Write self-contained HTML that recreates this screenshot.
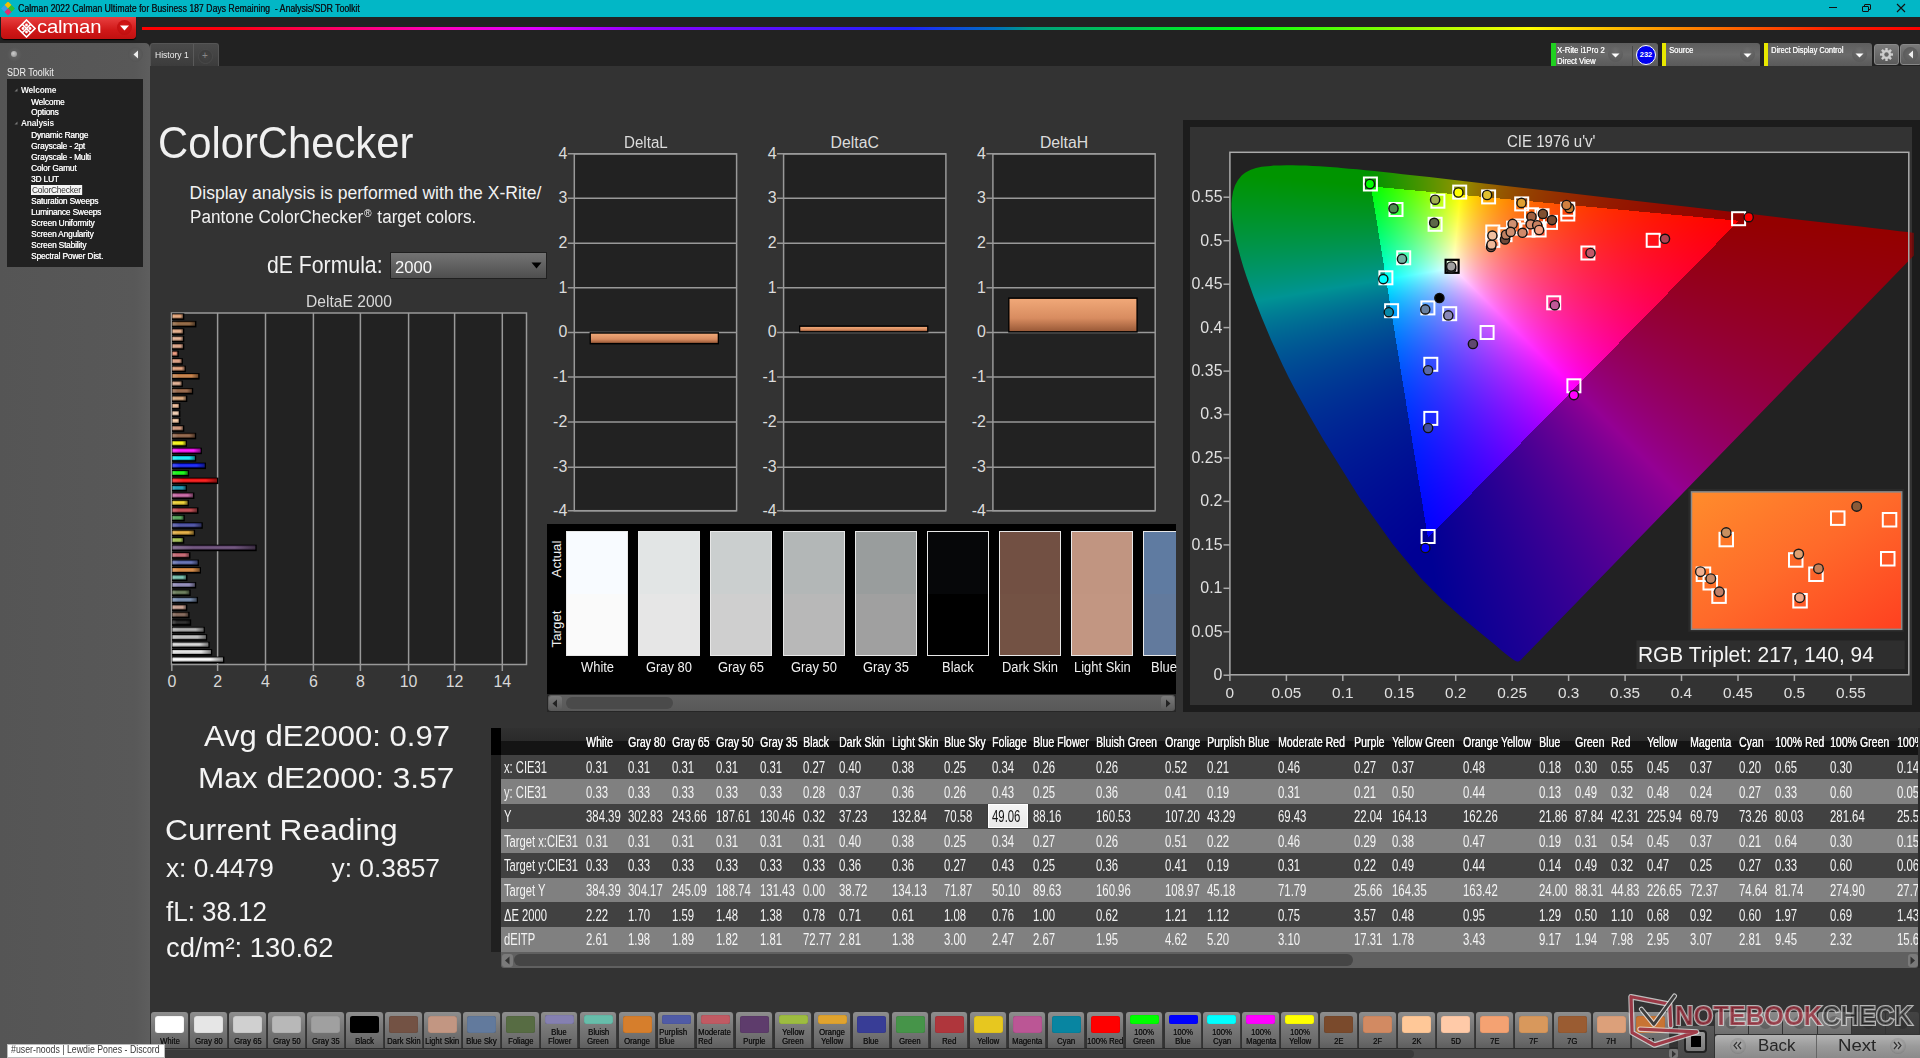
<!DOCTYPE html>
<html><head><meta charset="utf-8">
<style>
*{margin:0;padding:0;box-sizing:border-box}
html,body{width:1920px;height:1058px;overflow:hidden;background:#333}
body{font-family:"Liberation Sans",sans-serif;color:#eee;position:relative}
.a{position:absolute}
.t{position:absolute;white-space:nowrap;line-height:1}
.sx{display:inline-block;transform-origin:0 50%}
.tree div{position:absolute;white-space:nowrap;font-size:9px;line-height:11px;color:#f6f6f6;left:31px;letter-spacing:-0.2px;transform:scaleX(.93);transform-origin:0 0;text-shadow:0.3px 0 0 #f6f6f6}
.tree div.h{font-weight:bold;left:21px;text-shadow:none}
</style></head><body>
<!-- ================= TITLE BAR ================= -->
<div class="a" style="left:0;top:0;width:1920px;height:17px;background:#02b7c6"></div>
<svg class="a" style="left:1px;top:2px" width="14" height="14" viewBox="0 0 14 14">
<rect x="4.5" y="0.5" width="5" height="5" fill="#f3c000" transform="rotate(45 7 3)"/>
<rect x="1" y="4" width="5" height="5" fill="#38a0e8" transform="rotate(45 3.5 6.5)"/>
<rect x="8" y="4" width="5" height="5" fill="#30c030" transform="rotate(45 10.5 6.5)"/>
<rect x="4.5" y="7.5" width="5" height="5" fill="#e03070" transform="rotate(45 7 10)"/>
</svg>
<div class="t" style="left:18px;top:4px;font-size:10px;color:#0a1a20;text-shadow:0.3px 0 0 #0a1a20"><span class="sx" style="transform:scaleX(.87)">Calman 2022 Calman Ultimate for Business 187 Days Remaining &nbsp;- Analysis/SDR Toolkit</span></div>
<div class="a" style="left:1829px;top:7px;width:8px;height:1px;background:#111"></div>
<div class="a" style="left:1864px;top:4px;width:7px;height:6px;border:1px solid #111;border-radius:1px"></div>
<div class="a" style="left:1862px;top:6px;width:7px;height:6px;border:1px solid #111;background:#02b7c6;border-radius:1px"></div>
<svg class="a" style="left:1896px;top:3px" width="10" height="10"><path d="M1 1L9 9M9 1L1 9" stroke="#111" stroke-width="1.1"/></svg>

<!-- ================= DARK BAND ================= -->
<div class="a" style="left:0;top:17px;width:1920px;height:49px;background:#222"></div>
<!-- calman logo button -->
<div class="a" style="left:1px;top:17px;width:135px;height:22px;border-radius:0 0 4px 4px;background:linear-gradient(#e84040,#d01818 60%,#c01010);box-shadow:0 1px 1px #000"></div>
<svg class="a" style="left:17px;top:19px" width="19" height="19" viewBox="0 0 19 19">
<g fill="none" stroke="#fff" stroke-width="1.6">
<path d="M9.5 1L18 9.5L9.5 18L1 9.5Z"/>
<path d="M5.25 5.25L13.75 13.75M13.75 5.25L5.25 13.75"/>
</g>
<g fill="#fff"><circle cx="9.5" cy="6" r="1.4"/><circle cx="9.5" cy="13" r="1.4"/><circle cx="6" cy="9.5" r="1.4"/><circle cx="13" cy="9.5" r="1.4"/></g>
</svg>
<div class="t" style="left:37px;top:17px;font-size:19px;color:#fff;letter-spacing:-0.2px"><span class="sx" style="transform:scaleX(1.07)">calman</span></div>
<div class="a" style="left:117px;top:20px;width:15px;height:15px;border-radius:50%;background:radial-gradient(circle at 50% 40%,#d81818,#b80c0c)"></div>
<svg class="a" style="left:119px;top:25px" width="11" height="6"><path d="M1 0.5L10 0.5L5.5 5.5Z" fill="#fff"/></svg>
<!-- rainbow -->
<div class="a" style="left:142px;top:26.7px;width:1778px;height:3.8px;background:linear-gradient(90deg,#ff0000 0%,#ff0010 5%,#ff00c0 17%,#e000ff 22%,#9000ff 28%,#2020ff 43%,#0070c0 48%,#00a080 50%,#00ff10 62%,#80ff00 70%,#ffff00 78%,#ff9000 86%,#ff2000 95%,#ff0000 100%)"></div>

<!-- ================= LEFT PANEL ================= -->
<div class="a" style="left:0;top:43px;width:150px;height:1015px;background:linear-gradient(90deg,#555 0%,#585858 90%,#5e5e5e);border-radius:0 5px 0 0"></div>
<div class="a" style="left:7px;top:47px;width:15px;height:15px;border-radius:50%;background:radial-gradient(circle at 50% 50%,#666,#4e4e4e)"></div>
<div class="a" style="left:11px;top:51px;width:6px;height:6px;border-radius:50%;background:radial-gradient(circle at 40% 40%,#ccc,#888)"></div>
<div class="a" style="left:128px;top:47px;width:15px;height:15px;border-radius:50%;background:radial-gradient(circle at 50% 50%,#666,#4e4e4e)"></div>
<svg class="a" style="left:132px;top:50px" width="8" height="9"><path d="M6 0.5L6 8.5L1.5 4.5Z" fill="#eee"/></svg>
<div class="t" style="left:7px;top:68px;font-size:10px;color:#f0f0f0"><span class="sx" style="transform:scaleX(.9)">SDR Toolkit</span></div>
<div class="a tree" style="left:7px;top:79px;width:136px;height:188px;background:#212121">
</div>
<div class="tree">
<div class="h" style="top:85px">Welcome</div>
<div style="top:97px">Welcome</div>
<div style="top:107px">Options</div>
<div class="h" style="top:118px">Analysis</div>
<div style="top:130px">Dynamic Range</div>
<div style="top:141px">Grayscale - 2pt</div>
<div style="top:152px">Grayscale - Multi</div>
<div style="top:163px">Color Gamut</div>
<div style="top:174px">3D LUT</div>
<div style="top:185px;left:31px;background:#f4f4f4;color:#333;padding:0 1px;height:10px;line-height:10px">ColorChecker</div>
<div style="top:196px">Saturation Sweeps</div>
<div style="top:207px">Luminance Sweeps</div>
<div style="top:218px">Screen Uniformity</div>
<div style="top:229px">Screen Angularity</div>
<div style="top:240px">Screen Stability</div>
<div style="top:251px">Spectral Power Dist.</div>
</div>
<svg class="a" style="left:14px;top:88px" width="4" height="4"><path d="M3.5 0.5L3.5 3.5L0.5 3.5Z" fill="#777"/></svg>
<svg class="a" style="left:14px;top:121px" width="4" height="4"><path d="M3.5 0.5L3.5 3.5L0.5 3.5Z" fill="#777"/></svg>

<!-- ================= TABS ================= -->
<div class="a" style="left:150px;top:43px;width:69px;height:23px;background:linear-gradient(#4a4a4a,#3c3c3c);border:1px solid #555;border-bottom:none;border-radius:3px 3px 0 0"></div>
<div class="a" style="left:193px;top:44px;width:1px;height:22px;background:#5a5a5a"></div>
<div class="t" style="left:155px;top:51px;font-size:9px;color:#eee"><span class="sx" style="transform:scaleX(.95)">History 1</span></div>
<div class="a" style="left:198px;top:49px;width:15px;height:15px;border-radius:50%;background:radial-gradient(#444,#3a3a3a);border:1px solid #4a4a4a"></div>
<div class="t" style="left:202px;top:51px;font-size:10px;color:#888">+</div>


<!-- ================= RIGHT TOOLBAR ================= -->
<div class="a" style="left:1551px;top:43px;width:107px;height:23px;background:linear-gradient(#5e5e5e,#6a6a6a 50%,#5a5a5a);border-radius:3px 3px 0 0"></div>
<div class="a" style="left:1551px;top:43px;width:5px;height:23px;background:#20d020"></div>
<div class="t" style="left:1557px;top:45px;font-size:8.5px;color:#f4f4f4;line-height:10.5px;text-shadow:0.3px 0 0 #f4f4f4"><span class="sx" style="transform:scaleX(.9)">X-Rite i1Pro 2<br>Direct View</span></div>
<div class="a" style="left:1608px;top:47px;width:15px;height:15px;border-radius:50%;background:radial-gradient(circle at 50% 30%,#6e6e6e,#555)"></div>
<svg class="a" style="left:1611px;top:53px" width="9" height="5"><path d="M0.5 0.5L8.5 0.5L4.5 4.5Z" fill="#fff"/></svg>
<div class="a" style="left:1632px;top:46px;width:1px;height:20px;background:#4a4a4a"></div>
<div class="a" style="left:1636px;top:45px;width:20px;height:20px;border-radius:50%;background:#0000f0;border:1px solid #fff"></div>
<div class="t" style="left:1638px;top:51px;font-size:7.5px;color:#fff;width:16px;text-align:center;font-weight:bold">232</div>

<div class="a" style="left:1662px;top:43px;width:98px;height:23px;background:linear-gradient(#5e5e5e,#6a6a6a 50%,#5a5a5a);border-radius:3px 3px 0 0"></div>
<div class="a" style="left:1662px;top:43px;width:4px;height:23px;background:#e8e800"></div>
<div class="t" style="left:1669px;top:45px;font-size:8.5px;color:#f4f4f4;line-height:10.5px;text-shadow:0.3px 0 0 #f4f4f4"><span class="sx" style="transform:scaleX(.9)">Source</span></div>
<div class="a" style="left:1740px;top:47px;width:15px;height:15px;border-radius:50%;background:radial-gradient(circle at 50% 30%,#6e6e6e,#555)"></div>
<svg class="a" style="left:1743px;top:53px" width="9" height="5"><path d="M0.5 0.5L8.5 0.5L4.5 4.5Z" fill="#fff"/></svg>

<div class="a" style="left:1764px;top:43px;width:108px;height:23px;background:linear-gradient(#5e5e5e,#6a6a6a 50%,#5a5a5a);border-radius:3px 3px 0 0"></div>
<div class="a" style="left:1764px;top:43px;width:4px;height:23px;background:#e8e800"></div>
<div class="t" style="left:1771px;top:45px;font-size:8.5px;color:#f4f4f4;line-height:10.5px;text-shadow:0.3px 0 0 #f4f4f4"><span class="sx" style="transform:scaleX(.88)">Direct Display Control</span></div>
<div class="a" style="left:1852px;top:47px;width:15px;height:15px;border-radius:50%;background:radial-gradient(circle at 50% 30%,#6e6e6e,#555)"></div>
<svg class="a" style="left:1855px;top:53px" width="9" height="5"><path d="M0.5 0.5L8.5 0.5L4.5 4.5Z" fill="#fff"/></svg>

<div class="a" style="left:1874px;top:44px;width:25px;height:21px;background:linear-gradient(#7a7a7a,#5a5a5a);border:1px solid #888;border-radius:3px"></div>
<svg class="a" style="left:1879px;top:47px" width="15" height="15" viewBox="0 0 15 15"><g fill="#ccc"><circle cx="7.5" cy="7.5" r="4.6"/>
<rect x="6.3" y="1" width="2.4" height="13"/><rect x="1" y="6.3" width="13" height="2.4"/>
<rect x="6.3" y="1" width="2.4" height="13" transform="rotate(45 7.5 7.5)"/><rect x="6.3" y="1" width="2.4" height="13" transform="rotate(-45 7.5 7.5)"/></g>
<circle cx="7.5" cy="7.5" r="2.2" fill="#666"/></svg>
<div class="a" style="left:1900px;top:44px;width:22px;height:21px;background:linear-gradient(#7a7a7a,#5a5a5a);border:1px solid #888;border-radius:3px"></div>
<div class="a" style="left:1903px;top:47px;width:15px;height:15px;border-radius:50%;background:radial-gradient(#6a6a6a,#555)"></div>
<svg class="a" style="left:1907px;top:50px" width="8" height="9"><path d="M6 0.5L6 8.5L1.5 4.5Z" fill="#eee"/></svg>

<!-- main texts -->
<div class="t" style="left:157.6px;top:120.6px;font-size:44.93px;color:#f0f0f0"><span class="sx" style="transform:scaleX(0.930)">ColorChecker</span></div>
<div class="t" style="left:189.6px;top:184.7px;font-size:17.54px;color:#f2f2f2">Display analysis is performed with the X-Rite/</div>
<div class="t" style="left:189.6px;top:207.5px;font-size:17.54px;color:#f2f2f2"><span class="sx" style="transform:scaleX(0.976)">Pantone ColorChecker<span style="font-size:60%;vertical-align:0.55em;margin:0 1px">®</span> target colors.</span></div>
<div class="t" style="left:266.6px;top:253.9px;font-size:23.19px;color:#f2f2f2"><span class="sx" style="transform:scaleX(0.915)">dE Formula:</span></div>
<div class="a" style="left:389.5px;top:251.5px;width:157px;height:27px;background:linear-gradient(#737373,#616161 50%,#4e4e4e);border:1px solid #202020"></div>
<div class="t" style="left:394.8px;top:258.8px;font-size:17.39px;color:#f8f8f8"><span class="sx" style="transform:scaleX(0.956)">2000</span></div>
<svg class="a" style="left:530.5px;top:262px" width="12" height="7"><path d="M0.5 0.5L10.5 0.5L5.5 6.5Z" fill="#000"/></svg>
<div class="t" style="left:306.3px;top:292.9px;font-size:16.23px;color:#d8d8d8"><span class="sx" style="transform:scaleX(0.963)">DeltaE 2000</span></div>
<svg class="a" style="left:0;top:0" width="1920" height="1058">
<defs><linearGradient id="bg" x1="0" y1="0" x2="0" y2="1"><stop offset="0" stop-color="#000" stop-opacity=".25"/><stop offset=".45" stop-color="#fff" stop-opacity=".12"/><stop offset="1" stop-color="#000" stop-opacity=".4"/></linearGradient><linearGradient id="bh" x1="0" y1="0" x2="1" y2="0"><stop offset="0" stop-color="#fff" stop-opacity=".18"/><stop offset=".25" stop-color="#fff" stop-opacity="0"/><stop offset=".75" stop-color="#000" stop-opacity="0"/><stop offset="1" stop-color="#000" stop-opacity=".45"/></linearGradient><linearGradient id="ob" x1="0" y1="0" x2="0" y2="1"><stop offset="0" stop-color="#f0a878"/><stop offset=".6" stop-color="#d88c60"/><stop offset="1" stop-color="#9a5a38"/></linearGradient></defs>
<rect x="171.5" y="313" width="355" height="351.5" fill="#222" stroke="#999" stroke-width="1.5"/>
<line x1="217.6" y1="313" x2="217.6" y2="671" stroke="#999" stroke-width="1.5"/>
<line x1="265.5" y1="313" x2="265.5" y2="671" stroke="#999" stroke-width="1.5"/>
<line x1="313.4" y1="313" x2="313.4" y2="671" stroke="#999" stroke-width="1.5"/>
<line x1="360.4" y1="313" x2="360.4" y2="671" stroke="#999" stroke-width="1.5"/>
<line x1="408.6" y1="313" x2="408.6" y2="671" stroke="#999" stroke-width="1.5"/>
<line x1="454.6" y1="313" x2="454.6" y2="671" stroke="#999" stroke-width="1.5"/>
<line x1="502.3" y1="313" x2="502.3" y2="671" stroke="#999" stroke-width="1.5"/>
<line x1="171.8" y1="664.5" x2="171.8" y2="671" stroke="#999" stroke-width="1.5"/>
<rect x="172" y="656.6" width="52.4" height="6.5" fill="#000"/><rect x="172.5" y="657.5" width="50.4" height="4" fill="#ffffff"/><rect x="172.5" y="657.5" width="50.4" height="4" fill="url(#bg)"/><rect x="172.5" y="657.5" width="50.4" height="4" fill="url(#bh)"/>
<rect x="172" y="649.1" width="40.2" height="6.5" fill="#000"/><rect x="172.5" y="650.0" width="38.2" height="4" fill="#e8e8e8"/><rect x="172.5" y="650.0" width="38.2" height="4" fill="url(#bg)"/><rect x="172.5" y="650.0" width="38.2" height="4" fill="url(#bh)"/>
<rect x="172" y="641.7" width="37.7" height="6.5" fill="#000"/><rect x="172.5" y="642.6" width="35.7" height="4" fill="#d4d4d4"/><rect x="172.5" y="642.6" width="35.7" height="4" fill="url(#bg)"/><rect x="172.5" y="642.6" width="35.7" height="4" fill="url(#bh)"/>
<rect x="172" y="634.2" width="35.2" height="6.5" fill="#000"/><rect x="172.5" y="635.1" width="33.2" height="4" fill="#bdbdbd"/><rect x="172.5" y="635.1" width="33.2" height="4" fill="url(#bg)"/><rect x="172.5" y="635.1" width="33.2" height="4" fill="url(#bh)"/>
<rect x="172" y="626.8" width="32.9" height="6.5" fill="#000"/><rect x="172.5" y="627.7" width="30.9" height="4" fill="#a8a8a8"/><rect x="172.5" y="627.7" width="30.9" height="4" fill="url(#bg)"/><rect x="172.5" y="627.7" width="30.9" height="4" fill="url(#bh)"/>
<rect x="172" y="619.3" width="19.2" height="6.5" fill="#000"/><rect x="172.5" y="620.2" width="17.2" height="4" fill="#101010"/><rect x="172.5" y="620.2" width="17.2" height="4" fill="url(#bg)"/><rect x="172.5" y="620.2" width="17.2" height="4" fill="url(#bh)"/>
<rect x="172" y="611.8" width="17.6" height="6.5" fill="#000"/><rect x="172.5" y="612.7" width="15.6" height="4" fill="#7a5a4a"/><rect x="172.5" y="612.7" width="15.6" height="4" fill="url(#bg)"/><rect x="172.5" y="612.7" width="15.6" height="4" fill="url(#bh)"/>
<rect x="172" y="604.4" width="15.3" height="6.5" fill="#000"/><rect x="172.5" y="605.3" width="13.3" height="4" fill="#c89a88"/><rect x="172.5" y="605.3" width="13.3" height="4" fill="url(#bg)"/><rect x="172.5" y="605.3" width="13.3" height="4" fill="url(#bh)"/>
<rect x="172" y="596.9" width="26.0" height="6.5" fill="#000"/><rect x="172.5" y="597.8" width="24.0" height="4" fill="#6a82a8"/><rect x="172.5" y="597.8" width="24.0" height="4" fill="url(#bg)"/><rect x="172.5" y="597.8" width="24.0" height="4" fill="url(#bh)"/>
<rect x="172" y="589.5" width="18.7" height="6.5" fill="#000"/><rect x="172.5" y="590.4" width="16.7" height="4" fill="#5a7048"/><rect x="172.5" y="590.4" width="16.7" height="4" fill="url(#bg)"/><rect x="172.5" y="590.4" width="16.7" height="4" fill="url(#bh)"/>
<rect x="172" y="582.0" width="24.2" height="6.5" fill="#000"/><rect x="172.5" y="582.9" width="22.2" height="4" fill="#8a84b8"/><rect x="172.5" y="582.9" width="22.2" height="4" fill="url(#bg)"/><rect x="172.5" y="582.9" width="22.2" height="4" fill="url(#bh)"/>
<rect x="172" y="574.5" width="15.5" height="6.5" fill="#000"/><rect x="172.5" y="575.4" width="13.5" height="4" fill="#6cc0ac"/><rect x="172.5" y="575.4" width="13.5" height="4" fill="url(#bg)"/><rect x="172.5" y="575.4" width="13.5" height="4" fill="url(#bh)"/>
<rect x="172" y="567.1" width="29.0" height="6.5" fill="#000"/><rect x="172.5" y="568.0" width="27.0" height="4" fill="#dc8232"/><rect x="172.5" y="568.0" width="27.0" height="4" fill="url(#bg)"/><rect x="172.5" y="568.0" width="27.0" height="4" fill="url(#bh)"/>
<rect x="172" y="559.6" width="26.9" height="6.5" fill="#000"/><rect x="172.5" y="560.5" width="24.9" height="4" fill="#5462ae"/><rect x="172.5" y="560.5" width="24.9" height="4" fill="url(#bg)"/><rect x="172.5" y="560.5" width="24.9" height="4" fill="url(#bh)"/>
<rect x="172" y="552.2" width="18.5" height="6.5" fill="#000"/><rect x="172.5" y="553.1" width="16.5" height="4" fill="#c85c68"/><rect x="172.5" y="553.1" width="16.5" height="4" fill="url(#bg)"/><rect x="172.5" y="553.1" width="16.5" height="4" fill="url(#bh)"/>
<rect x="172" y="544.7" width="84.7" height="6.5" fill="#000"/><rect x="172.5" y="545.6" width="82.7" height="4" fill="#604070"/><rect x="172.5" y="545.6" width="82.7" height="4" fill="url(#bg)"/><rect x="172.5" y="545.6" width="82.7" height="4" fill="url(#bh)"/>
<rect x="172" y="537.2" width="12.3" height="6.5" fill="#000"/><rect x="172.5" y="538.1" width="10.3" height="4" fill="#a0c044"/><rect x="172.5" y="538.1" width="10.3" height="4" fill="url(#bg)"/><rect x="172.5" y="538.1" width="10.3" height="4" fill="url(#bh)"/>
<rect x="172" y="529.8" width="23.1" height="6.5" fill="#000"/><rect x="172.5" y="530.7" width="21.1" height="4" fill="#e4a830"/><rect x="172.5" y="530.7" width="21.1" height="4" fill="url(#bg)"/><rect x="172.5" y="530.7" width="21.1" height="4" fill="url(#bh)"/>
<rect x="172" y="522.3" width="30.8" height="6.5" fill="#000"/><rect x="172.5" y="523.2" width="28.8" height="4" fill="#3c42a0"/><rect x="172.5" y="523.2" width="28.8" height="4" fill="url(#bg)"/><rect x="172.5" y="523.2" width="28.8" height="4" fill="url(#bh)"/>
<rect x="172" y="514.9" width="12.8" height="6.5" fill="#000"/><rect x="172.5" y="515.8" width="10.8" height="4" fill="#48a04c"/><rect x="172.5" y="515.8" width="10.8" height="4" fill="url(#bg)"/><rect x="172.5" y="515.8" width="10.8" height="4" fill="url(#bh)"/>
<rect x="172" y="507.4" width="26.5" height="6.5" fill="#000"/><rect x="172.5" y="508.3" width="24.5" height="4" fill="#c03840"/><rect x="172.5" y="508.3" width="24.5" height="4" fill="url(#bg)"/><rect x="172.5" y="508.3" width="24.5" height="4" fill="url(#bh)"/>
<rect x="172" y="499.9" width="16.9" height="6.5" fill="#000"/><rect x="172.5" y="500.8" width="14.9" height="4" fill="#f0d020"/><rect x="172.5" y="500.8" width="14.9" height="4" fill="url(#bg)"/><rect x="172.5" y="500.8" width="14.9" height="4" fill="url(#bh)"/>
<rect x="172" y="492.5" width="22.4" height="6.5" fill="#000"/><rect x="172.5" y="493.4" width="20.4" height="4" fill="#c85aa0"/><rect x="172.5" y="493.4" width="20.4" height="4" fill="url(#bg)"/><rect x="172.5" y="493.4" width="20.4" height="4" fill="url(#bh)"/>
<rect x="172" y="485.0" width="15.0" height="6.5" fill="#000"/><rect x="172.5" y="485.9" width="13.0" height="4" fill="#0890b0"/><rect x="172.5" y="485.9" width="13.0" height="4" fill="url(#bg)"/><rect x="172.5" y="485.9" width="13.0" height="4" fill="url(#bh)"/>
<rect x="172" y="477.6" width="46.4" height="6.5" fill="#000"/><rect x="172.5" y="478.5" width="44.4" height="4" fill="#ff0000"/><rect x="172.5" y="478.5" width="44.4" height="4" fill="url(#bg)"/><rect x="172.5" y="478.5" width="44.4" height="4" fill="url(#bh)"/>
<rect x="172" y="470.1" width="17.1" height="6.5" fill="#000"/><rect x="172.5" y="471.0" width="15.1" height="4" fill="#00ff00"/><rect x="172.5" y="471.0" width="15.1" height="4" fill="url(#bg)"/><rect x="172.5" y="471.0" width="15.1" height="4" fill="url(#bh)"/>
<rect x="172" y="462.6" width="34.0" height="6.5" fill="#000"/><rect x="172.5" y="463.5" width="32.0" height="4" fill="#0010ff"/><rect x="172.5" y="463.5" width="32.0" height="4" fill="url(#bg)"/><rect x="172.5" y="463.5" width="32.0" height="4" fill="url(#bh)"/>
<rect x="172" y="455.2" width="24.2" height="6.5" fill="#000"/><rect x="172.5" y="456.1" width="22.2" height="4" fill="#00f0ff"/><rect x="172.5" y="456.1" width="22.2" height="4" fill="url(#bg)"/><rect x="172.5" y="456.1" width="22.2" height="4" fill="url(#bh)"/>
<rect x="172" y="447.7" width="29.9" height="6.5" fill="#000"/><rect x="172.5" y="448.6" width="27.9" height="4" fill="#ff00ff"/><rect x="172.5" y="448.6" width="27.9" height="4" fill="url(#bg)"/><rect x="172.5" y="448.6" width="27.9" height="4" fill="url(#bh)"/>
<rect x="172" y="440.3" width="15.0" height="6.5" fill="#000"/><rect x="172.5" y="441.2" width="13.0" height="4" fill="#ffff00"/><rect x="172.5" y="441.2" width="13.0" height="4" fill="url(#bg)"/><rect x="172.5" y="441.2" width="13.0" height="4" fill="url(#bh)"/>
<rect x="172" y="432.8" width="24.2" height="6.5" fill="#000"/><rect x="172.5" y="433.7" width="22.2" height="4" fill="#8a5838"/><rect x="172.5" y="433.7" width="22.2" height="4" fill="url(#bg)"/><rect x="172.5" y="433.7" width="22.2" height="4" fill="url(#bh)"/>
<rect x="172" y="425.3" width="12.3" height="6.5" fill="#000"/><rect x="172.5" y="426.2" width="10.3" height="4" fill="#d09070"/><rect x="172.5" y="426.2" width="10.3" height="4" fill="url(#bg)"/><rect x="172.5" y="426.2" width="10.3" height="4" fill="url(#bh)"/>
<rect x="172" y="417.9" width="8.4" height="6.5" fill="#000"/><rect x="172.5" y="418.8" width="6.4" height="4" fill="#f8c8a0"/><rect x="172.5" y="418.8" width="6.4" height="4" fill="url(#bg)"/><rect x="172.5" y="418.8" width="6.4" height="4" fill="url(#bh)"/>
<rect x="172" y="410.4" width="8.4" height="6.5" fill="#000"/><rect x="172.5" y="411.3" width="6.4" height="4" fill="#f8d0b0"/><rect x="172.5" y="411.3" width="6.4" height="4" fill="url(#bg)"/><rect x="172.5" y="411.3" width="6.4" height="4" fill="url(#bh)"/>
<rect x="172" y="403.0" width="8.4" height="6.5" fill="#000"/><rect x="172.5" y="403.9" width="6.4" height="4" fill="#f0b890"/><rect x="172.5" y="403.9" width="6.4" height="4" fill="url(#bg)"/><rect x="172.5" y="403.9" width="6.4" height="4" fill="url(#bh)"/>
<rect x="172" y="395.5" width="15.3" height="6.5" fill="#000"/><rect x="172.5" y="396.4" width="13.3" height="4" fill="#d8a070"/><rect x="172.5" y="396.4" width="13.3" height="4" fill="url(#bg)"/><rect x="172.5" y="396.4" width="13.3" height="4" fill="url(#bh)"/>
<rect x="172" y="388.0" width="21.2" height="6.5" fill="#000"/><rect x="172.5" y="388.9" width="19.2" height="4" fill="#905a38"/><rect x="172.5" y="388.9" width="19.2" height="4" fill="url(#bg)"/><rect x="172.5" y="388.9" width="19.2" height="4" fill="url(#bh)"/>
<rect x="172" y="380.6" width="10.9" height="6.5" fill="#000"/><rect x="172.5" y="381.5" width="8.9" height="4" fill="#e0a888"/><rect x="172.5" y="381.5" width="8.9" height="4" fill="url(#bg)"/><rect x="172.5" y="381.5" width="8.9" height="4" fill="url(#bh)"/>
<rect x="172" y="373.1" width="27.6" height="6.5" fill="#000"/><rect x="172.5" y="374.0" width="25.6" height="4" fill="#c87838"/><rect x="172.5" y="374.0" width="25.6" height="4" fill="url(#bg)"/><rect x="172.5" y="374.0" width="25.6" height="4" fill="url(#bh)"/>
<rect x="172" y="365.7" width="13.9" height="6.5" fill="#000"/><rect x="172.5" y="366.6" width="11.9" height="4" fill="#e09870"/><rect x="172.5" y="366.6" width="11.9" height="4" fill="url(#bg)"/><rect x="172.5" y="366.6" width="11.9" height="4" fill="url(#bh)"/>
<rect x="172" y="358.2" width="10.9" height="6.5" fill="#000"/><rect x="172.5" y="359.1" width="8.9" height="4" fill="#e09878"/><rect x="172.5" y="359.1" width="8.9" height="4" fill="url(#bg)"/><rect x="172.5" y="359.1" width="8.9" height="4" fill="url(#bh)"/>
<rect x="172" y="350.7" width="6.8" height="6.5" fill="#000"/><rect x="172.5" y="351.6" width="4.8" height="4" fill="#f09070"/><rect x="172.5" y="351.6" width="4.8" height="4" fill="url(#bg)"/><rect x="172.5" y="351.6" width="4.8" height="4" fill="url(#bh)"/>
<rect x="172" y="343.3" width="12.3" height="6.5" fill="#000"/><rect x="172.5" y="344.2" width="10.3" height="4" fill="#e0a080"/><rect x="172.5" y="344.2" width="10.3" height="4" fill="url(#bg)"/><rect x="172.5" y="344.2" width="10.3" height="4" fill="url(#bh)"/>
<rect x="172" y="335.8" width="12.3" height="6.5" fill="#000"/><rect x="172.5" y="336.7" width="10.3" height="4" fill="#e0a888"/><rect x="172.5" y="336.7" width="10.3" height="4" fill="url(#bg)"/><rect x="172.5" y="336.7" width="10.3" height="4" fill="url(#bh)"/>
<rect x="172" y="328.4" width="12.3" height="6.5" fill="#000"/><rect x="172.5" y="329.3" width="10.3" height="4" fill="#e8a880"/><rect x="172.5" y="329.3" width="10.3" height="4" fill="url(#bg)"/><rect x="172.5" y="329.3" width="10.3" height="4" fill="url(#bh)"/>
<rect x="172" y="320.9" width="24.4" height="6.5" fill="#000"/><rect x="172.5" y="321.8" width="22.4" height="4" fill="#8a5a30"/><rect x="172.5" y="321.8" width="22.4" height="4" fill="url(#bg)"/><rect x="172.5" y="321.8" width="22.4" height="4" fill="url(#bh)"/>
<rect x="172" y="313.4" width="12.3" height="6.5" fill="#000"/><rect x="172.5" y="314.3" width="10.3" height="4" fill="#e8a070"/><rect x="172.5" y="314.3" width="10.3" height="4" fill="url(#bg)"/><rect x="172.5" y="314.3" width="10.3" height="4" fill="url(#bh)"/>
<rect x="574.3" y="153.9" width="162.3" height="356.8" fill="#222" stroke="#999" stroke-width="1.5"/>
<line x1="567.8" y1="153.7" x2="736.6" y2="153.7" stroke="#999" stroke-width="1.5"/><line x1="567.8" y1="198.3" x2="736.6" y2="198.3" stroke="#999" stroke-width="1.5"/><line x1="567.8" y1="243.3" x2="736.6" y2="243.3" stroke="#999" stroke-width="1.5"/><line x1="567.8" y1="287.8" x2="736.6" y2="287.8" stroke="#999" stroke-width="1.5"/><line x1="567.8" y1="332.4" x2="736.6" y2="332.4" stroke="#999" stroke-width="1.5"/><line x1="567.8" y1="377.0" x2="736.6" y2="377.0" stroke="#999" stroke-width="1.5"/><line x1="567.8" y1="421.9" x2="736.6" y2="421.9" stroke="#999" stroke-width="1.5"/><line x1="567.8" y1="467.3" x2="736.6" y2="467.3" stroke="#999" stroke-width="1.5"/><line x1="567.8" y1="510.7" x2="736.6" y2="510.7" stroke="#999" stroke-width="1.5"/>
<rect x="783.6" y="153.9" width="162.3" height="356.8" fill="#222" stroke="#999" stroke-width="1.5"/>
<line x1="777.1" y1="153.7" x2="945.9" y2="153.7" stroke="#999" stroke-width="1.5"/><line x1="777.1" y1="198.3" x2="945.9" y2="198.3" stroke="#999" stroke-width="1.5"/><line x1="777.1" y1="243.3" x2="945.9" y2="243.3" stroke="#999" stroke-width="1.5"/><line x1="777.1" y1="287.8" x2="945.9" y2="287.8" stroke="#999" stroke-width="1.5"/><line x1="777.1" y1="332.4" x2="945.9" y2="332.4" stroke="#999" stroke-width="1.5"/><line x1="777.1" y1="377.0" x2="945.9" y2="377.0" stroke="#999" stroke-width="1.5"/><line x1="777.1" y1="421.9" x2="945.9" y2="421.9" stroke="#999" stroke-width="1.5"/><line x1="777.1" y1="467.3" x2="945.9" y2="467.3" stroke="#999" stroke-width="1.5"/><line x1="777.1" y1="510.7" x2="945.9" y2="510.7" stroke="#999" stroke-width="1.5"/>
<rect x="992.9" y="153.9" width="162.3" height="356.8" fill="#222" stroke="#999" stroke-width="1.5"/>
<line x1="986.4" y1="153.7" x2="1155.2" y2="153.7" stroke="#999" stroke-width="1.5"/><line x1="986.4" y1="198.3" x2="1155.2" y2="198.3" stroke="#999" stroke-width="1.5"/><line x1="986.4" y1="243.3" x2="1155.2" y2="243.3" stroke="#999" stroke-width="1.5"/><line x1="986.4" y1="287.8" x2="1155.2" y2="287.8" stroke="#999" stroke-width="1.5"/><line x1="986.4" y1="332.4" x2="1155.2" y2="332.4" stroke="#999" stroke-width="1.5"/><line x1="986.4" y1="377.0" x2="1155.2" y2="377.0" stroke="#999" stroke-width="1.5"/><line x1="986.4" y1="421.9" x2="1155.2" y2="421.9" stroke="#999" stroke-width="1.5"/><line x1="986.4" y1="467.3" x2="1155.2" y2="467.3" stroke="#999" stroke-width="1.5"/><line x1="986.4" y1="510.7" x2="1155.2" y2="510.7" stroke="#999" stroke-width="1.5"/>
<rect x="589.6" y="332.2" width="129.4" height="12.2" fill="#000"/><rect x="590.9" y="333.7" width="126.8" height="9.2" fill="url(#ob)"/>
<rect x="799.0" y="325.4" width="129.4" height="7.2" fill="#000"/><rect x="800.3" y="326.9" width="126.8" height="4.2" fill="url(#ob)"/>
<rect x="1008.2" y="297.4" width="129.5" height="35.2" fill="#000"/><rect x="1009.5" y="298.9" width="126.9" height="32.2" fill="url(#ob)"/>
</svg>
<div class="t" style="left:167.4px;top:673.9px;font-size:15.94px;color:#d8d8d8">0</div>
<div class="t" style="left:213.2px;top:673.9px;font-size:15.94px;color:#d8d8d8">2</div>
<div class="t" style="left:261.1px;top:673.9px;font-size:15.94px;color:#d8d8d8">4</div>
<div class="t" style="left:309.0px;top:673.9px;font-size:15.94px;color:#d8d8d8">6</div>
<div class="t" style="left:356.0px;top:673.9px;font-size:15.94px;color:#d8d8d8">8</div>
<div class="t" style="left:399.7px;top:673.9px;font-size:15.94px;color:#d8d8d8">10</div>
<div class="t" style="left:445.7px;top:673.9px;font-size:15.94px;color:#d8d8d8">12</div>
<div class="t" style="left:493.4px;top:673.9px;font-size:15.94px;color:#d8d8d8">14</div>
<div class="t" style="left:623.5px;top:135.3px;font-size:15.80px;color:#dcdcdc"><span class="sx" style="transform:scaleX(0.959)">DeltaL</span></div>
<div class="t" style="left:558.4px;top:145.6px;font-size:15.94px;color:#dcdcdc">4</div>
<div class="t" style="left:558.4px;top:190.2px;font-size:15.94px;color:#dcdcdc">3</div>
<div class="t" style="left:558.4px;top:235.2px;font-size:15.94px;color:#dcdcdc">2</div>
<div class="t" style="left:558.4px;top:279.7px;font-size:15.94px;color:#dcdcdc">1</div>
<div class="t" style="left:558.4px;top:324.3px;font-size:15.94px;color:#dcdcdc">0</div>
<div class="t" style="left:553.1px;top:368.9px;font-size:15.94px;color:#dcdcdc">-1</div>
<div class="t" style="left:553.1px;top:413.8px;font-size:15.94px;color:#dcdcdc">-2</div>
<div class="t" style="left:553.1px;top:459.2px;font-size:15.94px;color:#dcdcdc">-3</div>
<div class="t" style="left:553.1px;top:502.6px;font-size:15.94px;color:#dcdcdc">-4</div>
<div class="t" style="left:830.6px;top:135.3px;font-size:15.80px;color:#dcdcdc">DeltaC</div>
<div class="t" style="left:767.7px;top:145.6px;font-size:15.94px;color:#dcdcdc">4</div>
<div class="t" style="left:767.7px;top:190.2px;font-size:15.94px;color:#dcdcdc">3</div>
<div class="t" style="left:767.7px;top:235.2px;font-size:15.94px;color:#dcdcdc">2</div>
<div class="t" style="left:767.7px;top:279.7px;font-size:15.94px;color:#dcdcdc">1</div>
<div class="t" style="left:767.7px;top:324.3px;font-size:15.94px;color:#dcdcdc">0</div>
<div class="t" style="left:762.4px;top:368.9px;font-size:15.94px;color:#dcdcdc">-1</div>
<div class="t" style="left:762.4px;top:413.8px;font-size:15.94px;color:#dcdcdc">-2</div>
<div class="t" style="left:762.4px;top:459.2px;font-size:15.94px;color:#dcdcdc">-3</div>
<div class="t" style="left:762.4px;top:502.6px;font-size:15.94px;color:#dcdcdc">-4</div>
<div class="t" style="left:1039.9px;top:135.3px;font-size:15.80px;color:#dcdcdc">DeltaH</div>
<div class="t" style="left:977.0px;top:145.6px;font-size:15.94px;color:#dcdcdc">4</div>
<div class="t" style="left:977.0px;top:190.2px;font-size:15.94px;color:#dcdcdc">3</div>
<div class="t" style="left:977.0px;top:235.2px;font-size:15.94px;color:#dcdcdc">2</div>
<div class="t" style="left:977.0px;top:279.7px;font-size:15.94px;color:#dcdcdc">1</div>
<div class="t" style="left:977.0px;top:324.3px;font-size:15.94px;color:#dcdcdc">0</div>
<div class="t" style="left:971.7px;top:368.9px;font-size:15.94px;color:#dcdcdc">-1</div>
<div class="t" style="left:971.7px;top:413.8px;font-size:15.94px;color:#dcdcdc">-2</div>
<div class="t" style="left:971.7px;top:459.2px;font-size:15.94px;color:#dcdcdc">-3</div>
<div class="t" style="left:971.7px;top:502.6px;font-size:15.94px;color:#dcdcdc">-4</div>
<div class="a" style="left:547px;top:524px;width:629px;height:170px;background:#000;overflow:hidden">
<div class="a" style="left:19.2px;top:7px;width:62px;height:125px;border:1.5px solid #e8e8e8;background:linear-gradient(#f8fbff 50%,#fafafa 50%)"></div>
<div class="a" style="left:91.3px;top:7px;width:62px;height:125px;border:1.5px solid #e8e8e8;background:linear-gradient(#e2e5e5 50%,#e6e6e6 50%)"></div>
<div class="a" style="left:163.4px;top:7px;width:62px;height:125px;border:1.5px solid #e8e8e8;background:linear-gradient(#cbcfcf 50%,#cfcfcf 50%)"></div>
<div class="a" style="left:235.5px;top:7px;width:62px;height:125px;border:1.5px solid #e8e8e8;background:linear-gradient(#b3b7b7 50%,#b8b8b8 50%)"></div>
<div class="a" style="left:307.6px;top:7px;width:62px;height:125px;border:1.5px solid #e8e8e8;background:linear-gradient(#999d9d 50%,#a0a0a0 50%)"></div>
<div class="a" style="left:379.7px;top:7px;width:62px;height:125px;border:1.5px solid #e8e8e8;background:linear-gradient(#060709 50%,#000000 50%)"></div>
<div class="a" style="left:451.8px;top:7px;width:62px;height:125px;border:1.5px solid #e8e8e8;background:linear-gradient(#725043 50%,#735244 50%)"></div>
<div class="a" style="left:523.9px;top:7px;width:62px;height:125px;border:1.5px solid #e8e8e8;background:linear-gradient(#c19581 50%,#c29682 50%)"></div>
<div class="a" style="left:596.0px;top:7px;width:62px;height:125px;border:1.5px solid #e8e8e8;background:linear-gradient(#5f7ba1 50%,#627a9d 50%)"></div>
</div>
<div class="t" style="left:580.7px;top:661.0px;font-size:13.91px;color:#f0f0f0"><span class="sx" style="transform:scaleX(0.930)">White</span></div>
<div class="t" style="left:646.3px;top:661.0px;font-size:13.91px;color:#f0f0f0"><span class="sx" style="transform:scaleX(0.930)">Gray 80</span></div>
<div class="t" style="left:718.4px;top:661.0px;font-size:13.91px;color:#f0f0f0"><span class="sx" style="transform:scaleX(0.930)">Gray 65</span></div>
<div class="t" style="left:790.5px;top:661.0px;font-size:13.91px;color:#f0f0f0"><span class="sx" style="transform:scaleX(0.930)">Gray 50</span></div>
<div class="t" style="left:862.6px;top:661.0px;font-size:13.91px;color:#f0f0f0"><span class="sx" style="transform:scaleX(0.930)">Gray 35</span></div>
<div class="t" style="left:941.9px;top:661.0px;font-size:13.91px;color:#f0f0f0"><span class="sx" style="transform:scaleX(0.930)">Black</span></div>
<div class="t" style="left:1001.8px;top:661.0px;font-size:13.91px;color:#f0f0f0"><span class="sx" style="transform:scaleX(0.930)">Dark Skin</span></div>
<div class="t" style="left:1073.5px;top:661.0px;font-size:13.91px;color:#f0f0f0"><span class="sx" style="transform:scaleX(0.930)">Light Skin</span></div>
<div class="t" style="left:1150.5px;top:661.0px;font-size:13.91px;color:#f0f0f0"><span class="sx" style="transform:scaleX(0.930)">Blue</span></div>
<div class="a" style="left:547px;top:524px;width:629px;height:170px;overflow:hidden;pointer-events:none"><div class="a" style="left:1150px"></div></div>
<div class="t" style="left:557px;top:558.5px;font-size:13.3px;color:#f0f0f0;transform:translate(-50%,-50%) rotate(-90deg);transform-origin:50% 50%">Actual</div>
<div class="t" style="left:557px;top:629px;font-size:13.3px;color:#f0f0f0;transform:translate(-50%,-50%) rotate(-90deg);transform-origin:50% 50%">Target</div>
<div class="a" style="left:547px;top:694px;width:629px;height:18px;background:#262626"></div>
<div class="a" style="left:548px;top:695px;width:627px;height:16px;background:linear-gradient(#606060,#585858);border-radius:3px"></div>
<div class="a" style="left:566px;top:697px;width:107px;height:12px;background:#4a4a4a;border-radius:6px"></div>
<div class="a" style="left:549px;top:696px;width:13px;height:14px;background:linear-gradient(#7a7a7a,#5a5a5a);border-radius:3px"></div>
<svg class="a" style="left:551px;top:699px" width="8" height="9"><path d="M6 0.5L6 8.5L1.5 4.5Z" fill="#222"/></svg>
<div class="a" style="left:1161px;top:696px;width:13px;height:14px;background:linear-gradient(#7a7a7a,#5a5a5a);border-radius:3px"></div>
<svg class="a" style="left:1164px;top:699px" width="8" height="9"><path d="M2 0.5L2 8.5L6.5 4.5Z" fill="#222"/></svg>
<div class="a" style="left:1183px;top:120px;width:737px;height:592px;background:#1c1c1c"></div>
<div class="a" style="left:1190px;top:127px;width:722px;height:578px;background:#333"></div>
<div class="a" style="left:1230px;top:153px;width:678px;height:521px;background:#222"></div>
<svg class="a" style="left:0;top:0" width="1920" height="1058"><defs><clipPath id="plotclip"><polygon points="1519.9,660.9 1519.7,660.9 1519.4,661.0 1518.9,661.0 1518.7,661.4 1518.1,661.4 1517.2,661.4 1516.2,661.3 1514.6,660.5 1511.7,658.6 1507.7,655.6 1502.1,651.0 1495.0,644.9 1485.7,637.2 1473.9,627.4 1459.4,615.3 1441.8,599.5 1420.7,578.0 1392.6,544.0 1359.4,497.6 1323.4,439.9 1309.0,415.1 1295.3,390.0 1288.7,377.4 1282.6,365.0 1271.4,340.6 1261.7,317.4 1253.3,295.8 1246.3,276.0 1243.3,266.9 1240.7,258.3 1236.7,242.9 1233.9,229.3 1232.0,217.7 1231.5,207.7 1231.5,203.2 1231.8,199.0 1233.1,191.6 1235.1,185.3 1238.0,180.0 1241.6,175.6 1243.8,173.8 1245.9,172.2 1250.8,169.8 1256.0,168.0 1261.6,166.8 1267.5,166.1 1270.5,165.9 1273.7,165.6 1280.0,165.4 1286.5,165.3 1292.8,165.4 1299.2,165.4 1302.5,165.5 1305.8,165.6 1312.5,165.9 1319.3,166.3 1326.4,166.7 1333.7,167.3 1337.5,167.6 1341.2,168.0 1349.0,168.7 1357.1,169.4 1365.6,170.2 1374.3,171.1 1378.8,171.6 1383.4,172.0 1392.9,173.1 1402.7,174.1 1429.3,177.1 1458.6,180.4 1490.9,184.1 1526.0,188.2 1564.0,192.6 1604.2,197.2 1645.5,201.9 1685.5,206.5 1724.4,211.0 1759.5,215.0 1790.7,218.6 1817.2,221.7 1839.4,224.2 1858.2,226.4 1874.4,228.2 1888.1,229.8 1899.4,231.1 1907.9,232.1 1914.5,232.9 1919.5,233.4 1922.8,233.8 1925.5,234.1 1927.7,234.4 1929.8,234.6 1931.7,234.8 1932.8,235.0 1933.4,235.1 1933.7,235.1"/></clipPath><filter id="fbl" x="0" y="0" width="1" height="1"><feGaussianBlur stdDeviation="5"/></filter></defs><g clip-path="url(#plotclip)"><g filter="url(#fbl)"><rect x="1230" y="153" width="144" height="12" fill="#069606"/><rect x="1374" y="153" width="12" height="12" fill="#129606"/><rect x="1386" y="153" width="12" height="12" fill="#1e9606"/><rect x="1398" y="153" width="12" height="12" fill="#369606"/><rect x="1410" y="153" width="12" height="12" fill="#429606"/><rect x="1422" y="153" width="12" height="12" fill="#5a9606"/><rect x="1434" y="153" width="12" height="12" fill="#669606"/><rect x="1446" y="153" width="12" height="12" fill="#7e9606"/><rect x="1458" y="153" width="12" height="12" fill="#969606"/><rect x="1470" y="153" width="12" height="12" fill="#967e06"/><rect x="1482" y="153" width="12" height="12" fill="#967206"/><rect x="1494" y="153" width="24" height="12" fill="#965a06"/><rect x="1518" y="153" width="12" height="12" fill="#964e06"/><rect x="1530" y="153" width="12" height="12" fill="#964206"/><rect x="1542" y="153" width="24" height="12" fill="#963606"/><rect x="1566" y="153" width="36" height="12" fill="#962a06"/><rect x="1602" y="153" width="36" height="12" fill="#961e06"/><rect x="1638" y="153" width="72" height="12" fill="#961206"/><rect x="1710" y="153" width="204" height="12" fill="#960606"/><rect x="1230" y="165" width="144" height="12" fill="#069606"/><rect x="1374" y="165" width="12" height="12" fill="#129606"/><rect x="1386" y="165" width="12" height="12" fill="#1e9606"/><rect x="1398" y="165" width="12" height="12" fill="#2a9606"/><rect x="1410" y="165" width="12" height="12" fill="#429606"/><rect x="1422" y="165" width="12" height="12" fill="#5a9606"/><rect x="1434" y="165" width="12" height="12" fill="#669606"/><rect x="1446" y="165" width="12" height="12" fill="#7e9606"/><rect x="1458" y="165" width="12" height="12" fill="#969606"/><rect x="1470" y="165" width="12" height="12" fill="#967e06"/><rect x="1482" y="165" width="12" height="12" fill="#966606"/><rect x="1494" y="165" width="12" height="12" fill="#965a06"/><rect x="1506" y="165" width="24" height="12" fill="#964e06"/><rect x="1530" y="165" width="12" height="12" fill="#964206"/><rect x="1542" y="165" width="24" height="12" fill="#963606"/><rect x="1566" y="165" width="24" height="12" fill="#962a06"/><rect x="1590" y="165" width="48" height="12" fill="#961e06"/><rect x="1638" y="165" width="60" height="12" fill="#961206"/><rect x="1698" y="165" width="216" height="12" fill="#960606"/><rect x="1230" y="177" width="144" height="12" fill="#069606"/><rect x="1374" y="177" width="12" height="12" fill="#129606"/><rect x="1386" y="177" width="12" height="12" fill="#1e9606"/><rect x="1398" y="177" width="12" height="12" fill="#2a9606"/><rect x="1410" y="177" width="12" height="12" fill="#429606"/><rect x="1422" y="177" width="12" height="12" fill="#5a9606"/><rect x="1434" y="177" width="12" height="12" fill="#669606"/><rect x="1446" y="177" width="12" height="12" fill="#7e9606"/><rect x="1458" y="177" width="12" height="12" fill="#968a06"/><rect x="1470" y="177" width="12" height="12" fill="#967e06"/><rect x="1482" y="177" width="12" height="12" fill="#966606"/><rect x="1494" y="177" width="12" height="12" fill="#965a06"/><rect x="1506" y="177" width="12" height="12" fill="#964e06"/><rect x="1518" y="177" width="24" height="12" fill="#964206"/><rect x="1542" y="177" width="24" height="12" fill="#963606"/><rect x="1566" y="177" width="24" height="12" fill="#962a06"/><rect x="1590" y="177" width="36" height="12" fill="#961e06"/><rect x="1626" y="177" width="60" height="12" fill="#961206"/><rect x="1686" y="177" width="228" height="12" fill="#960606"/><rect x="1230" y="189" width="120" height="12" fill="#069612"/><rect x="1350" y="189" width="24" height="12" fill="#069606"/><rect x="1374" y="189" width="12" height="12" fill="#12ff12"/><rect x="1386" y="189" width="12" height="12" fill="#2aff12"/><rect x="1398" y="189" width="12" height="12" fill="#4eff12"/><rect x="1410" y="189" width="12" height="12" fill="#72ff06"/><rect x="1422" y="189" width="12" height="12" fill="#96ff06"/><rect x="1434" y="189" width="12" height="12" fill="#baff06"/><rect x="1446" y="189" width="12" height="12" fill="#deff06"/><rect x="1458" y="189" width="12" height="12" fill="#968a06"/><rect x="1470" y="189" width="12" height="12" fill="#967206"/><rect x="1482" y="189" width="12" height="12" fill="#966606"/><rect x="1494" y="189" width="12" height="12" fill="#965a06"/><rect x="1506" y="189" width="12" height="12" fill="#964e06"/><rect x="1518" y="189" width="12" height="12" fill="#964206"/><rect x="1530" y="189" width="24" height="12" fill="#963606"/><rect x="1554" y="189" width="36" height="12" fill="#962a06"/><rect x="1590" y="189" width="36" height="12" fill="#961e06"/><rect x="1626" y="189" width="48" height="12" fill="#961206"/><rect x="1674" y="189" width="240" height="12" fill="#960606"/><rect x="1230" y="201" width="144" height="12" fill="#06961e"/><rect x="1374" y="201" width="12" height="12" fill="#12ff2a"/><rect x="1386" y="201" width="12" height="12" fill="#2aff2a"/><rect x="1398" y="201" width="12" height="12" fill="#4eff2a"/><rect x="1410" y="201" width="12" height="12" fill="#72ff2a"/><rect x="1422" y="201" width="12" height="12" fill="#96ff2a"/><rect x="1434" y="201" width="12" height="12" fill="#baff2a"/><rect x="1446" y="201" width="12" height="12" fill="#eaff1e"/><rect x="1458" y="201" width="12" height="12" fill="#ffea1e"/><rect x="1470" y="201" width="12" height="12" fill="#ffc61e"/><rect x="1482" y="201" width="12" height="12" fill="#ffae12"/><rect x="1494" y="201" width="12" height="12" fill="#ff9612"/><rect x="1506" y="201" width="12" height="12" fill="#ff7e12"/><rect x="1518" y="201" width="12" height="12" fill="#ff7206"/><rect x="1530" y="201" width="12" height="12" fill="#ff6606"/><rect x="1542" y="201" width="12" height="12" fill="#ff5a06"/><rect x="1554" y="201" width="12" height="12" fill="#ff4e06"/><rect x="1566" y="201" width="12" height="12" fill="#ff4206"/><rect x="1578" y="201" width="12" height="12" fill="#ff3606"/><rect x="1590" y="201" width="24" height="12" fill="#961e06"/><rect x="1614" y="201" width="60" height="12" fill="#961206"/><rect x="1674" y="201" width="240" height="12" fill="#960606"/><rect x="1230" y="213" width="144" height="12" fill="#06962a"/><rect x="1374" y="213" width="12" height="12" fill="#06ff4e"/><rect x="1386" y="213" width="12" height="12" fill="#2aff4e"/><rect x="1398" y="213" width="12" height="12" fill="#4eff4e"/><rect x="1410" y="213" width="12" height="12" fill="#72ff42"/><rect x="1422" y="213" width="12" height="12" fill="#96ff42"/><rect x="1434" y="213" width="12" height="12" fill="#baff42"/><rect x="1446" y="213" width="12" height="12" fill="#eaff42"/><rect x="1458" y="213" width="12" height="12" fill="#ffea42"/><rect x="1470" y="213" width="12" height="12" fill="#ffc636"/><rect x="1482" y="213" width="12" height="12" fill="#ffa22a"/><rect x="1494" y="213" width="12" height="12" fill="#ff8a2a"/><rect x="1506" y="213" width="12" height="12" fill="#ff7e1e"/><rect x="1518" y="213" width="12" height="12" fill="#ff661e"/><rect x="1530" y="213" width="12" height="12" fill="#ff5a1e"/><rect x="1542" y="213" width="24" height="12" fill="#ff4e12"/><rect x="1566" y="213" width="12" height="12" fill="#ff4212"/><rect x="1578" y="213" width="24" height="12" fill="#ff3612"/><rect x="1602" y="213" width="24" height="12" fill="#ff2a06"/><rect x="1626" y="213" width="24" height="12" fill="#ff1e06"/><rect x="1650" y="213" width="36" height="12" fill="#ff1206"/><rect x="1686" y="213" width="36" height="12" fill="#ff0606"/><rect x="1722" y="213" width="192" height="12" fill="#960606"/><rect x="1230" y="225" width="144" height="12" fill="#069636"/><rect x="1374" y="225" width="12" height="12" fill="#06ff66"/><rect x="1386" y="225" width="12" height="12" fill="#2aff66"/><rect x="1398" y="225" width="12" height="12" fill="#42ff66"/><rect x="1410" y="225" width="12" height="12" fill="#66ff66"/><rect x="1422" y="225" width="12" height="12" fill="#96ff66"/><rect x="1434" y="225" width="12" height="12" fill="#baff72"/><rect x="1446" y="225" width="12" height="12" fill="#eaff72"/><rect x="1458" y="225" width="12" height="12" fill="#ffde66"/><rect x="1470" y="225" width="12" height="12" fill="#ffba5a"/><rect x="1482" y="225" width="12" height="12" fill="#ffa24e"/><rect x="1494" y="225" width="12" height="12" fill="#ff8a42"/><rect x="1506" y="225" width="12" height="12" fill="#ff7236"/><rect x="1518" y="225" width="12" height="12" fill="#ff6636"/><rect x="1530" y="225" width="12" height="12" fill="#ff5a2a"/><rect x="1542" y="225" width="12" height="12" fill="#ff4e2a"/><rect x="1554" y="225" width="12" height="12" fill="#ff421e"/><rect x="1566" y="225" width="24" height="12" fill="#ff361e"/><rect x="1590" y="225" width="12" height="12" fill="#ff2a1e"/><rect x="1602" y="225" width="12" height="12" fill="#ff2a12"/><rect x="1614" y="225" width="24" height="12" fill="#ff1e12"/><rect x="1638" y="225" width="36" height="12" fill="#ff1212"/><rect x="1674" y="225" width="12" height="12" fill="#ff0612"/><rect x="1686" y="225" width="48" height="12" fill="#ff0606"/><rect x="1734" y="225" width="180" height="12" fill="#960606"/><rect x="1230" y="237" width="60" height="12" fill="#069642"/><rect x="1290" y="237" width="96" height="12" fill="#06964e"/><rect x="1386" y="237" width="12" height="12" fill="#1eff8a"/><rect x="1398" y="237" width="12" height="12" fill="#42ff8a"/><rect x="1410" y="237" width="12" height="12" fill="#66ff8a"/><rect x="1422" y="237" width="12" height="12" fill="#96ff96"/><rect x="1434" y="237" width="12" height="12" fill="#baff96"/><rect x="1446" y="237" width="12" height="12" fill="#eaff96"/><rect x="1458" y="237" width="12" height="12" fill="#ffde8a"/><rect x="1470" y="237" width="12" height="12" fill="#ffba72"/><rect x="1482" y="237" width="12" height="12" fill="#ffa266"/><rect x="1494" y="237" width="12" height="12" fill="#ff8a5a"/><rect x="1506" y="237" width="12" height="12" fill="#ff724e"/><rect x="1518" y="237" width="12" height="12" fill="#ff6642"/><rect x="1530" y="237" width="12" height="12" fill="#ff5a42"/><rect x="1542" y="237" width="12" height="12" fill="#ff4e36"/><rect x="1554" y="237" width="12" height="12" fill="#ff4236"/><rect x="1566" y="237" width="24" height="12" fill="#ff362a"/><rect x="1590" y="237" width="12" height="12" fill="#ff2a2a"/><rect x="1602" y="237" width="36" height="12" fill="#ff1e1e"/><rect x="1638" y="237" width="24" height="12" fill="#ff121e"/><rect x="1662" y="237" width="12" height="12" fill="#ff1212"/><rect x="1674" y="237" width="48" height="12" fill="#ff0612"/><rect x="1722" y="237" width="192" height="12" fill="#960606"/><rect x="1230" y="249" width="24" height="12" fill="#06964e"/><rect x="1254" y="249" width="108" height="12" fill="#06965a"/><rect x="1362" y="249" width="24" height="12" fill="#069666"/><rect x="1386" y="249" width="12" height="12" fill="#1effae"/><rect x="1398" y="249" width="12" height="12" fill="#42ffae"/><rect x="1410" y="249" width="12" height="12" fill="#66ffba"/><rect x="1422" y="249" width="12" height="12" fill="#96ffba"/><rect x="1434" y="249" width="12" height="12" fill="#c6ffc6"/><rect x="1446" y="249" width="12" height="12" fill="#f6ffc6"/><rect x="1458" y="249" width="12" height="12" fill="#ffdeae"/><rect x="1470" y="249" width="12" height="12" fill="#ffae96"/><rect x="1482" y="249" width="12" height="12" fill="#ff967e"/><rect x="1494" y="249" width="12" height="12" fill="#ff7e72"/><rect x="1506" y="249" width="12" height="12" fill="#ff7266"/><rect x="1518" y="249" width="12" height="12" fill="#ff5a5a"/><rect x="1530" y="249" width="12" height="12" fill="#ff4e4e"/><rect x="1542" y="249" width="12" height="12" fill="#ff424e"/><rect x="1554" y="249" width="12" height="12" fill="#ff4242"/><rect x="1566" y="249" width="12" height="12" fill="#ff3642"/><rect x="1578" y="249" width="24" height="12" fill="#ff2a36"/><rect x="1602" y="249" width="12" height="12" fill="#ff1e36"/><rect x="1614" y="249" width="12" height="12" fill="#ff1e2a"/><rect x="1626" y="249" width="36" height="12" fill="#ff122a"/><rect x="1662" y="249" width="48" height="12" fill="#ff061e"/><rect x="1710" y="249" width="48" height="12" fill="#960612"/><rect x="1758" y="249" width="156" height="12" fill="#960606"/><rect x="1230" y="261" width="84" height="12" fill="#069666"/><rect x="1314" y="261" width="60" height="12" fill="#069672"/><rect x="1374" y="261" width="12" height="12" fill="#06967e"/><rect x="1386" y="261" width="12" height="12" fill="#12ffd2"/><rect x="1398" y="261" width="12" height="12" fill="#42ffde"/><rect x="1410" y="261" width="12" height="12" fill="#66ffde"/><rect x="1422" y="261" width="12" height="12" fill="#96ffea"/><rect x="1434" y="261" width="12" height="12" fill="#c6fff6"/><rect x="1446" y="261" width="12" height="12" fill="#f6fff6"/><rect x="1458" y="261" width="12" height="12" fill="#ffd2d2"/><rect x="1470" y="261" width="12" height="12" fill="#ffaeba"/><rect x="1482" y="261" width="12" height="12" fill="#ff96a2"/><rect x="1494" y="261" width="12" height="12" fill="#ff7e8a"/><rect x="1506" y="261" width="12" height="12" fill="#ff667e"/><rect x="1518" y="261" width="12" height="12" fill="#ff5a72"/><rect x="1530" y="261" width="12" height="12" fill="#ff4e66"/><rect x="1542" y="261" width="12" height="12" fill="#ff425a"/><rect x="1554" y="261" width="12" height="12" fill="#ff365a"/><rect x="1566" y="261" width="24" height="12" fill="#ff2a4e"/><rect x="1590" y="261" width="24" height="12" fill="#ff1e42"/><rect x="1614" y="261" width="36" height="12" fill="#ff1236"/><rect x="1650" y="261" width="48" height="12" fill="#ff062a"/><rect x="1698" y="261" width="120" height="12" fill="#960612"/><rect x="1818" y="261" width="96" height="12" fill="#960606"/><rect x="1230" y="273" width="48" height="12" fill="#069672"/><rect x="1278" y="273" width="60" height="12" fill="#06967e"/><rect x="1338" y="273" width="36" height="12" fill="#06968a"/><rect x="1374" y="273" width="12" height="12" fill="#069696"/><rect x="1386" y="273" width="12" height="12" fill="#12ffff"/><rect x="1398" y="273" width="12" height="12" fill="#36f6ff"/><rect x="1410" y="273" width="12" height="12" fill="#5aeaff"/><rect x="1422" y="273" width="12" height="12" fill="#7eeaff"/><rect x="1434" y="273" width="12" height="12" fill="#aedeff"/><rect x="1446" y="273" width="12" height="12" fill="#d2d2ff"/><rect x="1458" y="273" width="12" height="12" fill="#ffd2ff"/><rect x="1470" y="273" width="12" height="12" fill="#ffaede"/><rect x="1482" y="273" width="12" height="12" fill="#ff8aba"/><rect x="1494" y="273" width="12" height="12" fill="#ff72a2"/><rect x="1506" y="273" width="12" height="12" fill="#ff6696"/><rect x="1518" y="273" width="12" height="12" fill="#ff5a8a"/><rect x="1530" y="273" width="12" height="12" fill="#ff427e"/><rect x="1542" y="273" width="12" height="12" fill="#ff4272"/><rect x="1554" y="273" width="12" height="12" fill="#ff3666"/><rect x="1566" y="273" width="24" height="12" fill="#ff2a5a"/><rect x="1590" y="273" width="24" height="12" fill="#ff1e4e"/><rect x="1614" y="273" width="24" height="12" fill="#ff1242"/><rect x="1638" y="273" width="12" height="12" fill="#ff0642"/><rect x="1650" y="273" width="36" height="12" fill="#ff0636"/><rect x="1686" y="273" width="36" height="12" fill="#96061e"/><rect x="1722" y="273" width="168" height="12" fill="#960612"/><rect x="1890" y="273" width="24" height="12" fill="#960606"/><rect x="1230" y="285" width="24" height="12" fill="#06967e"/><rect x="1254" y="285" width="48" height="12" fill="#06968a"/><rect x="1302" y="285" width="24" height="12" fill="#069696"/><rect x="1326" y="285" width="48" height="12" fill="#068a96"/><rect x="1374" y="285" width="12" height="12" fill="#067e96"/><rect x="1386" y="285" width="12" height="12" fill="#06d2ff"/><rect x="1398" y="285" width="12" height="12" fill="#2ad2ff"/><rect x="1410" y="285" width="12" height="12" fill="#4ec6ff"/><rect x="1422" y="285" width="12" height="12" fill="#72c6ff"/><rect x="1434" y="285" width="12" height="12" fill="#96baff"/><rect x="1446" y="285" width="12" height="12" fill="#baaeff"/><rect x="1458" y="285" width="12" height="12" fill="#deaeff"/><rect x="1470" y="285" width="12" height="12" fill="#ffa2ff"/><rect x="1482" y="285" width="12" height="12" fill="#ff8ade"/><rect x="1494" y="285" width="12" height="12" fill="#ff72c6"/><rect x="1506" y="285" width="12" height="12" fill="#ff5aae"/><rect x="1518" y="285" width="12" height="12" fill="#ff4ea2"/><rect x="1530" y="285" width="12" height="12" fill="#ff428a"/><rect x="1542" y="285" width="12" height="12" fill="#ff367e"/><rect x="1554" y="285" width="24" height="12" fill="#ff2a72"/><rect x="1578" y="285" width="12" height="12" fill="#ff1e66"/><rect x="1590" y="285" width="12" height="12" fill="#ff1e5a"/><rect x="1602" y="285" width="12" height="12" fill="#ff125a"/><rect x="1614" y="285" width="12" height="12" fill="#ff124e"/><rect x="1626" y="285" width="24" height="12" fill="#ff064e"/><rect x="1650" y="285" width="24" height="12" fill="#ff0642"/><rect x="1674" y="285" width="96" height="12" fill="#96061e"/><rect x="1770" y="285" width="144" height="12" fill="#960612"/><rect x="1230" y="297" width="24" height="12" fill="#069696"/><rect x="1254" y="297" width="48" height="12" fill="#068a96"/><rect x="1302" y="297" width="48" height="12" fill="#067e96"/><rect x="1350" y="297" width="36" height="12" fill="#067296"/><rect x="1386" y="297" width="12" height="12" fill="#06baff"/><rect x="1398" y="297" width="12" height="12" fill="#1eaeff"/><rect x="1410" y="297" width="12" height="12" fill="#42aeff"/><rect x="1422" y="297" width="12" height="12" fill="#5aa2ff"/><rect x="1434" y="297" width="12" height="12" fill="#7ea2ff"/><rect x="1446" y="297" width="12" height="12" fill="#a296ff"/><rect x="1458" y="297" width="12" height="12" fill="#ba8aff"/><rect x="1470" y="297" width="12" height="12" fill="#de8aff"/><rect x="1482" y="297" width="12" height="12" fill="#ff7eff"/><rect x="1494" y="297" width="12" height="12" fill="#ff66de"/><rect x="1506" y="297" width="12" height="12" fill="#ff5ac6"/><rect x="1518" y="297" width="12" height="12" fill="#ff4eba"/><rect x="1530" y="297" width="12" height="12" fill="#ff42a2"/><rect x="1542" y="297" width="12" height="12" fill="#ff3696"/><rect x="1554" y="297" width="12" height="12" fill="#ff2a8a"/><rect x="1566" y="297" width="12" height="12" fill="#ff1e7e"/><rect x="1578" y="297" width="12" height="12" fill="#ff1e72"/><rect x="1590" y="297" width="12" height="12" fill="#ff1272"/><rect x="1602" y="297" width="24" height="12" fill="#ff1266"/><rect x="1626" y="297" width="24" height="12" fill="#ff065a"/><rect x="1650" y="297" width="12" height="12" fill="#ff064e"/><rect x="1662" y="297" width="48" height="12" fill="#96062a"/><rect x="1710" y="297" width="108" height="12" fill="#96061e"/><rect x="1818" y="297" width="96" height="12" fill="#960612"/><rect x="1230" y="309" width="12" height="12" fill="#068a96"/><rect x="1242" y="309" width="48" height="12" fill="#067e96"/><rect x="1290" y="309" width="48" height="12" fill="#067296"/><rect x="1338" y="309" width="36" height="12" fill="#066696"/><rect x="1374" y="309" width="12" height="12" fill="#065a96"/><rect x="1386" y="309" width="12" height="12" fill="#06a2ff"/><rect x="1398" y="309" width="12" height="12" fill="#1e96ff"/><rect x="1410" y="309" width="12" height="12" fill="#3696ff"/><rect x="1422" y="309" width="12" height="12" fill="#4e8aff"/><rect x="1434" y="309" width="12" height="12" fill="#728aff"/><rect x="1446" y="309" width="12" height="12" fill="#8a7eff"/><rect x="1458" y="309" width="12" height="12" fill="#a27eff"/><rect x="1470" y="309" width="12" height="12" fill="#c672ff"/><rect x="1482" y="309" width="12" height="12" fill="#de66ff"/><rect x="1494" y="309" width="12" height="12" fill="#ff66ff"/><rect x="1506" y="309" width="12" height="12" fill="#ff4ede"/><rect x="1518" y="309" width="12" height="12" fill="#ff42d2"/><rect x="1530" y="309" width="12" height="12" fill="#ff36ba"/><rect x="1542" y="309" width="12" height="12" fill="#ff2aae"/><rect x="1554" y="309" width="12" height="12" fill="#ff2aa2"/><rect x="1566" y="309" width="12" height="12" fill="#ff1e96"/><rect x="1578" y="309" width="12" height="12" fill="#ff128a"/><rect x="1590" y="309" width="12" height="12" fill="#ff127e"/><rect x="1602" y="309" width="12" height="12" fill="#ff1272"/><rect x="1614" y="309" width="12" height="12" fill="#ff0672"/><rect x="1626" y="309" width="24" height="12" fill="#ff0666"/><rect x="1650" y="309" width="24" height="12" fill="#960636"/><rect x="1674" y="309" width="72" height="12" fill="#96062a"/><rect x="1746" y="309" width="120" height="12" fill="#96061e"/><rect x="1866" y="309" width="48" height="12" fill="#960612"/><rect x="1230" y="321" width="60" height="12" fill="#067296"/><rect x="1290" y="321" width="48" height="12" fill="#066696"/><rect x="1338" y="321" width="36" height="12" fill="#065a96"/><rect x="1374" y="321" width="24" height="12" fill="#064e96"/><rect x="1398" y="321" width="12" height="12" fill="#128aff"/><rect x="1410" y="321" width="12" height="12" fill="#2a7eff"/><rect x="1422" y="321" width="12" height="12" fill="#427eff"/><rect x="1434" y="321" width="12" height="12" fill="#5a72ff"/><rect x="1446" y="321" width="12" height="12" fill="#7272ff"/><rect x="1458" y="321" width="12" height="12" fill="#9666ff"/><rect x="1470" y="321" width="12" height="12" fill="#ae5aff"/><rect x="1482" y="321" width="12" height="12" fill="#c65aff"/><rect x="1494" y="321" width="12" height="12" fill="#de4eff"/><rect x="1506" y="321" width="12" height="12" fill="#ff4eff"/><rect x="1518" y="321" width="12" height="12" fill="#ff42ea"/><rect x="1530" y="321" width="12" height="12" fill="#ff36d2"/><rect x="1542" y="321" width="12" height="12" fill="#ff2aba"/><rect x="1554" y="321" width="12" height="12" fill="#ff1eae"/><rect x="1566" y="321" width="12" height="12" fill="#ff1ea2"/><rect x="1578" y="321" width="12" height="12" fill="#ff1296"/><rect x="1590" y="321" width="12" height="12" fill="#ff128a"/><rect x="1602" y="321" width="24" height="12" fill="#ff067e"/><rect x="1626" y="321" width="12" height="12" fill="#ff0672"/><rect x="1638" y="321" width="12" height="12" fill="#960642"/><rect x="1650" y="321" width="60" height="12" fill="#960636"/><rect x="1710" y="321" width="72" height="12" fill="#96062a"/><rect x="1782" y="321" width="132" height="12" fill="#96061e"/><rect x="1230" y="333" width="60" height="12" fill="#066696"/><rect x="1290" y="333" width="48" height="12" fill="#065a96"/><rect x="1338" y="333" width="48" height="12" fill="#064e96"/><rect x="1386" y="333" width="12" height="12" fill="#064296"/><rect x="1398" y="333" width="12" height="12" fill="#1272ff"/><rect x="1410" y="333" width="12" height="12" fill="#2a72ff"/><rect x="1422" y="333" width="12" height="12" fill="#4266ff"/><rect x="1434" y="333" width="12" height="12" fill="#4e66ff"/><rect x="1446" y="333" width="12" height="12" fill="#665aff"/><rect x="1458" y="333" width="12" height="12" fill="#7e5aff"/><rect x="1470" y="333" width="12" height="12" fill="#964eff"/><rect x="1482" y="333" width="12" height="12" fill="#ae4eff"/><rect x="1494" y="333" width="12" height="12" fill="#c642ff"/><rect x="1506" y="333" width="12" height="12" fill="#ea42ff"/><rect x="1518" y="333" width="12" height="12" fill="#ff36ff"/><rect x="1530" y="333" width="12" height="12" fill="#ff2aea"/><rect x="1542" y="333" width="12" height="12" fill="#ff2ad2"/><rect x="1554" y="333" width="12" height="12" fill="#ff1ec6"/><rect x="1566" y="333" width="12" height="12" fill="#ff12ba"/><rect x="1578" y="333" width="12" height="12" fill="#ff12a2"/><rect x="1590" y="333" width="24" height="12" fill="#ff0696"/><rect x="1614" y="333" width="12" height="12" fill="#ff068a"/><rect x="1626" y="333" width="12" height="12" fill="#96064e"/><rect x="1638" y="333" width="36" height="12" fill="#960642"/><rect x="1674" y="333" width="60" height="12" fill="#960636"/><rect x="1734" y="333" width="84" height="12" fill="#96062a"/><rect x="1818" y="333" width="96" height="12" fill="#96061e"/><rect x="1230" y="345" width="12" height="12" fill="#066696"/><rect x="1242" y="345" width="60" height="12" fill="#065a96"/><rect x="1302" y="345" width="48" height="12" fill="#064e96"/><rect x="1350" y="345" width="48" height="12" fill="#064296"/><rect x="1398" y="345" width="12" height="12" fill="#0666ff"/><rect x="1410" y="345" width="12" height="12" fill="#1e66ff"/><rect x="1422" y="345" width="12" height="12" fill="#365aff"/><rect x="1434" y="345" width="12" height="12" fill="#4e5aff"/><rect x="1446" y="345" width="12" height="12" fill="#5a4eff"/><rect x="1458" y="345" width="12" height="12" fill="#724eff"/><rect x="1470" y="345" width="12" height="12" fill="#8a42ff"/><rect x="1482" y="345" width="12" height="12" fill="#a242ff"/><rect x="1494" y="345" width="12" height="12" fill="#ba36ff"/><rect x="1506" y="345" width="12" height="12" fill="#d236ff"/><rect x="1518" y="345" width="12" height="12" fill="#ea2aff"/><rect x="1530" y="345" width="12" height="12" fill="#ff2aff"/><rect x="1542" y="345" width="12" height="12" fill="#ff1eea"/><rect x="1554" y="345" width="12" height="12" fill="#ff12d2"/><rect x="1566" y="345" width="12" height="12" fill="#ff12c6"/><rect x="1578" y="345" width="12" height="12" fill="#ff06ba"/><rect x="1590" y="345" width="12" height="12" fill="#ff06ae"/><rect x="1602" y="345" width="12" height="12" fill="#ff06a2"/><rect x="1614" y="345" width="12" height="12" fill="#96065a"/><rect x="1626" y="345" width="36" height="12" fill="#96064e"/><rect x="1662" y="345" width="36" height="12" fill="#960642"/><rect x="1698" y="345" width="72" height="12" fill="#960636"/><rect x="1770" y="345" width="84" height="12" fill="#96062a"/><rect x="1854" y="345" width="60" height="12" fill="#96061e"/><rect x="1230" y="357" width="24" height="12" fill="#065a96"/><rect x="1254" y="357" width="60" height="12" fill="#064e96"/><rect x="1314" y="357" width="60" height="12" fill="#064296"/><rect x="1374" y="357" width="24" height="12" fill="#063696"/><rect x="1398" y="357" width="12" height="12" fill="#065aff"/><rect x="1410" y="357" width="12" height="12" fill="#1e5aff"/><rect x="1422" y="357" width="12" height="12" fill="#2a4eff"/><rect x="1434" y="357" width="12" height="12" fill="#424eff"/><rect x="1446" y="357" width="12" height="12" fill="#5a42ff"/><rect x="1458" y="357" width="12" height="12" fill="#6642ff"/><rect x="1470" y="357" width="12" height="12" fill="#7e36ff"/><rect x="1482" y="357" width="12" height="12" fill="#9636ff"/><rect x="1494" y="357" width="12" height="12" fill="#a22aff"/><rect x="1506" y="357" width="12" height="12" fill="#ba2aff"/><rect x="1518" y="357" width="12" height="12" fill="#d22aff"/><rect x="1530" y="357" width="12" height="12" fill="#ea1eff"/><rect x="1542" y="357" width="12" height="12" fill="#ff1eff"/><rect x="1554" y="357" width="12" height="12" fill="#ff12ea"/><rect x="1566" y="357" width="12" height="12" fill="#ff06de"/><rect x="1578" y="357" width="12" height="12" fill="#ff06c6"/><rect x="1590" y="357" width="12" height="12" fill="#ff06ba"/><rect x="1602" y="357" width="12" height="12" fill="#960666"/><rect x="1614" y="357" width="36" height="12" fill="#96065a"/><rect x="1650" y="357" width="36" height="12" fill="#96064e"/><rect x="1686" y="357" width="48" height="12" fill="#960642"/><rect x="1734" y="357" width="60" height="12" fill="#960636"/><rect x="1794" y="357" width="96" height="12" fill="#96062a"/><rect x="1890" y="357" width="24" height="12" fill="#96061e"/><rect x="1230" y="369" width="48" height="12" fill="#064e96"/><rect x="1278" y="369" width="60" height="12" fill="#064296"/><rect x="1338" y="369" width="60" height="12" fill="#063696"/><rect x="1398" y="369" width="12" height="12" fill="#064eff"/><rect x="1410" y="369" width="12" height="12" fill="#124eff"/><rect x="1422" y="369" width="12" height="12" fill="#2a42ff"/><rect x="1434" y="369" width="12" height="12" fill="#3642ff"/><rect x="1446" y="369" width="12" height="12" fill="#4e36ff"/><rect x="1458" y="369" width="12" height="12" fill="#5a36ff"/><rect x="1470" y="369" width="12" height="12" fill="#7236ff"/><rect x="1482" y="369" width="12" height="12" fill="#8a2aff"/><rect x="1494" y="369" width="12" height="12" fill="#962aff"/><rect x="1506" y="369" width="12" height="12" fill="#ae1eff"/><rect x="1518" y="369" width="12" height="12" fill="#c61eff"/><rect x="1530" y="369" width="12" height="12" fill="#d212ff"/><rect x="1542" y="369" width="12" height="12" fill="#ea12ff"/><rect x="1554" y="369" width="12" height="12" fill="#ff12ff"/><rect x="1566" y="369" width="12" height="12" fill="#ff06ea"/><rect x="1578" y="369" width="12" height="12" fill="#ff06de"/><rect x="1590" y="369" width="24" height="12" fill="#960672"/><rect x="1614" y="369" width="24" height="12" fill="#960666"/><rect x="1638" y="369" width="24" height="12" fill="#96065a"/><rect x="1662" y="369" width="36" height="12" fill="#96064e"/><rect x="1698" y="369" width="60" height="12" fill="#960642"/><rect x="1758" y="369" width="60" height="12" fill="#960636"/><rect x="1818" y="369" width="96" height="12" fill="#96062a"/><rect x="1230" y="381" width="12" height="12" fill="#064e96"/><rect x="1242" y="381" width="60" height="12" fill="#064296"/><rect x="1302" y="381" width="60" height="12" fill="#063696"/><rect x="1362" y="381" width="36" height="12" fill="#062a96"/><rect x="1398" y="381" width="12" height="12" fill="#0642ff"/><rect x="1410" y="381" width="12" height="12" fill="#1242ff"/><rect x="1422" y="381" width="12" height="12" fill="#1e36ff"/><rect x="1434" y="381" width="12" height="12" fill="#3636ff"/><rect x="1446" y="381" width="12" height="12" fill="#4236ff"/><rect x="1458" y="381" width="12" height="12" fill="#5a2aff"/><rect x="1470" y="381" width="12" height="12" fill="#662aff"/><rect x="1482" y="381" width="12" height="12" fill="#7e2aff"/><rect x="1494" y="381" width="12" height="12" fill="#8a1eff"/><rect x="1506" y="381" width="12" height="12" fill="#a21eff"/><rect x="1518" y="381" width="12" height="12" fill="#ae12ff"/><rect x="1530" y="381" width="12" height="12" fill="#c612ff"/><rect x="1542" y="381" width="12" height="12" fill="#d212ff"/><rect x="1554" y="381" width="12" height="12" fill="#ea06ff"/><rect x="1566" y="381" width="12" height="12" fill="#ff06ff"/><rect x="1578" y="381" width="12" height="12" fill="#96068a"/><rect x="1590" y="381" width="24" height="12" fill="#96067e"/><rect x="1614" y="381" width="12" height="12" fill="#960672"/><rect x="1626" y="381" width="24" height="12" fill="#960666"/><rect x="1650" y="381" width="36" height="12" fill="#96065a"/><rect x="1686" y="381" width="36" height="12" fill="#96064e"/><rect x="1722" y="381" width="60" height="12" fill="#960642"/><rect x="1782" y="381" width="72" height="12" fill="#960636"/><rect x="1854" y="381" width="60" height="12" fill="#96062a"/><rect x="1230" y="393" width="48" height="12" fill="#064296"/><rect x="1278" y="393" width="60" height="12" fill="#063696"/><rect x="1338" y="393" width="60" height="12" fill="#062a96"/><rect x="1398" y="393" width="12" height="12" fill="#061e96"/><rect x="1410" y="393" width="12" height="12" fill="#1236ff"/><rect x="1422" y="393" width="12" height="12" fill="#1e36ff"/><rect x="1434" y="393" width="12" height="12" fill="#2a2aff"/><rect x="1446" y="393" width="12" height="12" fill="#422aff"/><rect x="1458" y="393" width="12" height="12" fill="#4e2aff"/><rect x="1470" y="393" width="12" height="12" fill="#5a1eff"/><rect x="1482" y="393" width="12" height="12" fill="#721eff"/><rect x="1494" y="393" width="12" height="12" fill="#7e1eff"/><rect x="1506" y="393" width="12" height="12" fill="#9612ff"/><rect x="1518" y="393" width="12" height="12" fill="#a212ff"/><rect x="1530" y="393" width="12" height="12" fill="#ba06ff"/><rect x="1542" y="393" width="12" height="12" fill="#c606ff"/><rect x="1554" y="393" width="12" height="12" fill="#de06ff"/><rect x="1566" y="393" width="12" height="12" fill="#8a0696"/><rect x="1578" y="393" width="12" height="12" fill="#960696"/><rect x="1590" y="393" width="12" height="12" fill="#96068a"/><rect x="1602" y="393" width="24" height="12" fill="#96067e"/><rect x="1626" y="393" width="12" height="12" fill="#960672"/><rect x="1638" y="393" width="36" height="12" fill="#960666"/><rect x="1674" y="393" width="24" height="12" fill="#96065a"/><rect x="1698" y="393" width="48" height="12" fill="#96064e"/><rect x="1746" y="393" width="60" height="12" fill="#960642"/><rect x="1806" y="393" width="72" height="12" fill="#960636"/><rect x="1878" y="393" width="36" height="12" fill="#96062a"/><rect x="1230" y="405" width="12" height="12" fill="#064296"/><rect x="1242" y="405" width="72" height="12" fill="#063696"/><rect x="1314" y="405" width="60" height="12" fill="#062a96"/><rect x="1374" y="405" width="36" height="12" fill="#061e96"/><rect x="1410" y="405" width="12" height="12" fill="#0636ff"/><rect x="1422" y="405" width="12" height="12" fill="#1e2aff"/><rect x="1434" y="405" width="12" height="12" fill="#2a2aff"/><rect x="1446" y="405" width="12" height="12" fill="#362aff"/><rect x="1458" y="405" width="12" height="12" fill="#421eff"/><rect x="1470" y="405" width="12" height="12" fill="#5a1eff"/><rect x="1482" y="405" width="12" height="12" fill="#6612ff"/><rect x="1494" y="405" width="12" height="12" fill="#7212ff"/><rect x="1506" y="405" width="12" height="12" fill="#8a12ff"/><rect x="1518" y="405" width="12" height="12" fill="#9606ff"/><rect x="1530" y="405" width="12" height="12" fill="#ae06ff"/><rect x="1542" y="405" width="12" height="12" fill="#ba06ff"/><rect x="1554" y="405" width="12" height="12" fill="#720696"/><rect x="1566" y="405" width="12" height="12" fill="#7e0696"/><rect x="1578" y="405" width="12" height="12" fill="#8a0696"/><rect x="1590" y="405" width="12" height="12" fill="#960696"/><rect x="1602" y="405" width="12" height="12" fill="#96068a"/><rect x="1614" y="405" width="24" height="12" fill="#96067e"/><rect x="1638" y="405" width="24" height="12" fill="#960672"/><rect x="1662" y="405" width="24" height="12" fill="#960666"/><rect x="1686" y="405" width="36" height="12" fill="#96065a"/><rect x="1722" y="405" width="48" height="12" fill="#96064e"/><rect x="1770" y="405" width="60" height="12" fill="#960642"/><rect x="1830" y="405" width="72" height="12" fill="#960636"/><rect x="1902" y="405" width="12" height="12" fill="#96062a"/><rect x="1230" y="417" width="60" height="12" fill="#063696"/><rect x="1290" y="417" width="60" height="12" fill="#062a96"/><rect x="1350" y="417" width="60" height="12" fill="#061e96"/><rect x="1410" y="417" width="12" height="12" fill="#062aff"/><rect x="1422" y="417" width="12" height="12" fill="#122aff"/><rect x="1434" y="417" width="12" height="12" fill="#2a1eff"/><rect x="1446" y="417" width="12" height="12" fill="#361eff"/><rect x="1458" y="417" width="12" height="12" fill="#421eff"/><rect x="1470" y="417" width="12" height="12" fill="#4e12ff"/><rect x="1482" y="417" width="12" height="12" fill="#5a12ff"/><rect x="1494" y="417" width="12" height="12" fill="#7212ff"/><rect x="1506" y="417" width="12" height="12" fill="#7e06ff"/><rect x="1518" y="417" width="12" height="12" fill="#8a06ff"/><rect x="1530" y="417" width="12" height="12" fill="#a206ff"/><rect x="1542" y="417" width="12" height="12" fill="#660696"/><rect x="1554" y="417" width="24" height="12" fill="#720696"/><rect x="1578" y="417" width="12" height="12" fill="#7e0696"/><rect x="1590" y="417" width="12" height="12" fill="#8a0696"/><rect x="1602" y="417" width="12" height="12" fill="#960696"/><rect x="1614" y="417" width="12" height="12" fill="#96068a"/><rect x="1626" y="417" width="24" height="12" fill="#96067e"/><rect x="1650" y="417" width="24" height="12" fill="#960672"/><rect x="1674" y="417" width="24" height="12" fill="#960666"/><rect x="1698" y="417" width="48" height="12" fill="#96065a"/><rect x="1746" y="417" width="36" height="12" fill="#96064e"/><rect x="1782" y="417" width="72" height="12" fill="#960642"/><rect x="1854" y="417" width="60" height="12" fill="#960636"/><rect x="1230" y="429" width="24" height="12" fill="#063696"/><rect x="1254" y="429" width="72" height="12" fill="#062a96"/><rect x="1326" y="429" width="72" height="12" fill="#061e96"/><rect x="1398" y="429" width="12" height="12" fill="#061296"/><rect x="1410" y="429" width="12" height="12" fill="#062aff"/><rect x="1422" y="429" width="12" height="12" fill="#121eff"/><rect x="1434" y="429" width="12" height="12" fill="#1e1eff"/><rect x="1446" y="429" width="12" height="12" fill="#2a1eff"/><rect x="1458" y="429" width="12" height="12" fill="#4212ff"/><rect x="1470" y="429" width="12" height="12" fill="#4e12ff"/><rect x="1482" y="429" width="12" height="12" fill="#5a12ff"/><rect x="1494" y="429" width="12" height="12" fill="#6606ff"/><rect x="1506" y="429" width="12" height="12" fill="#7206ff"/><rect x="1518" y="429" width="12" height="12" fill="#7e06ff"/><rect x="1530" y="429" width="24" height="12" fill="#5a0696"/><rect x="1554" y="429" width="12" height="12" fill="#660696"/><rect x="1566" y="429" width="12" height="12" fill="#720696"/><rect x="1578" y="429" width="24" height="12" fill="#7e0696"/><rect x="1602" y="429" width="12" height="12" fill="#8a0696"/><rect x="1614" y="429" width="12" height="12" fill="#960696"/><rect x="1626" y="429" width="12" height="12" fill="#96068a"/><rect x="1638" y="429" width="24" height="12" fill="#96067e"/><rect x="1662" y="429" width="24" height="12" fill="#960672"/><rect x="1686" y="429" width="36" height="12" fill="#960666"/><rect x="1722" y="429" width="36" height="12" fill="#96065a"/><rect x="1758" y="429" width="48" height="12" fill="#96064e"/><rect x="1806" y="429" width="72" height="12" fill="#960642"/><rect x="1878" y="429" width="36" height="12" fill="#960636"/><rect x="1230" y="441" width="72" height="12" fill="#062a96"/><rect x="1302" y="441" width="84" height="12" fill="#061e96"/><rect x="1386" y="441" width="24" height="12" fill="#061296"/><rect x="1410" y="441" width="12" height="12" fill="#061eff"/><rect x="1422" y="441" width="12" height="12" fill="#121eff"/><rect x="1434" y="441" width="12" height="12" fill="#1e1eff"/><rect x="1446" y="441" width="12" height="12" fill="#2a12ff"/><rect x="1458" y="441" width="12" height="12" fill="#3612ff"/><rect x="1470" y="441" width="12" height="12" fill="#4212ff"/><rect x="1482" y="441" width="12" height="12" fill="#4e06ff"/><rect x="1494" y="441" width="12" height="12" fill="#5a06ff"/><rect x="1506" y="441" width="12" height="12" fill="#7206ff"/><rect x="1518" y="441" width="12" height="12" fill="#420696"/><rect x="1530" y="441" width="12" height="12" fill="#4e0696"/><rect x="1542" y="441" width="12" height="12" fill="#5a0696"/><rect x="1554" y="441" width="24" height="12" fill="#660696"/><rect x="1578" y="441" width="12" height="12" fill="#720696"/><rect x="1590" y="441" width="24" height="12" fill="#7e0696"/><rect x="1614" y="441" width="12" height="12" fill="#8a0696"/><rect x="1626" y="441" width="12" height="12" fill="#960696"/><rect x="1638" y="441" width="24" height="12" fill="#96068a"/><rect x="1662" y="441" width="12" height="12" fill="#96067e"/><rect x="1674" y="441" width="36" height="12" fill="#960672"/><rect x="1710" y="441" width="24" height="12" fill="#960666"/><rect x="1734" y="441" width="48" height="12" fill="#96065a"/><rect x="1782" y="441" width="48" height="12" fill="#96064e"/><rect x="1830" y="441" width="72" height="12" fill="#960642"/><rect x="1902" y="441" width="12" height="12" fill="#960636"/><rect x="1230" y="453" width="60" height="12" fill="#062a96"/><rect x="1290" y="453" width="72" height="12" fill="#061e96"/><rect x="1362" y="453" width="48" height="12" fill="#061296"/><rect x="1410" y="453" width="12" height="12" fill="#061eff"/><rect x="1422" y="453" width="12" height="12" fill="#1212ff"/><rect x="1434" y="453" width="12" height="12" fill="#1e12ff"/><rect x="1446" y="453" width="12" height="12" fill="#2a12ff"/><rect x="1458" y="453" width="12" height="12" fill="#3612ff"/><rect x="1470" y="453" width="12" height="12" fill="#4206ff"/><rect x="1482" y="453" width="12" height="12" fill="#4e06ff"/><rect x="1494" y="453" width="12" height="12" fill="#5a06ff"/><rect x="1506" y="453" width="12" height="12" fill="#360696"/><rect x="1518" y="453" width="12" height="12" fill="#420696"/><rect x="1530" y="453" width="24" height="12" fill="#4e0696"/><rect x="1554" y="453" width="12" height="12" fill="#5a0696"/><rect x="1566" y="453" width="24" height="12" fill="#660696"/><rect x="1590" y="453" width="12" height="12" fill="#720696"/><rect x="1602" y="453" width="24" height="12" fill="#7e0696"/><rect x="1626" y="453" width="12" height="12" fill="#8a0696"/><rect x="1638" y="453" width="12" height="12" fill="#960696"/><rect x="1650" y="453" width="24" height="12" fill="#96068a"/><rect x="1674" y="453" width="24" height="12" fill="#96067e"/><rect x="1698" y="453" width="24" height="12" fill="#960672"/><rect x="1722" y="453" width="36" height="12" fill="#960666"/><rect x="1758" y="453" width="36" height="12" fill="#96065a"/><rect x="1794" y="453" width="60" height="12" fill="#96064e"/><rect x="1854" y="453" width="60" height="12" fill="#960642"/><rect x="1230" y="465" width="36" height="12" fill="#062a96"/><rect x="1266" y="465" width="72" height="12" fill="#061e96"/><rect x="1338" y="465" width="84" height="12" fill="#061296"/><rect x="1422" y="465" width="12" height="12" fill="#0612ff"/><rect x="1434" y="465" width="12" height="12" fill="#1212ff"/><rect x="1446" y="465" width="12" height="12" fill="#1e06ff"/><rect x="1458" y="465" width="12" height="12" fill="#2a06ff"/><rect x="1470" y="465" width="12" height="12" fill="#3606ff"/><rect x="1482" y="465" width="12" height="12" fill="#4206ff"/><rect x="1494" y="465" width="24" height="12" fill="#360696"/><rect x="1518" y="465" width="24" height="12" fill="#420696"/><rect x="1542" y="465" width="12" height="12" fill="#4e0696"/><rect x="1554" y="465" width="24" height="12" fill="#5a0696"/><rect x="1578" y="465" width="24" height="12" fill="#660696"/><rect x="1602" y="465" width="12" height="12" fill="#720696"/><rect x="1614" y="465" width="24" height="12" fill="#7e0696"/><rect x="1638" y="465" width="12" height="12" fill="#8a0696"/><rect x="1650" y="465" width="12" height="12" fill="#960696"/><rect x="1662" y="465" width="24" height="12" fill="#96068a"/><rect x="1686" y="465" width="24" height="12" fill="#96067e"/><rect x="1710" y="465" width="24" height="12" fill="#960672"/><rect x="1734" y="465" width="36" height="12" fill="#960666"/><rect x="1770" y="465" width="48" height="12" fill="#96065a"/><rect x="1818" y="465" width="48" height="12" fill="#96064e"/><rect x="1866" y="465" width="48" height="12" fill="#960642"/><rect x="1230" y="477" width="12" height="12" fill="#062a96"/><rect x="1242" y="477" width="84" height="12" fill="#061e96"/><rect x="1326" y="477" width="84" height="12" fill="#061296"/><rect x="1410" y="477" width="12" height="12" fill="#060696"/><rect x="1422" y="477" width="12" height="12" fill="#0612ff"/><rect x="1434" y="477" width="12" height="12" fill="#1206ff"/><rect x="1446" y="477" width="12" height="12" fill="#1e06ff"/><rect x="1458" y="477" width="12" height="12" fill="#2a06ff"/><rect x="1470" y="477" width="12" height="12" fill="#3606ff"/><rect x="1482" y="477" width="24" height="12" fill="#2a0696"/><rect x="1506" y="477" width="24" height="12" fill="#360696"/><rect x="1530" y="477" width="12" height="12" fill="#420696"/><rect x="1542" y="477" width="24" height="12" fill="#4e0696"/><rect x="1566" y="477" width="24" height="12" fill="#5a0696"/><rect x="1590" y="477" width="12" height="12" fill="#660696"/><rect x="1602" y="477" width="24" height="12" fill="#720696"/><rect x="1626" y="477" width="24" height="12" fill="#7e0696"/><rect x="1650" y="477" width="12" height="12" fill="#8a0696"/><rect x="1662" y="477" width="12" height="12" fill="#960696"/><rect x="1674" y="477" width="24" height="12" fill="#96068a"/><rect x="1698" y="477" width="24" height="12" fill="#96067e"/><rect x="1722" y="477" width="24" height="12" fill="#960672"/><rect x="1746" y="477" width="48" height="12" fill="#960666"/><rect x="1794" y="477" width="36" height="12" fill="#96065a"/><rect x="1830" y="477" width="60" height="12" fill="#96064e"/><rect x="1890" y="477" width="24" height="12" fill="#960642"/><rect x="1230" y="489" width="72" height="12" fill="#061e96"/><rect x="1302" y="489" width="84" height="12" fill="#061296"/><rect x="1386" y="489" width="36" height="12" fill="#060696"/><rect x="1422" y="489" width="12" height="12" fill="#0606ff"/><rect x="1434" y="489" width="12" height="12" fill="#1206ff"/><rect x="1446" y="489" width="12" height="12" fill="#1e06ff"/><rect x="1458" y="489" width="12" height="12" fill="#2a06ff"/><rect x="1470" y="489" width="24" height="12" fill="#1e0696"/><rect x="1494" y="489" width="12" height="12" fill="#2a0696"/><rect x="1506" y="489" width="24" height="12" fill="#360696"/><rect x="1530" y="489" width="24" height="12" fill="#420696"/><rect x="1554" y="489" width="24" height="12" fill="#4e0696"/><rect x="1578" y="489" width="12" height="12" fill="#5a0696"/><rect x="1590" y="489" width="24" height="12" fill="#660696"/><rect x="1614" y="489" width="24" height="12" fill="#720696"/><rect x="1638" y="489" width="12" height="12" fill="#7e0696"/><rect x="1650" y="489" width="24" height="12" fill="#8a0696"/><rect x="1674" y="489" width="12" height="12" fill="#960696"/><rect x="1686" y="489" width="24" height="12" fill="#96068a"/><rect x="1710" y="489" width="24" height="12" fill="#96067e"/><rect x="1734" y="489" width="36" height="12" fill="#960672"/><rect x="1770" y="489" width="36" height="12" fill="#960666"/><rect x="1806" y="489" width="48" height="12" fill="#96065a"/><rect x="1854" y="489" width="60" height="12" fill="#96064e"/><rect x="1230" y="501" width="60" height="12" fill="#061e96"/><rect x="1290" y="501" width="84" height="12" fill="#061296"/><rect x="1374" y="501" width="48" height="12" fill="#060696"/><rect x="1422" y="501" width="12" height="12" fill="#0606ff"/><rect x="1434" y="501" width="12" height="12" fill="#1206ff"/><rect x="1446" y="501" width="12" height="12" fill="#1e06ff"/><rect x="1458" y="501" width="12" height="12" fill="#120696"/><rect x="1470" y="501" width="24" height="12" fill="#1e0696"/><rect x="1494" y="501" width="24" height="12" fill="#2a0696"/><rect x="1518" y="501" width="24" height="12" fill="#360696"/><rect x="1542" y="501" width="24" height="12" fill="#420696"/><rect x="1566" y="501" width="12" height="12" fill="#4e0696"/><rect x="1578" y="501" width="24" height="12" fill="#5a0696"/><rect x="1602" y="501" width="24" height="12" fill="#660696"/><rect x="1626" y="501" width="24" height="12" fill="#720696"/><rect x="1650" y="501" width="12" height="12" fill="#7e0696"/><rect x="1662" y="501" width="24" height="12" fill="#8a0696"/><rect x="1686" y="501" width="12" height="12" fill="#960696"/><rect x="1698" y="501" width="24" height="12" fill="#96068a"/><rect x="1722" y="501" width="24" height="12" fill="#96067e"/><rect x="1746" y="501" width="36" height="12" fill="#960672"/><rect x="1782" y="501" width="36" height="12" fill="#960666"/><rect x="1818" y="501" width="48" height="12" fill="#96065a"/><rect x="1866" y="501" width="48" height="12" fill="#96064e"/><rect x="1230" y="513" width="36" height="12" fill="#061e96"/><rect x="1266" y="513" width="96" height="12" fill="#061296"/><rect x="1362" y="513" width="60" height="12" fill="#060696"/><rect x="1422" y="513" width="12" height="12" fill="#0606ff"/><rect x="1434" y="513" width="12" height="12" fill="#1206ff"/><rect x="1446" y="513" width="24" height="12" fill="#120696"/><rect x="1470" y="513" width="24" height="12" fill="#1e0696"/><rect x="1494" y="513" width="24" height="12" fill="#2a0696"/><rect x="1518" y="513" width="24" height="12" fill="#360696"/><rect x="1542" y="513" width="24" height="12" fill="#420696"/><rect x="1566" y="513" width="24" height="12" fill="#4e0696"/><rect x="1590" y="513" width="24" height="12" fill="#5a0696"/><rect x="1614" y="513" width="24" height="12" fill="#660696"/><rect x="1638" y="513" width="12" height="12" fill="#720696"/><rect x="1650" y="513" width="24" height="12" fill="#7e0696"/><rect x="1674" y="513" width="24" height="12" fill="#8a0696"/><rect x="1698" y="513" width="12" height="12" fill="#960696"/><rect x="1710" y="513" width="24" height="12" fill="#96068a"/><rect x="1734" y="513" width="36" height="12" fill="#96067e"/><rect x="1770" y="513" width="24" height="12" fill="#960672"/><rect x="1794" y="513" width="48" height="12" fill="#960666"/><rect x="1842" y="513" width="48" height="12" fill="#96065a"/><rect x="1890" y="513" width="24" height="12" fill="#96064e"/><rect x="1230" y="525" width="24" height="12" fill="#061e96"/><rect x="1254" y="525" width="84" height="12" fill="#061296"/><rect x="1338" y="525" width="84" height="12" fill="#060696"/><rect x="1422" y="525" width="12" height="12" fill="#0606ff"/><rect x="1434" y="525" width="24" height="12" fill="#060696"/><rect x="1458" y="525" width="24" height="12" fill="#120696"/><rect x="1482" y="525" width="24" height="12" fill="#1e0696"/><rect x="1506" y="525" width="24" height="12" fill="#2a0696"/><rect x="1530" y="525" width="24" height="12" fill="#360696"/><rect x="1554" y="525" width="24" height="12" fill="#420696"/><rect x="1578" y="525" width="24" height="12" fill="#4e0696"/><rect x="1602" y="525" width="24" height="12" fill="#5a0696"/><rect x="1626" y="525" width="12" height="12" fill="#660696"/><rect x="1638" y="525" width="24" height="12" fill="#720696"/><rect x="1662" y="525" width="24" height="12" fill="#7e0696"/><rect x="1686" y="525" width="24" height="12" fill="#8a0696"/><rect x="1710" y="525" width="12" height="12" fill="#960696"/><rect x="1722" y="525" width="24" height="12" fill="#96068a"/><rect x="1746" y="525" width="36" height="12" fill="#96067e"/><rect x="1782" y="525" width="36" height="12" fill="#960672"/><rect x="1818" y="525" width="36" height="12" fill="#960666"/><rect x="1854" y="525" width="60" height="12" fill="#96065a"/><rect x="1230" y="537" width="96" height="12" fill="#061296"/><rect x="1326" y="537" width="132" height="12" fill="#060696"/><rect x="1458" y="537" width="24" height="12" fill="#120696"/><rect x="1482" y="537" width="24" height="12" fill="#1e0696"/><rect x="1506" y="537" width="24" height="12" fill="#2a0696"/><rect x="1530" y="537" width="24" height="12" fill="#360696"/><rect x="1554" y="537" width="24" height="12" fill="#420696"/><rect x="1578" y="537" width="24" height="12" fill="#4e0696"/><rect x="1602" y="537" width="24" height="12" fill="#5a0696"/><rect x="1626" y="537" width="24" height="12" fill="#660696"/><rect x="1650" y="537" width="24" height="12" fill="#720696"/><rect x="1674" y="537" width="24" height="12" fill="#7e0696"/><rect x="1698" y="537" width="24" height="12" fill="#8a0696"/><rect x="1722" y="537" width="12" height="12" fill="#960696"/><rect x="1734" y="537" width="24" height="12" fill="#96068a"/><rect x="1758" y="537" width="36" height="12" fill="#96067e"/><rect x="1794" y="537" width="36" height="12" fill="#960672"/><rect x="1830" y="537" width="48" height="12" fill="#960666"/><rect x="1878" y="537" width="36" height="12" fill="#96065a"/><rect x="1230" y="549" width="84" height="12" fill="#061296"/><rect x="1314" y="549" width="144" height="12" fill="#060696"/><rect x="1458" y="549" width="24" height="12" fill="#120696"/><rect x="1482" y="549" width="24" height="12" fill="#1e0696"/><rect x="1506" y="549" width="36" height="12" fill="#2a0696"/><rect x="1542" y="549" width="24" height="12" fill="#360696"/><rect x="1566" y="549" width="24" height="12" fill="#420696"/><rect x="1590" y="549" width="24" height="12" fill="#4e0696"/><rect x="1614" y="549" width="24" height="12" fill="#5a0696"/><rect x="1638" y="549" width="24" height="12" fill="#660696"/><rect x="1662" y="549" width="24" height="12" fill="#720696"/><rect x="1686" y="549" width="24" height="12" fill="#7e0696"/><rect x="1710" y="549" width="24" height="12" fill="#8a0696"/><rect x="1734" y="549" width="12" height="12" fill="#960696"/><rect x="1746" y="549" width="24" height="12" fill="#96068a"/><rect x="1770" y="549" width="36" height="12" fill="#96067e"/><rect x="1806" y="549" width="36" height="12" fill="#960672"/><rect x="1842" y="549" width="48" height="12" fill="#960666"/><rect x="1890" y="549" width="24" height="12" fill="#96065a"/><rect x="1230" y="561" width="72" height="12" fill="#061296"/><rect x="1302" y="561" width="156" height="12" fill="#060696"/><rect x="1458" y="561" width="36" height="12" fill="#120696"/><rect x="1494" y="561" width="24" height="12" fill="#1e0696"/><rect x="1518" y="561" width="24" height="12" fill="#2a0696"/><rect x="1542" y="561" width="24" height="12" fill="#360696"/><rect x="1566" y="561" width="24" height="12" fill="#420696"/><rect x="1590" y="561" width="36" height="12" fill="#4e0696"/><rect x="1626" y="561" width="24" height="12" fill="#5a0696"/><rect x="1650" y="561" width="24" height="12" fill="#660696"/><rect x="1674" y="561" width="24" height="12" fill="#720696"/><rect x="1698" y="561" width="24" height="12" fill="#7e0696"/><rect x="1722" y="561" width="24" height="12" fill="#8a0696"/><rect x="1746" y="561" width="12" height="12" fill="#960696"/><rect x="1758" y="561" width="36" height="12" fill="#96068a"/><rect x="1794" y="561" width="24" height="12" fill="#96067e"/><rect x="1818" y="561" width="36" height="12" fill="#960672"/><rect x="1854" y="561" width="48" height="12" fill="#960666"/><rect x="1902" y="561" width="12" height="12" fill="#96065a"/><rect x="1230" y="573" width="48" height="12" fill="#061296"/><rect x="1278" y="573" width="180" height="12" fill="#060696"/><rect x="1458" y="573" width="36" height="12" fill="#120696"/><rect x="1494" y="573" width="24" height="12" fill="#1e0696"/><rect x="1518" y="573" width="36" height="12" fill="#2a0696"/><rect x="1554" y="573" width="24" height="12" fill="#360696"/><rect x="1578" y="573" width="24" height="12" fill="#420696"/><rect x="1602" y="573" width="24" height="12" fill="#4e0696"/><rect x="1626" y="573" width="24" height="12" fill="#5a0696"/><rect x="1650" y="573" width="36" height="12" fill="#660696"/><rect x="1686" y="573" width="24" height="12" fill="#720696"/><rect x="1710" y="573" width="24" height="12" fill="#7e0696"/><rect x="1734" y="573" width="24" height="12" fill="#8a0696"/><rect x="1758" y="573" width="12" height="12" fill="#960696"/><rect x="1770" y="573" width="36" height="12" fill="#96068a"/><rect x="1806" y="573" width="24" height="12" fill="#96067e"/><rect x="1830" y="573" width="48" height="12" fill="#960672"/><rect x="1878" y="573" width="36" height="12" fill="#960666"/><rect x="1230" y="585" width="36" height="12" fill="#061296"/><rect x="1266" y="585" width="204" height="12" fill="#060696"/><rect x="1470" y="585" width="24" height="12" fill="#120696"/><rect x="1494" y="585" width="36" height="12" fill="#1e0696"/><rect x="1530" y="585" width="24" height="12" fill="#2a0696"/><rect x="1554" y="585" width="24" height="12" fill="#360696"/><rect x="1578" y="585" width="36" height="12" fill="#420696"/><rect x="1614" y="585" width="24" height="12" fill="#4e0696"/><rect x="1638" y="585" width="24" height="12" fill="#5a0696"/><rect x="1662" y="585" width="24" height="12" fill="#660696"/><rect x="1686" y="585" width="36" height="12" fill="#720696"/><rect x="1722" y="585" width="24" height="12" fill="#7e0696"/><rect x="1746" y="585" width="24" height="12" fill="#8a0696"/><rect x="1770" y="585" width="12" height="12" fill="#960696"/><rect x="1782" y="585" width="36" height="12" fill="#96068a"/><rect x="1818" y="585" width="36" height="12" fill="#96067e"/><rect x="1854" y="585" width="36" height="12" fill="#960672"/><rect x="1890" y="585" width="24" height="12" fill="#960666"/><rect x="1230" y="597" width="24" height="12" fill="#061296"/><rect x="1254" y="597" width="216" height="12" fill="#060696"/><rect x="1470" y="597" width="24" height="12" fill="#120696"/><rect x="1494" y="597" width="36" height="12" fill="#1e0696"/><rect x="1530" y="597" width="24" height="12" fill="#2a0696"/><rect x="1554" y="597" width="36" height="12" fill="#360696"/><rect x="1590" y="597" width="24" height="12" fill="#420696"/><rect x="1614" y="597" width="36" height="12" fill="#4e0696"/><rect x="1650" y="597" width="24" height="12" fill="#5a0696"/><rect x="1674" y="597" width="24" height="12" fill="#660696"/><rect x="1698" y="597" width="24" height="12" fill="#720696"/><rect x="1722" y="597" width="36" height="12" fill="#7e0696"/><rect x="1758" y="597" width="24" height="12" fill="#8a0696"/><rect x="1782" y="597" width="12" height="12" fill="#960696"/><rect x="1794" y="597" width="36" height="12" fill="#96068a"/><rect x="1830" y="597" width="36" height="12" fill="#96067e"/><rect x="1866" y="597" width="36" height="12" fill="#960672"/><rect x="1902" y="597" width="12" height="12" fill="#960666"/><rect x="1230" y="609" width="12" height="12" fill="#061296"/><rect x="1242" y="609" width="228" height="12" fill="#060696"/><rect x="1470" y="609" width="36" height="12" fill="#120696"/><rect x="1506" y="609" width="24" height="12" fill="#1e0696"/><rect x="1530" y="609" width="36" height="12" fill="#2a0696"/><rect x="1566" y="609" width="24" height="12" fill="#360696"/><rect x="1590" y="609" width="36" height="12" fill="#420696"/><rect x="1626" y="609" width="24" height="12" fill="#4e0696"/><rect x="1650" y="609" width="36" height="12" fill="#5a0696"/><rect x="1686" y="609" width="24" height="12" fill="#660696"/><rect x="1710" y="609" width="24" height="12" fill="#720696"/><rect x="1734" y="609" width="36" height="12" fill="#7e0696"/><rect x="1770" y="609" width="24" height="12" fill="#8a0696"/><rect x="1794" y="609" width="12" height="12" fill="#960696"/><rect x="1806" y="609" width="36" height="12" fill="#96068a"/><rect x="1842" y="609" width="36" height="12" fill="#96067e"/><rect x="1878" y="609" width="36" height="12" fill="#960672"/><rect x="1230" y="621" width="240" height="12" fill="#060696"/><rect x="1470" y="621" width="36" height="12" fill="#120696"/><rect x="1506" y="621" width="36" height="12" fill="#1e0696"/><rect x="1542" y="621" width="24" height="12" fill="#2a0696"/><rect x="1566" y="621" width="36" height="12" fill="#360696"/><rect x="1602" y="621" width="24" height="12" fill="#420696"/><rect x="1626" y="621" width="36" height="12" fill="#4e0696"/><rect x="1662" y="621" width="24" height="12" fill="#5a0696"/><rect x="1686" y="621" width="36" height="12" fill="#660696"/><rect x="1722" y="621" width="24" height="12" fill="#720696"/><rect x="1746" y="621" width="36" height="12" fill="#7e0696"/><rect x="1782" y="621" width="24" height="12" fill="#8a0696"/><rect x="1806" y="621" width="12" height="12" fill="#960696"/><rect x="1818" y="621" width="36" height="12" fill="#96068a"/><rect x="1854" y="621" width="36" height="12" fill="#96067e"/><rect x="1890" y="621" width="24" height="12" fill="#960672"/><rect x="1230" y="633" width="252" height="12" fill="#060696"/><rect x="1482" y="633" width="24" height="12" fill="#120696"/><rect x="1506" y="633" width="36" height="12" fill="#1e0696"/><rect x="1542" y="633" width="36" height="12" fill="#2a0696"/><rect x="1578" y="633" width="24" height="12" fill="#360696"/><rect x="1602" y="633" width="36" height="12" fill="#420696"/><rect x="1638" y="633" width="36" height="12" fill="#4e0696"/><rect x="1674" y="633" width="24" height="12" fill="#5a0696"/><rect x="1698" y="633" width="36" height="12" fill="#660696"/><rect x="1734" y="633" width="24" height="12" fill="#720696"/><rect x="1758" y="633" width="24" height="12" fill="#7e0696"/><rect x="1782" y="633" width="36" height="12" fill="#8a0696"/><rect x="1818" y="633" width="12" height="12" fill="#960696"/><rect x="1830" y="633" width="36" height="12" fill="#96068a"/><rect x="1866" y="633" width="36" height="12" fill="#96067e"/><rect x="1902" y="633" width="12" height="12" fill="#960672"/><rect x="1230" y="645" width="252" height="12" fill="#060696"/><rect x="1482" y="645" width="36" height="12" fill="#120696"/><rect x="1518" y="645" width="24" height="12" fill="#1e0696"/><rect x="1542" y="645" width="36" height="12" fill="#2a0696"/><rect x="1578" y="645" width="36" height="12" fill="#360696"/><rect x="1614" y="645" width="36" height="12" fill="#420696"/><rect x="1650" y="645" width="24" height="12" fill="#4e0696"/><rect x="1674" y="645" width="36" height="12" fill="#5a0696"/><rect x="1710" y="645" width="24" height="12" fill="#660696"/><rect x="1734" y="645" width="36" height="12" fill="#720696"/><rect x="1770" y="645" width="24" height="12" fill="#7e0696"/><rect x="1794" y="645" width="36" height="12" fill="#8a0696"/><rect x="1830" y="645" width="12" height="12" fill="#960696"/><rect x="1842" y="645" width="36" height="12" fill="#96068a"/><rect x="1878" y="645" width="36" height="12" fill="#96067e"/><rect x="1230" y="657" width="252" height="12" fill="#060696"/><rect x="1482" y="657" width="36" height="12" fill="#120696"/><rect x="1518" y="657" width="36" height="12" fill="#1e0696"/><rect x="1554" y="657" width="36" height="12" fill="#2a0696"/><rect x="1590" y="657" width="24" height="12" fill="#360696"/><rect x="1614" y="657" width="36" height="12" fill="#420696"/><rect x="1650" y="657" width="36" height="12" fill="#4e0696"/><rect x="1686" y="657" width="36" height="12" fill="#5a0696"/><rect x="1722" y="657" width="24" height="12" fill="#660696"/><rect x="1746" y="657" width="36" height="12" fill="#720696"/><rect x="1782" y="657" width="24" height="12" fill="#7e0696"/><rect x="1806" y="657" width="36" height="12" fill="#8a0696"/><rect x="1842" y="657" width="12" height="12" fill="#960696"/><rect x="1854" y="657" width="36" height="12" fill="#96068a"/><rect x="1890" y="657" width="24" height="12" fill="#96067e"/><rect x="1230" y="669" width="252" height="12" fill="#060696"/><rect x="1482" y="669" width="36" height="12" fill="#120696"/><rect x="1518" y="669" width="36" height="12" fill="#1e0696"/><rect x="1554" y="669" width="36" height="12" fill="#2a0696"/><rect x="1590" y="669" width="36" height="12" fill="#360696"/><rect x="1626" y="669" width="36" height="12" fill="#420696"/><rect x="1662" y="669" width="36" height="12" fill="#4e0696"/><rect x="1698" y="669" width="24" height="12" fill="#5a0696"/><rect x="1722" y="669" width="36" height="12" fill="#660696"/><rect x="1758" y="669" width="36" height="12" fill="#720696"/><rect x="1794" y="669" width="24" height="12" fill="#7e0696"/><rect x="1818" y="669" width="36" height="12" fill="#8a0696"/><rect x="1854" y="669" width="24" height="12" fill="#960696"/><rect x="1878" y="669" width="24" height="12" fill="#96068a"/><rect x="1902" y="669" width="12" height="12" fill="#96067e"/></g></g></svg>
<canvas id="cie" class="a" style="left:1230px;top:153px" width="678" height="521"></canvas>
<script>(function(){
var c=document.getElementById('cie');if(!c||!c.getContext)return;
var W=c.width,H=c.height,ctx=c.getContext('2d');
var OX=-0.100000,OY=522.200000,SU=1129.000000,SV=869.000000;
var L=[[0.2569, 0.0165], [0.2567, 0.0165], [0.2564, 0.0163], [0.256, 0.0163], [0.2558, 0.0159], [0.2553, 0.0159], [0.2545, 0.0159], [0.2536, 0.016], [0.2522, 0.0169], [0.2496, 0.0191], [0.2461, 0.0226], [0.2411, 0.0278], [0.2348, 0.0349], [0.2266, 0.0437], [0.2161, 0.055], [0.2033, 0.0689], [0.1877, 0.0871], [0.169, 0.1119], [0.1441, 0.151], [0.1147, 0.2044], [0.0828, 0.2708], [0.0701, 0.2993], [0.0579, 0.3282], [0.0521, 0.3427], [0.0467, 0.357], [0.0368, 0.385], [0.0282, 0.4117], [0.0207, 0.4366], [0.0145, 0.4594], [0.0119, 0.4698], [0.0096, 0.4797], [0.006, 0.4975], [0.0035, 0.5131], [0.0019, 0.5265], [0.0014, 0.538], [0.0014, 0.5432], [0.0017, 0.548], [0.0028, 0.5565], [0.0046, 0.5638], [0.0072, 0.5699], [0.0104, 0.5749], [0.0123, 0.577], [0.0142, 0.5788], [0.0185, 0.5816], [0.0231, 0.5837], [0.0281, 0.585], [0.0333, 0.5858], [0.036, 0.5861], [0.0388, 0.5864], [0.0444, 0.5866], [0.0501, 0.5868], [0.0557, 0.5867], [0.0614, 0.5866], [0.0643, 0.5865], [0.0672, 0.5864], [0.0732, 0.5861], [0.0792, 0.5856], [0.0855, 0.5851], [0.0919, 0.5845], [0.0953, 0.5841], [0.0986, 0.5837], [0.1055, 0.5829], [0.1127, 0.5821], [0.1202, 0.5811], [0.1279, 0.5801], [0.1319, 0.5795], [0.136, 0.579], [0.1444, 0.5778], [0.1531, 0.5766], [0.1766, 0.5732], [0.2026, 0.5694], [0.2312, 0.5651], [0.2623, 0.5604], [0.2959, 0.5554], [0.3315, 0.5501], [0.3681, 0.5446], [0.4035, 0.5393], [0.438, 0.5342], [0.4691, 0.5296], [0.4967, 0.5254], [0.5202, 0.5219], [0.5399, 0.519], [0.5565, 0.5165], [0.5709, 0.5144], [0.583, 0.5125], [0.593, 0.511], [0.6005, 0.5099], [0.6064, 0.509], [0.6108, 0.5084], [0.6137, 0.5079], [0.6161, 0.5076], [0.6181, 0.5073], [0.6199, 0.507], [0.6216, 0.5068], [0.6226, 0.5066], [0.6231, 0.5065], [0.6234, 0.5065]];
var P=[[0.4507,0.5229],[0.1250,0.5625],[0.1754,0.1579]];
var K=0.580000,GM=0.000000;
function col(u,v){var d=6*u-16*v+12;var x=9*u/d,y=4*v/d;var X=x/y,Y=1,Z=(1-x-y)/y;
var r=3.2406*X-1.5372*Y-0.4986*Z,g=-0.9689*X+1.8758*Y+0.0415*Z,b=0.0557*X-0.2040*Y+1.0570*Z;
if(r<0)r=0;if(g<0)g=0;if(b<0)b=0;var m=Math.max(r,g,b);r/=m;g/=m;b/=m;
if(GM>0){r=Math.pow(r,1/GM);g=Math.pow(g,1/GM);b=Math.pow(b,1/GM);}return [r,g,b];}
function cross(ax,ay,bx,by,px,py){return (bx-ax)*(py-ay)-(by-ay)*(px-ax);}
function proj(u,v){var best=1e9,bu=u,bv=v;for(var i=0;i<3;i++){var a=P[i],b=P[(i+1)%3];var dx=b[0]-a[0],dy=b[1]-a[1];
var t=((u-a[0])*dx+(v-a[1])*dy)/(dx*dx+dy*dy);if(t<0)t=0;if(t>1)t=1;var qx=a[0]+t*dx,qy=a[1]+t*dy;var dd=(u-qx)*(u-qx)+(v-qy)*(v-qy);
if(dd<best){best=dd;bu=qx;bv=qy;}}return [bu,bv];}
var off=document.createElement('canvas');off.width=W;off.height=H;var oc=off.getContext('2d');var im=oc.createImageData(W,H);var D=im.data;
for(var py=0;py<H;py++){for(var px=0;px<W;px++){var u=(px+0.5-OX)/SU,v=(OY-py-0.5)/SV;
var c1=cross(P[0][0],P[0][1],P[1][0],P[1][1],u,v),c2=cross(P[1][0],P[1][1],P[2][0],P[2][1],u,v),c3=cross(P[2][0],P[2][1],P[0][0],P[0][1],u,v);
var inside=(c1>=0&&c2>=0&&c3>=0)||(c1<=0&&c2<=0&&c3<=0);var k=1,q;
q=col(u,v);if(!inside){k=K;}
var i=(py*W+px)*4;D[i]=q[0]*255*k;D[i+1]=q[1]*255*k;D[i+2]=q[2]*255*k;D[i+3]=255;}}
oc.putImageData(im,0,0);
ctx.clearRect(0,0,W,H);ctx.fillStyle='#222';ctx.fillRect(0,0,W,H);
ctx.save();ctx.beginPath();for(var j=0;j<L.length;j++){var X=OX+L[j][0]*SU,Y=OY-L[j][1]*SV;if(j==0)ctx.moveTo(X,Y);else ctx.lineTo(X,Y);}ctx.closePath();ctx.clip();
ctx.drawImage(off,0,0);ctx.restore();
})();</script>
<div class="t" style="left:1506.6px;top:133.3px;font-size:16.23px;color:#e0e0e0"><span class="sx" style="transform:scaleX(0.927)">CIE 1976 u'v'</span></div>
<svg class="a" style="left:0;top:0" width="1920" height="1058"><defs><clipPath id="pc2"><rect x="1230" y="153" width="678" height="521"/></clipPath></defs>
<rect x="1229.9" y="152.3" width="678.9" height="522.5" fill="none" stroke="#aaa" stroke-width="1.5"/>
<line x1="1223.5" y1="675.2" x2="1229.9" y2="675.2" stroke="#aaa" stroke-width="1.5"/><line x1="1229.9" y1="674.8" x2="1229.9" y2="681" stroke="#aaa" stroke-width="1.5"/><line x1="1223.5" y1="631.8" x2="1229.9" y2="631.8" stroke="#aaa" stroke-width="1.5"/><line x1="1286.4" y1="674.8" x2="1286.4" y2="681" stroke="#aaa" stroke-width="1.5"/><line x1="1223.5" y1="588.3" x2="1229.9" y2="588.3" stroke="#aaa" stroke-width="1.5"/><line x1="1342.8" y1="674.8" x2="1342.8" y2="681" stroke="#aaa" stroke-width="1.5"/><line x1="1223.5" y1="544.9" x2="1229.9" y2="544.9" stroke="#aaa" stroke-width="1.5"/><line x1="1399.2" y1="674.8" x2="1399.2" y2="681" stroke="#aaa" stroke-width="1.5"/><line x1="1223.5" y1="501.4" x2="1229.9" y2="501.4" stroke="#aaa" stroke-width="1.5"/><line x1="1455.7" y1="674.8" x2="1455.7" y2="681" stroke="#aaa" stroke-width="1.5"/><line x1="1223.5" y1="458.0" x2="1229.9" y2="458.0" stroke="#aaa" stroke-width="1.5"/><line x1="1512.2" y1="674.8" x2="1512.2" y2="681" stroke="#aaa" stroke-width="1.5"/><line x1="1223.5" y1="414.5" x2="1229.9" y2="414.5" stroke="#aaa" stroke-width="1.5"/><line x1="1568.6" y1="674.8" x2="1568.6" y2="681" stroke="#aaa" stroke-width="1.5"/><line x1="1223.5" y1="371.1" x2="1229.9" y2="371.1" stroke="#aaa" stroke-width="1.5"/><line x1="1625.1" y1="674.8" x2="1625.1" y2="681" stroke="#aaa" stroke-width="1.5"/><line x1="1223.5" y1="327.6" x2="1229.9" y2="327.6" stroke="#aaa" stroke-width="1.5"/><line x1="1681.5" y1="674.8" x2="1681.5" y2="681" stroke="#aaa" stroke-width="1.5"/><line x1="1223.5" y1="284.2" x2="1229.9" y2="284.2" stroke="#aaa" stroke-width="1.5"/><line x1="1738.0" y1="674.8" x2="1738.0" y2="681" stroke="#aaa" stroke-width="1.5"/><line x1="1223.5" y1="240.7" x2="1229.9" y2="240.7" stroke="#aaa" stroke-width="1.5"/><line x1="1794.4" y1="674.8" x2="1794.4" y2="681" stroke="#aaa" stroke-width="1.5"/><line x1="1223.5" y1="197.2" x2="1229.9" y2="197.2" stroke="#aaa" stroke-width="1.5"/><line x1="1850.9" y1="674.8" x2="1850.9" y2="681" stroke="#aaa" stroke-width="1.5"/>
<g clip-path="url(#pc2)">
<rect x="1363.9" y="177.5" width="13" height="13" fill="none" stroke="#fff" stroke-width="2"/><rect x="1389.5" y="203.0" width="13" height="13" fill="none" stroke="#fff" stroke-width="2"/><rect x="1431.4" y="194.7" width="13" height="13" fill="none" stroke="#fff" stroke-width="2"/><rect x="1453.2" y="185.6" width="13" height="13" fill="none" stroke="#fff" stroke-width="2"/><rect x="1482.1" y="190.4" width="13" height="13" fill="none" stroke="#fff" stroke-width="2"/><rect x="1515.2" y="197.4" width="13" height="13" fill="none" stroke="#fff" stroke-width="2"/><rect x="1561.3" y="202.7" width="13" height="13" fill="none" stroke="#fff" stroke-width="2"/><rect x="1428.6" y="217.8" width="13" height="13" fill="none" stroke="#fff" stroke-width="2"/><rect x="1397.2" y="251.3" width="13" height="13" fill="none" stroke="#fff" stroke-width="2"/><rect x="1379.4" y="271.3" width="13" height="13" fill="none" stroke="#fff" stroke-width="2"/><rect x="1385.1" y="304.2" width="13" height="13" fill="none" stroke="#fff" stroke-width="2"/><rect x="1421.4" y="301.4" width="13" height="13" fill="none" stroke="#fff" stroke-width="2"/><rect x="1443.2" y="307.2" width="13" height="13" fill="none" stroke="#fff" stroke-width="2"/><rect x="1480.6" y="326.0" width="13" height="13" fill="none" stroke="#fff" stroke-width="2"/><rect x="1581.4" y="246.5" width="13" height="13" fill="none" stroke="#fff" stroke-width="2"/><rect x="1547.2" y="296.3" width="13" height="13" fill="none" stroke="#fff" stroke-width="2"/><rect x="1424.3" y="357.8" width="13" height="13" fill="none" stroke="#fff" stroke-width="2"/><rect x="1424.3" y="411.9" width="13" height="13" fill="none" stroke="#fff" stroke-width="2"/><rect x="1421.6" y="530.0" width="13" height="13" fill="none" stroke="#fff" stroke-width="2"/><rect x="1567.4" y="379.3" width="13" height="13" fill="none" stroke="#fff" stroke-width="2"/><rect x="1732.1" y="212.2" width="13" height="13" fill="none" stroke="#fff" stroke-width="2"/><rect x="1646.7" y="233.8" width="13" height="13" fill="none" stroke="#fff" stroke-width="2"/><rect x="1486.3" y="233.9" width="13" height="13" fill="none" stroke="#fff" stroke-width="2"/><rect x="1486.3" y="225.5" width="13" height="13" fill="none" stroke="#fff" stroke-width="2"/><rect x="1498.5" y="228.2" width="13" height="13" fill="none" stroke="#fff" stroke-width="2"/><rect x="1507.1" y="221.6" width="13" height="13" fill="none" stroke="#fff" stroke-width="2"/><rect x="1514.5" y="219.5" width="13" height="13" fill="none" stroke="#fff" stroke-width="2"/><rect x="1525.0" y="208.3" width="13" height="13" fill="none" stroke="#fff" stroke-width="2"/><rect x="1535.5" y="209.3" width="13" height="13" fill="none" stroke="#fff" stroke-width="2"/><rect x="1544.0" y="215.9" width="13" height="13" fill="none" stroke="#fff" stroke-width="2"/><rect x="1532.6" y="223.5" width="13" height="13" fill="none" stroke="#fff" stroke-width="2"/><rect x="1521.5" y="223.5" width="13" height="13" fill="none" stroke="#fff" stroke-width="2"/><rect x="1561.3" y="207.5" width="13" height="13" fill="none" stroke="#fff" stroke-width="2"/><rect x="1445.6" y="259.8" width="13" height="13" fill="none" stroke="#000" stroke-width="2.2"/><circle cx="1369.9" cy="184.0" r="4.6" fill="#00ff00" stroke="#111" stroke-width="1.4"/><circle cx="1393.5" cy="208.4" r="4.6" fill="#4e8a50" stroke="#111" stroke-width="1.4"/><circle cx="1435.1" cy="199.7" r="4.6" fill="#a0b050" stroke="#111" stroke-width="1.4"/><circle cx="1458.4" cy="192.5" r="4.6" fill="#ffff00" stroke="#111" stroke-width="1.4"/><circle cx="1487.1" cy="195.0" r="4.6" fill="#e0c030" stroke="#111" stroke-width="1.4"/><circle cx="1521.5" cy="202.9" r="4.6" fill="#e0a030" stroke="#111" stroke-width="1.4"/><circle cx="1569.4" cy="208.2" r="4.6" fill="#c87a30" stroke="#111" stroke-width="1.4"/><circle cx="1434.2" cy="222.8" r="4.6" fill="#5c6848" stroke="#111" stroke-width="1.4"/><circle cx="1402.0" cy="258.9" r="4.6" fill="#70b0a0" stroke="#111" stroke-width="1.4"/><circle cx="1383.3" cy="279.1" r="4.6" fill="#00ffff" stroke="#111" stroke-width="1.4"/><circle cx="1451.2" cy="268.5" r="4.6" fill="#333" stroke="#111" stroke-width="1.4"/><circle cx="1451.2" cy="266.5" r="4.6" fill="#a0a0a0" stroke="#111" stroke-width="1.4"/><circle cx="1439.4" cy="298.0" r="4.6" fill="#000" stroke="#111" stroke-width="1.4"/><circle cx="1388.8" cy="312.2" r="4.6" fill="#0888a8" stroke="#111" stroke-width="1.4"/><circle cx="1425.3" cy="309.4" r="4.6" fill="#6880a0" stroke="#111" stroke-width="1.4"/><circle cx="1448.3" cy="315.4" r="4.6" fill="#8a88b8" stroke="#111" stroke-width="1.4"/><circle cx="1472.9" cy="344.0" r="4.6" fill="#604870" stroke="#111" stroke-width="1.4"/><circle cx="1590.5" cy="253.0" r="4.6" fill="#c05868" stroke="#111" stroke-width="1.4"/><circle cx="1554.8" cy="305.2" r="4.6" fill="#c05898" stroke="#111" stroke-width="1.4"/><circle cx="1428.1" cy="370.2" r="4.6" fill="#5868a8" stroke="#111" stroke-width="1.4"/><circle cx="1428.1" cy="428.0" r="4.6" fill="#404ca0" stroke="#111" stroke-width="1.4"/><circle cx="1425.4" cy="548.0" r="4.6" fill="#0000ff" stroke="#111" stroke-width="1.4"/><circle cx="1573.9" cy="395.1" r="4.6" fill="#ff00ff" stroke="#111" stroke-width="1.4"/><circle cx="1748.7" cy="217.2" r="4.6" fill="#ff0000" stroke="#111" stroke-width="1.4"/><circle cx="1665.0" cy="238.8" r="4.6" fill="#b04050" stroke="#111" stroke-width="1.4"/><circle cx="1566.5" cy="205.0" r="4.6" fill="#d08040" stroke="#111" stroke-width="1.4"/><circle cx="1491.0" cy="247.0" r="4.6" fill="#805040" stroke="#111" stroke-width="1.4"/><circle cx="1491.5" cy="244.7" r="4.6" fill="#f0b898" stroke="#111" stroke-width="1.4"/><circle cx="1492.4" cy="235.6" r="4.6" fill="#f0c0a0" stroke="#111" stroke-width="1.4"/><circle cx="1505.0" cy="239.4" r="4.6" fill="#704838" stroke="#111" stroke-width="1.4"/><circle cx="1506.0" cy="234.7" r="4.6" fill="#c08060" stroke="#111" stroke-width="1.4"/><circle cx="1512.6" cy="223.9" r="4.6" fill="#d09070" stroke="#111" stroke-width="1.4"/><circle cx="1510.7" cy="231.9" r="4.6" fill="#d09070" stroke="#111" stroke-width="1.4"/><circle cx="1522.5" cy="232.8" r="4.6" fill="#d08a6a" stroke="#111" stroke-width="1.4"/><circle cx="1531.5" cy="216.7" r="4.6" fill="#a06040" stroke="#111" stroke-width="1.4"/><circle cx="1530.6" cy="224.3" r="4.6" fill="#d89070" stroke="#111" stroke-width="1.4"/><circle cx="1537.2" cy="225.2" r="4.6" fill="#c88060" stroke="#111" stroke-width="1.4"/><circle cx="1539.1" cy="230.0" r="4.6" fill="#f0a080" stroke="#111" stroke-width="1.4"/><circle cx="1542.9" cy="213.9" r="4.6" fill="#805030" stroke="#111" stroke-width="1.4"/><circle cx="1552.0" cy="220.1" r="4.6" fill="#7a4a30" stroke="#111" stroke-width="1.4"/></g>
<rect x="1688.3" y="489" width="216" height="142.8" fill="#2a2a2a"/><defs><linearGradient id="ig" x1="0" y1="0" x2="1" y2="1"><stop offset="0" stop-color="#ff8c2c"/><stop offset=".5" stop-color="#ff6a2a"/><stop offset="1" stop-color="#ff4020"/></linearGradient></defs><rect x="1691.5" y="491.9" width="210.2" height="137.4" fill="url(#ig)" stroke="#8a8a8a" stroke-width="1.5"/>
<rect x="1719.5" y="532.8" width="13.5" height="13.5" fill="none" stroke="#fff" stroke-width="2"/><rect x="1831.0" y="511.4" width="13.5" height="13.5" fill="none" stroke="#fff" stroke-width="2"/><rect x="1882.8" y="513.0" width="13.5" height="13.5" fill="none" stroke="#fff" stroke-width="2"/><rect x="1881.0" y="552.0" width="13.5" height="13.5" fill="none" stroke="#fff" stroke-width="2"/><rect x="1789.0" y="553.2" width="13.5" height="13.5" fill="none" stroke="#fff" stroke-width="2"/><rect x="1809.2" y="567.5" width="13.5" height="13.5" fill="none" stroke="#fff" stroke-width="2"/><rect x="1696.7" y="567.5" width="13.5" height="13.5" fill="none" stroke="#fff" stroke-width="2"/><rect x="1703.5" y="576.0" width="13.5" height="13.5" fill="none" stroke="#fff" stroke-width="2"/><rect x="1712.3" y="589.4" width="13.5" height="13.5" fill="none" stroke="#fff" stroke-width="2"/><rect x="1793.3" y="594.0" width="13.5" height="13.5" fill="none" stroke="#fff" stroke-width="2"/><circle cx="1726.2" cy="532.6" r="4.8" fill="#c89060" stroke="#1a1a1a" stroke-width="1.4"/><circle cx="1856.7" cy="506.4" r="4.8" fill="#8a5a38" stroke="#1a1a1a" stroke-width="1.4"/><circle cx="1798.7" cy="554.0" r="4.8" fill="#e0a070" stroke="#1a1a1a" stroke-width="1.4"/><circle cx="1818.5" cy="568.7" r="4.8" fill="#c88058" stroke="#1a1a1a" stroke-width="1.4"/><circle cx="1700.4" cy="571.7" r="4.8" fill="#f0b090" stroke="#1a1a1a" stroke-width="1.4"/><circle cx="1710.8" cy="578.7" r="4.8" fill="#c88a68" stroke="#1a1a1a" stroke-width="1.4"/><circle cx="1719.3" cy="591.8" r="4.8" fill="#c08068" stroke="#1a1a1a" stroke-width="1.4"/><circle cx="1799.7" cy="597.7" r="4.8" fill="#f0a888" stroke="#1a1a1a" stroke-width="1.4"/>
<rect x="1636.5" y="640.4" width="268.2" height="28.6" fill="#2e2e2e"/>
</svg>
<div class="t" style="left:1638.0px;top:643.9px;font-size:22.03px;color:#f4f4f4"><span class="sx" style="transform:scaleX(0.949)">RGB Triplet: 217, 140, 94</span></div>
<div class="t" style="left:1213.6px;top:667.1px;font-size:15.94px;color:#e0e0e0">0</div>
<div class="t" style="left:1225.6px;top:684.8px;font-size:15.36px;color:#e0e0e0">0</div>
<div class="t" style="left:1191.5px;top:623.7px;font-size:15.94px;color:#e0e0e0">0.05</div>
<div class="t" style="left:1271.4px;top:684.8px;font-size:15.36px;color:#e0e0e0">0.05</div>
<div class="t" style="left:1200.3px;top:580.2px;font-size:15.94px;color:#e0e0e0">0.1</div>
<div class="t" style="left:1332.1px;top:684.8px;font-size:15.36px;color:#e0e0e0">0.1</div>
<div class="t" style="left:1191.5px;top:536.8px;font-size:15.94px;color:#e0e0e0">0.15</div>
<div class="t" style="left:1384.3px;top:684.8px;font-size:15.36px;color:#e0e0e0">0.15</div>
<div class="t" style="left:1200.3px;top:493.3px;font-size:15.94px;color:#e0e0e0">0.2</div>
<div class="t" style="left:1445.0px;top:684.8px;font-size:15.36px;color:#e0e0e0">0.2</div>
<div class="t" style="left:1191.5px;top:449.9px;font-size:15.94px;color:#e0e0e0">0.25</div>
<div class="t" style="left:1497.2px;top:684.8px;font-size:15.36px;color:#e0e0e0">0.25</div>
<div class="t" style="left:1200.3px;top:406.4px;font-size:15.94px;color:#e0e0e0">0.3</div>
<div class="t" style="left:1557.9px;top:684.8px;font-size:15.36px;color:#e0e0e0">0.3</div>
<div class="t" style="left:1191.5px;top:363.0px;font-size:15.94px;color:#e0e0e0">0.35</div>
<div class="t" style="left:1610.1px;top:684.8px;font-size:15.36px;color:#e0e0e0">0.35</div>
<div class="t" style="left:1200.3px;top:319.5px;font-size:15.94px;color:#e0e0e0">0.4</div>
<div class="t" style="left:1670.8px;top:684.8px;font-size:15.36px;color:#e0e0e0">0.4</div>
<div class="t" style="left:1191.5px;top:276.1px;font-size:15.94px;color:#e0e0e0">0.45</div>
<div class="t" style="left:1723.0px;top:684.8px;font-size:15.36px;color:#e0e0e0">0.45</div>
<div class="t" style="left:1200.3px;top:232.6px;font-size:15.94px;color:#e0e0e0">0.5</div>
<div class="t" style="left:1783.7px;top:684.8px;font-size:15.36px;color:#e0e0e0">0.5</div>
<div class="t" style="left:1191.5px;top:189.2px;font-size:15.94px;color:#e0e0e0">0.55</div>
<div class="t" style="left:1835.9px;top:684.8px;font-size:15.36px;color:#e0e0e0">0.55</div>
<div class="t" style="left:203.9px;top:720.5px;font-size:30.14px;color:#f4f4f4"><span class="sx" style="transform:scaleX(1.029)">Avg dE2000: 0.97</span></div>
<div class="t" style="left:197.5px;top:762.8px;font-size:30.14px;color:#f4f4f4"><span class="sx" style="transform:scaleX(1.048)">Max dE2000: 3.57</span></div>
<div class="t" style="left:164.5px;top:814.5px;font-size:30.14px;color:#f4f4f4"><span class="sx" style="transform:scaleX(1.053)">Current Reading</span></div>
<div class="t" style="left:166.2px;top:855.4px;font-size:26.38px;color:#f4f4f4"><span class="sx" style="transform:scaleX(0.993)">x: 0.4479</span></div>
<div class="t" style="left:331.5px;top:855.4px;font-size:26.38px;color:#f4f4f4">y: 0.3857</div>
<div class="t" style="left:166.2px;top:899.3px;font-size:26.96px;color:#f4f4f4"><span class="sx" style="transform:scaleX(0.963)">fL: 38.12</span></div>
<div class="t" style="left:166.2px;top:934.5px;font-size:26.96px;color:#f4f4f4"><span class="sx" style="transform:scaleX(1.017)">cd/m²: 130.62</span></div>
<div class="a" style="left:491px;top:728px;width:1429px;height:240px;overflow:hidden">
<div class="a" style="left:0;top:0;width:1427px;height:13px;background:linear-gradient(#313131,#2a2a2a)"></div><div class="a" style="left:0;top:13px;width:1427px;height:14px;background:#141414"></div><div class="a" style="left:0;top:0;width:10px;height:27px;background:#000"></div>
<div class="a" style="left:10px;top:26.7px;width:1417px;height:24.8px;background:#414141"></div><div class="a" style="left:0;top:26.7px;width:10px;height:24.8px;background:#202020"></div>
<div class="a" style="left:10px;top:51.3px;width:1417px;height:24.8px;background:#808080"></div><div class="a" style="left:0;top:51.3px;width:10px;height:24.8px;background:#202020"></div>
<div class="a" style="left:10px;top:75.9px;width:1417px;height:24.8px;background:#414141"></div><div class="a" style="left:0;top:75.9px;width:10px;height:24.8px;background:#202020"></div>
<div class="a" style="left:10px;top:100.5px;width:1417px;height:24.8px;background:#808080"></div><div class="a" style="left:0;top:100.5px;width:10px;height:24.8px;background:#202020"></div>
<div class="a" style="left:10px;top:125.1px;width:1417px;height:24.8px;background:#414141"></div><div class="a" style="left:0;top:125.1px;width:10px;height:24.8px;background:#202020"></div>
<div class="a" style="left:10px;top:149.7px;width:1417px;height:24.8px;background:#808080"></div><div class="a" style="left:0;top:149.7px;width:10px;height:24.8px;background:#202020"></div>
<div class="a" style="left:10px;top:174.3px;width:1417px;height:24.8px;background:#414141"></div><div class="a" style="left:0;top:174.3px;width:10px;height:24.8px;background:#202020"></div>
<div class="a" style="left:10px;top:198.9px;width:1417px;height:24.8px;background:#808080"></div><div class="a" style="left:0;top:198.9px;width:10px;height:24.8px;background:#202020"></div>
<div class="a" style="left:497.4px;top:76.2px;width:40px;height:24px;background:linear-gradient(#f4f4f4,#e8e8e8);border:1px solid #fff;box-shadow:0 0 1px #222"></div>
<div class="a" style="left:10px;top:223.8px;width:1417px;height:16px;background:#606060;border-radius:0 0 3px 3px"></div><div class="a" style="left:23px;top:226.0px;width:839px;height:12px;background:#454545;border-radius:6px"></div><div class="a" style="left:11px;top:225.5px;width:11px;height:13px;background:#7a7a7a;border-radius:3px"></div><svg class="a" style="left:13px;top:228.0px" width="7" height="9"><path d="M5.5 0.5L5.5 8.5L1 4.5Z" fill="#333"/></svg><div class="a" style="left:1416.5px;top:225.8px;width:10px;height:13px;background:#7a7a7a;border-radius:3px"></div><svg class="a" style="left:1418.0px;top:228.0px" width="7" height="9"><path d="M1.5 0.5L1.5 8.5L6 4.5Z" fill="#333"/></svg>
</div>
<div class="a" style="left:1918px;top:728px;width:2px;height:240px;background:#2a2a2a"></div>
<div class="a" style="left:491px;top:728px;width:1427px;height:224px;overflow:hidden">
<div class="t" style="left:94.6px;top:6.2px;font-size:15.07px;color:#f6f6f6;text-shadow:0.3px 0 0 #f6f6f6"><span class="sx" style="transform:scaleX(0.700)">White</span></div>
<div class="t" style="left:137.1px;top:6.2px;font-size:15.07px;color:#f6f6f6;text-shadow:0.3px 0 0 #f6f6f6"><span class="sx" style="transform:scaleX(0.700)">Gray 80</span></div>
<div class="t" style="left:181.2px;top:6.2px;font-size:15.07px;color:#f6f6f6;text-shadow:0.3px 0 0 #f6f6f6"><span class="sx" style="transform:scaleX(0.700)">Gray 65</span></div>
<div class="t" style="left:224.8px;top:6.2px;font-size:15.07px;color:#f6f6f6;text-shadow:0.3px 0 0 #f6f6f6"><span class="sx" style="transform:scaleX(0.700)">Gray 50</span></div>
<div class="t" style="left:268.6px;top:6.2px;font-size:15.07px;color:#f6f6f6;text-shadow:0.3px 0 0 #f6f6f6"><span class="sx" style="transform:scaleX(0.700)">Gray 35</span></div>
<div class="t" style="left:312.4px;top:6.2px;font-size:15.07px;color:#f6f6f6;text-shadow:0.3px 0 0 #f6f6f6"><span class="sx" style="transform:scaleX(0.700)">Black</span></div>
<div class="t" style="left:348.3px;top:6.2px;font-size:15.07px;color:#f6f6f6;text-shadow:0.3px 0 0 #f6f6f6"><span class="sx" style="transform:scaleX(0.700)">Dark Skin</span></div>
<div class="t" style="left:400.6px;top:6.2px;font-size:15.07px;color:#f6f6f6;text-shadow:0.3px 0 0 #f6f6f6"><span class="sx" style="transform:scaleX(0.700)">Light Skin</span></div>
<div class="t" style="left:453.2px;top:6.2px;font-size:15.07px;color:#f6f6f6;text-shadow:0.3px 0 0 #f6f6f6"><span class="sx" style="transform:scaleX(0.700)">Blue Sky</span></div>
<div class="t" style="left:500.5px;top:6.2px;font-size:15.07px;color:#f6f6f6;text-shadow:0.3px 0 0 #f6f6f6"><span class="sx" style="transform:scaleX(0.700)">Foliage</span></div>
<div class="t" style="left:541.5px;top:6.2px;font-size:15.07px;color:#f6f6f6;text-shadow:0.3px 0 0 #f6f6f6"><span class="sx" style="transform:scaleX(0.700)">Blue Flower</span></div>
<div class="t" style="left:605.2px;top:6.2px;font-size:15.07px;color:#f6f6f6;text-shadow:0.3px 0 0 #f6f6f6"><span class="sx" style="transform:scaleX(0.700)">Bluish Green</span></div>
<div class="t" style="left:673.8px;top:6.2px;font-size:15.07px;color:#f6f6f6;text-shadow:0.3px 0 0 #f6f6f6"><span class="sx" style="transform:scaleX(0.700)">Orange</span></div>
<div class="t" style="left:716.3px;top:6.2px;font-size:15.07px;color:#f6f6f6;text-shadow:0.3px 0 0 #f6f6f6"><span class="sx" style="transform:scaleX(0.700)">Purplish Blue</span></div>
<div class="t" style="left:787.2px;top:6.2px;font-size:15.07px;color:#f6f6f6;text-shadow:0.3px 0 0 #f6f6f6"><span class="sx" style="transform:scaleX(0.700)">Moderate Red</span></div>
<div class="t" style="left:863.4px;top:6.2px;font-size:15.07px;color:#f6f6f6;text-shadow:0.3px 0 0 #f6f6f6"><span class="sx" style="transform:scaleX(0.700)">Purple</span></div>
<div class="t" style="left:901.4px;top:6.2px;font-size:15.07px;color:#f6f6f6;text-shadow:0.3px 0 0 #f6f6f6"><span class="sx" style="transform:scaleX(0.700)">Yellow Green</span></div>
<div class="t" style="left:971.8px;top:6.2px;font-size:15.07px;color:#f6f6f6;text-shadow:0.3px 0 0 #f6f6f6"><span class="sx" style="transform:scaleX(0.700)">Orange Yellow</span></div>
<div class="t" style="left:1048.1px;top:6.2px;font-size:15.07px;color:#f6f6f6;text-shadow:0.3px 0 0 #f6f6f6"><span class="sx" style="transform:scaleX(0.700)">Blue</span></div>
<div class="t" style="left:1084.3px;top:6.2px;font-size:15.07px;color:#f6f6f6;text-shadow:0.3px 0 0 #f6f6f6"><span class="sx" style="transform:scaleX(0.700)">Green</span></div>
<div class="t" style="left:1120.1px;top:6.2px;font-size:15.07px;color:#f6f6f6;text-shadow:0.3px 0 0 #f6f6f6"><span class="sx" style="transform:scaleX(0.700)">Red</span></div>
<div class="t" style="left:1156.2px;top:6.2px;font-size:15.07px;color:#f6f6f6;text-shadow:0.3px 0 0 #f6f6f6"><span class="sx" style="transform:scaleX(0.700)">Yellow</span></div>
<div class="t" style="left:1198.5px;top:6.2px;font-size:15.07px;color:#f6f6f6;text-shadow:0.3px 0 0 #f6f6f6"><span class="sx" style="transform:scaleX(0.700)">Magenta</span></div>
<div class="t" style="left:1248.4px;top:6.2px;font-size:15.07px;color:#f6f6f6;text-shadow:0.3px 0 0 #f6f6f6"><span class="sx" style="transform:scaleX(0.700)">Cyan</span></div>
<div class="t" style="left:1284.0px;top:6.2px;font-size:15.07px;color:#f6f6f6;text-shadow:0.3px 0 0 #f6f6f6"><span class="sx" style="transform:scaleX(0.700)">100% Red</span></div>
<div class="t" style="left:1338.8px;top:6.2px;font-size:15.07px;color:#f6f6f6;text-shadow:0.3px 0 0 #f6f6f6"><span class="sx" style="transform:scaleX(0.700)">100% Green</span></div>
<div class="t" style="left:1405.5px;top:6.2px;font-size:15.07px;color:#f6f6f6;text-shadow:0.3px 0 0 #f6f6f6"><span class="sx" style="transform:scaleX(0.700)">100% Blue</span></div>
<div class="t" style="left:13.0px;top:30.9px;font-size:16.23px;color:#f4f4f4"><span class="sx" style="transform:scaleX(0.690)">x: CIE31</span></div>
<div class="t" style="left:94.6px;top:30.9px;font-size:16.23px;color:#f4f4f4"><span class="sx" style="transform:scaleX(0.700)">0.31</span></div>
<div class="t" style="left:137.1px;top:30.9px;font-size:16.23px;color:#f4f4f4"><span class="sx" style="transform:scaleX(0.700)">0.31</span></div>
<div class="t" style="left:181.2px;top:30.9px;font-size:16.23px;color:#f4f4f4"><span class="sx" style="transform:scaleX(0.700)">0.31</span></div>
<div class="t" style="left:224.8px;top:30.9px;font-size:16.23px;color:#f4f4f4"><span class="sx" style="transform:scaleX(0.700)">0.31</span></div>
<div class="t" style="left:268.6px;top:30.9px;font-size:16.23px;color:#f4f4f4"><span class="sx" style="transform:scaleX(0.700)">0.31</span></div>
<div class="t" style="left:312.4px;top:30.9px;font-size:16.23px;color:#f4f4f4"><span class="sx" style="transform:scaleX(0.700)">0.27</span></div>
<div class="t" style="left:348.3px;top:30.9px;font-size:16.23px;color:#f4f4f4"><span class="sx" style="transform:scaleX(0.700)">0.40</span></div>
<div class="t" style="left:400.6px;top:30.9px;font-size:16.23px;color:#f4f4f4"><span class="sx" style="transform:scaleX(0.700)">0.38</span></div>
<div class="t" style="left:453.2px;top:30.9px;font-size:16.23px;color:#f4f4f4"><span class="sx" style="transform:scaleX(0.700)">0.25</span></div>
<div class="t" style="left:500.5px;top:30.9px;font-size:16.23px;color:#f4f4f4"><span class="sx" style="transform:scaleX(0.700)">0.34</span></div>
<div class="t" style="left:541.5px;top:30.9px;font-size:16.23px;color:#f4f4f4"><span class="sx" style="transform:scaleX(0.700)">0.26</span></div>
<div class="t" style="left:605.2px;top:30.9px;font-size:16.23px;color:#f4f4f4"><span class="sx" style="transform:scaleX(0.700)">0.26</span></div>
<div class="t" style="left:673.8px;top:30.9px;font-size:16.23px;color:#f4f4f4"><span class="sx" style="transform:scaleX(0.700)">0.52</span></div>
<div class="t" style="left:716.3px;top:30.9px;font-size:16.23px;color:#f4f4f4"><span class="sx" style="transform:scaleX(0.700)">0.21</span></div>
<div class="t" style="left:787.2px;top:30.9px;font-size:16.23px;color:#f4f4f4"><span class="sx" style="transform:scaleX(0.700)">0.46</span></div>
<div class="t" style="left:863.4px;top:30.9px;font-size:16.23px;color:#f4f4f4"><span class="sx" style="transform:scaleX(0.700)">0.27</span></div>
<div class="t" style="left:901.4px;top:30.9px;font-size:16.23px;color:#f4f4f4"><span class="sx" style="transform:scaleX(0.700)">0.37</span></div>
<div class="t" style="left:971.8px;top:30.9px;font-size:16.23px;color:#f4f4f4"><span class="sx" style="transform:scaleX(0.700)">0.48</span></div>
<div class="t" style="left:1048.1px;top:30.9px;font-size:16.23px;color:#f4f4f4"><span class="sx" style="transform:scaleX(0.700)">0.18</span></div>
<div class="t" style="left:1084.3px;top:30.9px;font-size:16.23px;color:#f4f4f4"><span class="sx" style="transform:scaleX(0.700)">0.30</span></div>
<div class="t" style="left:1120.1px;top:30.9px;font-size:16.23px;color:#f4f4f4"><span class="sx" style="transform:scaleX(0.700)">0.55</span></div>
<div class="t" style="left:1156.2px;top:30.9px;font-size:16.23px;color:#f4f4f4"><span class="sx" style="transform:scaleX(0.700)">0.45</span></div>
<div class="t" style="left:1198.5px;top:30.9px;font-size:16.23px;color:#f4f4f4"><span class="sx" style="transform:scaleX(0.700)">0.37</span></div>
<div class="t" style="left:1248.4px;top:30.9px;font-size:16.23px;color:#f4f4f4"><span class="sx" style="transform:scaleX(0.700)">0.20</span></div>
<div class="t" style="left:1284.0px;top:30.9px;font-size:16.23px;color:#f4f4f4"><span class="sx" style="transform:scaleX(0.700)">0.65</span></div>
<div class="t" style="left:1338.8px;top:30.9px;font-size:16.23px;color:#f4f4f4"><span class="sx" style="transform:scaleX(0.700)">0.30</span></div>
<div class="t" style="left:1405.5px;top:30.9px;font-size:16.23px;color:#f4f4f4"><span class="sx" style="transform:scaleX(0.700)">0.14</span></div>
<div class="t" style="left:13.0px;top:55.5px;font-size:16.23px;color:#f4f4f4"><span class="sx" style="transform:scaleX(0.690)">y: CIE31</span></div>
<div class="t" style="left:94.6px;top:55.5px;font-size:16.23px;color:#f4f4f4"><span class="sx" style="transform:scaleX(0.700)">0.33</span></div>
<div class="t" style="left:137.1px;top:55.5px;font-size:16.23px;color:#f4f4f4"><span class="sx" style="transform:scaleX(0.700)">0.33</span></div>
<div class="t" style="left:181.2px;top:55.5px;font-size:16.23px;color:#f4f4f4"><span class="sx" style="transform:scaleX(0.700)">0.33</span></div>
<div class="t" style="left:224.8px;top:55.5px;font-size:16.23px;color:#f4f4f4"><span class="sx" style="transform:scaleX(0.700)">0.33</span></div>
<div class="t" style="left:268.6px;top:55.5px;font-size:16.23px;color:#f4f4f4"><span class="sx" style="transform:scaleX(0.700)">0.33</span></div>
<div class="t" style="left:312.4px;top:55.5px;font-size:16.23px;color:#f4f4f4"><span class="sx" style="transform:scaleX(0.700)">0.28</span></div>
<div class="t" style="left:348.3px;top:55.5px;font-size:16.23px;color:#f4f4f4"><span class="sx" style="transform:scaleX(0.700)">0.37</span></div>
<div class="t" style="left:400.6px;top:55.5px;font-size:16.23px;color:#f4f4f4"><span class="sx" style="transform:scaleX(0.700)">0.36</span></div>
<div class="t" style="left:453.2px;top:55.5px;font-size:16.23px;color:#f4f4f4"><span class="sx" style="transform:scaleX(0.700)">0.26</span></div>
<div class="t" style="left:500.5px;top:55.5px;font-size:16.23px;color:#f4f4f4"><span class="sx" style="transform:scaleX(0.700)">0.43</span></div>
<div class="t" style="left:541.5px;top:55.5px;font-size:16.23px;color:#f4f4f4"><span class="sx" style="transform:scaleX(0.700)">0.25</span></div>
<div class="t" style="left:605.2px;top:55.5px;font-size:16.23px;color:#f4f4f4"><span class="sx" style="transform:scaleX(0.700)">0.36</span></div>
<div class="t" style="left:673.8px;top:55.5px;font-size:16.23px;color:#f4f4f4"><span class="sx" style="transform:scaleX(0.700)">0.41</span></div>
<div class="t" style="left:716.3px;top:55.5px;font-size:16.23px;color:#f4f4f4"><span class="sx" style="transform:scaleX(0.700)">0.19</span></div>
<div class="t" style="left:787.2px;top:55.5px;font-size:16.23px;color:#f4f4f4"><span class="sx" style="transform:scaleX(0.700)">0.31</span></div>
<div class="t" style="left:863.4px;top:55.5px;font-size:16.23px;color:#f4f4f4"><span class="sx" style="transform:scaleX(0.700)">0.21</span></div>
<div class="t" style="left:901.4px;top:55.5px;font-size:16.23px;color:#f4f4f4"><span class="sx" style="transform:scaleX(0.700)">0.50</span></div>
<div class="t" style="left:971.8px;top:55.5px;font-size:16.23px;color:#f4f4f4"><span class="sx" style="transform:scaleX(0.700)">0.44</span></div>
<div class="t" style="left:1048.1px;top:55.5px;font-size:16.23px;color:#f4f4f4"><span class="sx" style="transform:scaleX(0.700)">0.13</span></div>
<div class="t" style="left:1084.3px;top:55.5px;font-size:16.23px;color:#f4f4f4"><span class="sx" style="transform:scaleX(0.700)">0.49</span></div>
<div class="t" style="left:1120.1px;top:55.5px;font-size:16.23px;color:#f4f4f4"><span class="sx" style="transform:scaleX(0.700)">0.32</span></div>
<div class="t" style="left:1156.2px;top:55.5px;font-size:16.23px;color:#f4f4f4"><span class="sx" style="transform:scaleX(0.700)">0.48</span></div>
<div class="t" style="left:1198.5px;top:55.5px;font-size:16.23px;color:#f4f4f4"><span class="sx" style="transform:scaleX(0.700)">0.24</span></div>
<div class="t" style="left:1248.4px;top:55.5px;font-size:16.23px;color:#f4f4f4"><span class="sx" style="transform:scaleX(0.700)">0.27</span></div>
<div class="t" style="left:1284.0px;top:55.5px;font-size:16.23px;color:#f4f4f4"><span class="sx" style="transform:scaleX(0.700)">0.33</span></div>
<div class="t" style="left:1338.8px;top:55.5px;font-size:16.23px;color:#f4f4f4"><span class="sx" style="transform:scaleX(0.700)">0.60</span></div>
<div class="t" style="left:1405.5px;top:55.5px;font-size:16.23px;color:#f4f4f4"><span class="sx" style="transform:scaleX(0.700)">0.05</span></div>
<div class="t" style="left:13.0px;top:80.1px;font-size:16.23px;color:#f4f4f4"><span class="sx" style="transform:scaleX(0.690)">Y</span></div>
<div class="t" style="left:94.6px;top:80.1px;font-size:16.23px;color:#f4f4f4"><span class="sx" style="transform:scaleX(0.700)">384.39</span></div>
<div class="t" style="left:137.1px;top:80.1px;font-size:16.23px;color:#f4f4f4"><span class="sx" style="transform:scaleX(0.700)">302.83</span></div>
<div class="t" style="left:181.2px;top:80.1px;font-size:16.23px;color:#f4f4f4"><span class="sx" style="transform:scaleX(0.700)">243.66</span></div>
<div class="t" style="left:224.8px;top:80.1px;font-size:16.23px;color:#f4f4f4"><span class="sx" style="transform:scaleX(0.700)">187.61</span></div>
<div class="t" style="left:268.6px;top:80.1px;font-size:16.23px;color:#f4f4f4"><span class="sx" style="transform:scaleX(0.700)">130.46</span></div>
<div class="t" style="left:312.4px;top:80.1px;font-size:16.23px;color:#f4f4f4"><span class="sx" style="transform:scaleX(0.700)">0.32</span></div>
<div class="t" style="left:348.3px;top:80.1px;font-size:16.23px;color:#f4f4f4"><span class="sx" style="transform:scaleX(0.700)">37.23</span></div>
<div class="t" style="left:400.6px;top:80.1px;font-size:16.23px;color:#f4f4f4"><span class="sx" style="transform:scaleX(0.700)">132.84</span></div>
<div class="t" style="left:453.2px;top:80.1px;font-size:16.23px;color:#f4f4f4"><span class="sx" style="transform:scaleX(0.700)">70.58</span></div>
<div class="t" style="left:500.5px;top:80.1px;font-size:16.23px;color:#111"><span class="sx" style="transform:scaleX(0.700)">49.06</span></div>
<div class="t" style="left:541.5px;top:80.1px;font-size:16.23px;color:#f4f4f4"><span class="sx" style="transform:scaleX(0.700)">88.16</span></div>
<div class="t" style="left:605.2px;top:80.1px;font-size:16.23px;color:#f4f4f4"><span class="sx" style="transform:scaleX(0.700)">160.53</span></div>
<div class="t" style="left:673.8px;top:80.1px;font-size:16.23px;color:#f4f4f4"><span class="sx" style="transform:scaleX(0.700)">107.20</span></div>
<div class="t" style="left:716.3px;top:80.1px;font-size:16.23px;color:#f4f4f4"><span class="sx" style="transform:scaleX(0.700)">43.29</span></div>
<div class="t" style="left:787.2px;top:80.1px;font-size:16.23px;color:#f4f4f4"><span class="sx" style="transform:scaleX(0.700)">69.43</span></div>
<div class="t" style="left:863.4px;top:80.1px;font-size:16.23px;color:#f4f4f4"><span class="sx" style="transform:scaleX(0.700)">22.04</span></div>
<div class="t" style="left:901.4px;top:80.1px;font-size:16.23px;color:#f4f4f4"><span class="sx" style="transform:scaleX(0.700)">164.13</span></div>
<div class="t" style="left:971.8px;top:80.1px;font-size:16.23px;color:#f4f4f4"><span class="sx" style="transform:scaleX(0.700)">162.26</span></div>
<div class="t" style="left:1048.1px;top:80.1px;font-size:16.23px;color:#f4f4f4"><span class="sx" style="transform:scaleX(0.700)">21.86</span></div>
<div class="t" style="left:1084.3px;top:80.1px;font-size:16.23px;color:#f4f4f4"><span class="sx" style="transform:scaleX(0.700)">87.84</span></div>
<div class="t" style="left:1120.1px;top:80.1px;font-size:16.23px;color:#f4f4f4"><span class="sx" style="transform:scaleX(0.700)">42.31</span></div>
<div class="t" style="left:1156.2px;top:80.1px;font-size:16.23px;color:#f4f4f4"><span class="sx" style="transform:scaleX(0.700)">225.94</span></div>
<div class="t" style="left:1198.5px;top:80.1px;font-size:16.23px;color:#f4f4f4"><span class="sx" style="transform:scaleX(0.700)">69.79</span></div>
<div class="t" style="left:1248.4px;top:80.1px;font-size:16.23px;color:#f4f4f4"><span class="sx" style="transform:scaleX(0.700)">73.26</span></div>
<div class="t" style="left:1284.0px;top:80.1px;font-size:16.23px;color:#f4f4f4"><span class="sx" style="transform:scaleX(0.700)">80.03</span></div>
<div class="t" style="left:1338.8px;top:80.1px;font-size:16.23px;color:#f4f4f4"><span class="sx" style="transform:scaleX(0.700)">281.64</span></div>
<div class="t" style="left:1405.5px;top:80.1px;font-size:16.23px;color:#f4f4f4"><span class="sx" style="transform:scaleX(0.700)">25.58</span></div>
<div class="t" style="left:13.0px;top:104.7px;font-size:16.23px;color:#f4f4f4"><span class="sx" style="transform:scaleX(0.690)">Target x:CIE31</span></div>
<div class="t" style="left:94.6px;top:104.7px;font-size:16.23px;color:#f4f4f4"><span class="sx" style="transform:scaleX(0.700)">0.31</span></div>
<div class="t" style="left:137.1px;top:104.7px;font-size:16.23px;color:#f4f4f4"><span class="sx" style="transform:scaleX(0.700)">0.31</span></div>
<div class="t" style="left:181.2px;top:104.7px;font-size:16.23px;color:#f4f4f4"><span class="sx" style="transform:scaleX(0.700)">0.31</span></div>
<div class="t" style="left:224.8px;top:104.7px;font-size:16.23px;color:#f4f4f4"><span class="sx" style="transform:scaleX(0.700)">0.31</span></div>
<div class="t" style="left:268.6px;top:104.7px;font-size:16.23px;color:#f4f4f4"><span class="sx" style="transform:scaleX(0.700)">0.31</span></div>
<div class="t" style="left:312.4px;top:104.7px;font-size:16.23px;color:#f4f4f4"><span class="sx" style="transform:scaleX(0.700)">0.31</span></div>
<div class="t" style="left:348.3px;top:104.7px;font-size:16.23px;color:#f4f4f4"><span class="sx" style="transform:scaleX(0.700)">0.40</span></div>
<div class="t" style="left:400.6px;top:104.7px;font-size:16.23px;color:#f4f4f4"><span class="sx" style="transform:scaleX(0.700)">0.38</span></div>
<div class="t" style="left:453.2px;top:104.7px;font-size:16.23px;color:#f4f4f4"><span class="sx" style="transform:scaleX(0.700)">0.25</span></div>
<div class="t" style="left:500.5px;top:104.7px;font-size:16.23px;color:#f4f4f4"><span class="sx" style="transform:scaleX(0.700)">0.34</span></div>
<div class="t" style="left:541.5px;top:104.7px;font-size:16.23px;color:#f4f4f4"><span class="sx" style="transform:scaleX(0.700)">0.27</span></div>
<div class="t" style="left:605.2px;top:104.7px;font-size:16.23px;color:#f4f4f4"><span class="sx" style="transform:scaleX(0.700)">0.26</span></div>
<div class="t" style="left:673.8px;top:104.7px;font-size:16.23px;color:#f4f4f4"><span class="sx" style="transform:scaleX(0.700)">0.51</span></div>
<div class="t" style="left:716.3px;top:104.7px;font-size:16.23px;color:#f4f4f4"><span class="sx" style="transform:scaleX(0.700)">0.22</span></div>
<div class="t" style="left:787.2px;top:104.7px;font-size:16.23px;color:#f4f4f4"><span class="sx" style="transform:scaleX(0.700)">0.46</span></div>
<div class="t" style="left:863.4px;top:104.7px;font-size:16.23px;color:#f4f4f4"><span class="sx" style="transform:scaleX(0.700)">0.29</span></div>
<div class="t" style="left:901.4px;top:104.7px;font-size:16.23px;color:#f4f4f4"><span class="sx" style="transform:scaleX(0.700)">0.38</span></div>
<div class="t" style="left:971.8px;top:104.7px;font-size:16.23px;color:#f4f4f4"><span class="sx" style="transform:scaleX(0.700)">0.47</span></div>
<div class="t" style="left:1048.1px;top:104.7px;font-size:16.23px;color:#f4f4f4"><span class="sx" style="transform:scaleX(0.700)">0.19</span></div>
<div class="t" style="left:1084.3px;top:104.7px;font-size:16.23px;color:#f4f4f4"><span class="sx" style="transform:scaleX(0.700)">0.31</span></div>
<div class="t" style="left:1120.1px;top:104.7px;font-size:16.23px;color:#f4f4f4"><span class="sx" style="transform:scaleX(0.700)">0.54</span></div>
<div class="t" style="left:1156.2px;top:104.7px;font-size:16.23px;color:#f4f4f4"><span class="sx" style="transform:scaleX(0.700)">0.45</span></div>
<div class="t" style="left:1198.5px;top:104.7px;font-size:16.23px;color:#f4f4f4"><span class="sx" style="transform:scaleX(0.700)">0.37</span></div>
<div class="t" style="left:1248.4px;top:104.7px;font-size:16.23px;color:#f4f4f4"><span class="sx" style="transform:scaleX(0.700)">0.21</span></div>
<div class="t" style="left:1284.0px;top:104.7px;font-size:16.23px;color:#f4f4f4"><span class="sx" style="transform:scaleX(0.700)">0.64</span></div>
<div class="t" style="left:1338.8px;top:104.7px;font-size:16.23px;color:#f4f4f4"><span class="sx" style="transform:scaleX(0.700)">0.30</span></div>
<div class="t" style="left:1405.5px;top:104.7px;font-size:16.23px;color:#f4f4f4"><span class="sx" style="transform:scaleX(0.700)">0.15</span></div>
<div class="t" style="left:13.0px;top:129.3px;font-size:16.23px;color:#f4f4f4"><span class="sx" style="transform:scaleX(0.690)">Target y:CIE31</span></div>
<div class="t" style="left:94.6px;top:129.3px;font-size:16.23px;color:#f4f4f4"><span class="sx" style="transform:scaleX(0.700)">0.33</span></div>
<div class="t" style="left:137.1px;top:129.3px;font-size:16.23px;color:#f4f4f4"><span class="sx" style="transform:scaleX(0.700)">0.33</span></div>
<div class="t" style="left:181.2px;top:129.3px;font-size:16.23px;color:#f4f4f4"><span class="sx" style="transform:scaleX(0.700)">0.33</span></div>
<div class="t" style="left:224.8px;top:129.3px;font-size:16.23px;color:#f4f4f4"><span class="sx" style="transform:scaleX(0.700)">0.33</span></div>
<div class="t" style="left:268.6px;top:129.3px;font-size:16.23px;color:#f4f4f4"><span class="sx" style="transform:scaleX(0.700)">0.33</span></div>
<div class="t" style="left:312.4px;top:129.3px;font-size:16.23px;color:#f4f4f4"><span class="sx" style="transform:scaleX(0.700)">0.33</span></div>
<div class="t" style="left:348.3px;top:129.3px;font-size:16.23px;color:#f4f4f4"><span class="sx" style="transform:scaleX(0.700)">0.36</span></div>
<div class="t" style="left:400.6px;top:129.3px;font-size:16.23px;color:#f4f4f4"><span class="sx" style="transform:scaleX(0.700)">0.36</span></div>
<div class="t" style="left:453.2px;top:129.3px;font-size:16.23px;color:#f4f4f4"><span class="sx" style="transform:scaleX(0.700)">0.27</span></div>
<div class="t" style="left:500.5px;top:129.3px;font-size:16.23px;color:#f4f4f4"><span class="sx" style="transform:scaleX(0.700)">0.43</span></div>
<div class="t" style="left:541.5px;top:129.3px;font-size:16.23px;color:#f4f4f4"><span class="sx" style="transform:scaleX(0.700)">0.25</span></div>
<div class="t" style="left:605.2px;top:129.3px;font-size:16.23px;color:#f4f4f4"><span class="sx" style="transform:scaleX(0.700)">0.36</span></div>
<div class="t" style="left:673.8px;top:129.3px;font-size:16.23px;color:#f4f4f4"><span class="sx" style="transform:scaleX(0.700)">0.41</span></div>
<div class="t" style="left:716.3px;top:129.3px;font-size:16.23px;color:#f4f4f4"><span class="sx" style="transform:scaleX(0.700)">0.19</span></div>
<div class="t" style="left:787.2px;top:129.3px;font-size:16.23px;color:#f4f4f4"><span class="sx" style="transform:scaleX(0.700)">0.31</span></div>
<div class="t" style="left:863.4px;top:129.3px;font-size:16.23px;color:#f4f4f4"><span class="sx" style="transform:scaleX(0.700)">0.22</span></div>
<div class="t" style="left:901.4px;top:129.3px;font-size:16.23px;color:#f4f4f4"><span class="sx" style="transform:scaleX(0.700)">0.49</span></div>
<div class="t" style="left:971.8px;top:129.3px;font-size:16.23px;color:#f4f4f4"><span class="sx" style="transform:scaleX(0.700)">0.44</span></div>
<div class="t" style="left:1048.1px;top:129.3px;font-size:16.23px;color:#f4f4f4"><span class="sx" style="transform:scaleX(0.700)">0.14</span></div>
<div class="t" style="left:1084.3px;top:129.3px;font-size:16.23px;color:#f4f4f4"><span class="sx" style="transform:scaleX(0.700)">0.49</span></div>
<div class="t" style="left:1120.1px;top:129.3px;font-size:16.23px;color:#f4f4f4"><span class="sx" style="transform:scaleX(0.700)">0.32</span></div>
<div class="t" style="left:1156.2px;top:129.3px;font-size:16.23px;color:#f4f4f4"><span class="sx" style="transform:scaleX(0.700)">0.47</span></div>
<div class="t" style="left:1198.5px;top:129.3px;font-size:16.23px;color:#f4f4f4"><span class="sx" style="transform:scaleX(0.700)">0.25</span></div>
<div class="t" style="left:1248.4px;top:129.3px;font-size:16.23px;color:#f4f4f4"><span class="sx" style="transform:scaleX(0.700)">0.27</span></div>
<div class="t" style="left:1284.0px;top:129.3px;font-size:16.23px;color:#f4f4f4"><span class="sx" style="transform:scaleX(0.700)">0.33</span></div>
<div class="t" style="left:1338.8px;top:129.3px;font-size:16.23px;color:#f4f4f4"><span class="sx" style="transform:scaleX(0.700)">0.60</span></div>
<div class="t" style="left:1405.5px;top:129.3px;font-size:16.23px;color:#f4f4f4"><span class="sx" style="transform:scaleX(0.700)">0.06</span></div>
<div class="t" style="left:13.0px;top:153.9px;font-size:16.23px;color:#f4f4f4"><span class="sx" style="transform:scaleX(0.690)">Target Y</span></div>
<div class="t" style="left:94.6px;top:153.9px;font-size:16.23px;color:#f4f4f4"><span class="sx" style="transform:scaleX(0.700)">384.39</span></div>
<div class="t" style="left:137.1px;top:153.9px;font-size:16.23px;color:#f4f4f4"><span class="sx" style="transform:scaleX(0.700)">304.17</span></div>
<div class="t" style="left:181.2px;top:153.9px;font-size:16.23px;color:#f4f4f4"><span class="sx" style="transform:scaleX(0.700)">245.09</span></div>
<div class="t" style="left:224.8px;top:153.9px;font-size:16.23px;color:#f4f4f4"><span class="sx" style="transform:scaleX(0.700)">188.74</span></div>
<div class="t" style="left:268.6px;top:153.9px;font-size:16.23px;color:#f4f4f4"><span class="sx" style="transform:scaleX(0.700)">131.43</span></div>
<div class="t" style="left:312.4px;top:153.9px;font-size:16.23px;color:#f4f4f4"><span class="sx" style="transform:scaleX(0.700)">0.00</span></div>
<div class="t" style="left:348.3px;top:153.9px;font-size:16.23px;color:#f4f4f4"><span class="sx" style="transform:scaleX(0.700)">38.72</span></div>
<div class="t" style="left:400.6px;top:153.9px;font-size:16.23px;color:#f4f4f4"><span class="sx" style="transform:scaleX(0.700)">134.13</span></div>
<div class="t" style="left:453.2px;top:153.9px;font-size:16.23px;color:#f4f4f4"><span class="sx" style="transform:scaleX(0.700)">71.87</span></div>
<div class="t" style="left:500.5px;top:153.9px;font-size:16.23px;color:#f4f4f4"><span class="sx" style="transform:scaleX(0.700)">50.10</span></div>
<div class="t" style="left:541.5px;top:153.9px;font-size:16.23px;color:#f4f4f4"><span class="sx" style="transform:scaleX(0.700)">89.63</span></div>
<div class="t" style="left:605.2px;top:153.9px;font-size:16.23px;color:#f4f4f4"><span class="sx" style="transform:scaleX(0.700)">160.96</span></div>
<div class="t" style="left:673.8px;top:153.9px;font-size:16.23px;color:#f4f4f4"><span class="sx" style="transform:scaleX(0.700)">108.97</span></div>
<div class="t" style="left:716.3px;top:153.9px;font-size:16.23px;color:#f4f4f4"><span class="sx" style="transform:scaleX(0.700)">45.18</span></div>
<div class="t" style="left:787.2px;top:153.9px;font-size:16.23px;color:#f4f4f4"><span class="sx" style="transform:scaleX(0.700)">71.79</span></div>
<div class="t" style="left:863.4px;top:153.9px;font-size:16.23px;color:#f4f4f4"><span class="sx" style="transform:scaleX(0.700)">25.66</span></div>
<div class="t" style="left:901.4px;top:153.9px;font-size:16.23px;color:#f4f4f4"><span class="sx" style="transform:scaleX(0.700)">164.35</span></div>
<div class="t" style="left:971.8px;top:153.9px;font-size:16.23px;color:#f4f4f4"><span class="sx" style="transform:scaleX(0.700)">163.42</span></div>
<div class="t" style="left:1048.1px;top:153.9px;font-size:16.23px;color:#f4f4f4"><span class="sx" style="transform:scaleX(0.700)">24.00</span></div>
<div class="t" style="left:1084.3px;top:153.9px;font-size:16.23px;color:#f4f4f4"><span class="sx" style="transform:scaleX(0.700)">88.31</span></div>
<div class="t" style="left:1120.1px;top:153.9px;font-size:16.23px;color:#f4f4f4"><span class="sx" style="transform:scaleX(0.700)">44.83</span></div>
<div class="t" style="left:1156.2px;top:153.9px;font-size:16.23px;color:#f4f4f4"><span class="sx" style="transform:scaleX(0.700)">226.65</span></div>
<div class="t" style="left:1198.5px;top:153.9px;font-size:16.23px;color:#f4f4f4"><span class="sx" style="transform:scaleX(0.700)">72.37</span></div>
<div class="t" style="left:1248.4px;top:153.9px;font-size:16.23px;color:#f4f4f4"><span class="sx" style="transform:scaleX(0.700)">74.64</span></div>
<div class="t" style="left:1284.0px;top:153.9px;font-size:16.23px;color:#f4f4f4"><span class="sx" style="transform:scaleX(0.700)">81.74</span></div>
<div class="t" style="left:1338.8px;top:153.9px;font-size:16.23px;color:#f4f4f4"><span class="sx" style="transform:scaleX(0.700)">274.90</span></div>
<div class="t" style="left:1405.5px;top:153.9px;font-size:16.23px;color:#f4f4f4"><span class="sx" style="transform:scaleX(0.700)">27.74</span></div>
<div class="t" style="left:13.0px;top:178.5px;font-size:16.23px;color:#f4f4f4"><span class="sx" style="transform:scaleX(0.690)">ΔE 2000</span></div>
<div class="t" style="left:94.6px;top:178.5px;font-size:16.23px;color:#f4f4f4"><span class="sx" style="transform:scaleX(0.700)">2.22</span></div>
<div class="t" style="left:137.1px;top:178.5px;font-size:16.23px;color:#f4f4f4"><span class="sx" style="transform:scaleX(0.700)">1.70</span></div>
<div class="t" style="left:181.2px;top:178.5px;font-size:16.23px;color:#f4f4f4"><span class="sx" style="transform:scaleX(0.700)">1.59</span></div>
<div class="t" style="left:224.8px;top:178.5px;font-size:16.23px;color:#f4f4f4"><span class="sx" style="transform:scaleX(0.700)">1.48</span></div>
<div class="t" style="left:268.6px;top:178.5px;font-size:16.23px;color:#f4f4f4"><span class="sx" style="transform:scaleX(0.700)">1.38</span></div>
<div class="t" style="left:312.4px;top:178.5px;font-size:16.23px;color:#f4f4f4"><span class="sx" style="transform:scaleX(0.700)">0.78</span></div>
<div class="t" style="left:348.3px;top:178.5px;font-size:16.23px;color:#f4f4f4"><span class="sx" style="transform:scaleX(0.700)">0.71</span></div>
<div class="t" style="left:400.6px;top:178.5px;font-size:16.23px;color:#f4f4f4"><span class="sx" style="transform:scaleX(0.700)">0.61</span></div>
<div class="t" style="left:453.2px;top:178.5px;font-size:16.23px;color:#f4f4f4"><span class="sx" style="transform:scaleX(0.700)">1.08</span></div>
<div class="t" style="left:500.5px;top:178.5px;font-size:16.23px;color:#f4f4f4"><span class="sx" style="transform:scaleX(0.700)">0.76</span></div>
<div class="t" style="left:541.5px;top:178.5px;font-size:16.23px;color:#f4f4f4"><span class="sx" style="transform:scaleX(0.700)">1.00</span></div>
<div class="t" style="left:605.2px;top:178.5px;font-size:16.23px;color:#f4f4f4"><span class="sx" style="transform:scaleX(0.700)">0.62</span></div>
<div class="t" style="left:673.8px;top:178.5px;font-size:16.23px;color:#f4f4f4"><span class="sx" style="transform:scaleX(0.700)">1.21</span></div>
<div class="t" style="left:716.3px;top:178.5px;font-size:16.23px;color:#f4f4f4"><span class="sx" style="transform:scaleX(0.700)">1.12</span></div>
<div class="t" style="left:787.2px;top:178.5px;font-size:16.23px;color:#f4f4f4"><span class="sx" style="transform:scaleX(0.700)">0.75</span></div>
<div class="t" style="left:863.4px;top:178.5px;font-size:16.23px;color:#f4f4f4"><span class="sx" style="transform:scaleX(0.700)">3.57</span></div>
<div class="t" style="left:901.4px;top:178.5px;font-size:16.23px;color:#f4f4f4"><span class="sx" style="transform:scaleX(0.700)">0.48</span></div>
<div class="t" style="left:971.8px;top:178.5px;font-size:16.23px;color:#f4f4f4"><span class="sx" style="transform:scaleX(0.700)">0.95</span></div>
<div class="t" style="left:1048.1px;top:178.5px;font-size:16.23px;color:#f4f4f4"><span class="sx" style="transform:scaleX(0.700)">1.29</span></div>
<div class="t" style="left:1084.3px;top:178.5px;font-size:16.23px;color:#f4f4f4"><span class="sx" style="transform:scaleX(0.700)">0.50</span></div>
<div class="t" style="left:1120.1px;top:178.5px;font-size:16.23px;color:#f4f4f4"><span class="sx" style="transform:scaleX(0.700)">1.10</span></div>
<div class="t" style="left:1156.2px;top:178.5px;font-size:16.23px;color:#f4f4f4"><span class="sx" style="transform:scaleX(0.700)">0.68</span></div>
<div class="t" style="left:1198.5px;top:178.5px;font-size:16.23px;color:#f4f4f4"><span class="sx" style="transform:scaleX(0.700)">0.92</span></div>
<div class="t" style="left:1248.4px;top:178.5px;font-size:16.23px;color:#f4f4f4"><span class="sx" style="transform:scaleX(0.700)">0.60</span></div>
<div class="t" style="left:1284.0px;top:178.5px;font-size:16.23px;color:#f4f4f4"><span class="sx" style="transform:scaleX(0.700)">1.97</span></div>
<div class="t" style="left:1338.8px;top:178.5px;font-size:16.23px;color:#f4f4f4"><span class="sx" style="transform:scaleX(0.700)">0.69</span></div>
<div class="t" style="left:1405.5px;top:178.5px;font-size:16.23px;color:#f4f4f4"><span class="sx" style="transform:scaleX(0.700)">1.43</span></div>
<div class="t" style="left:13.0px;top:203.1px;font-size:16.23px;color:#f4f4f4"><span class="sx" style="transform:scaleX(0.690)">dEITP</span></div>
<div class="t" style="left:94.6px;top:203.1px;font-size:16.23px;color:#f4f4f4"><span class="sx" style="transform:scaleX(0.700)">2.61</span></div>
<div class="t" style="left:137.1px;top:203.1px;font-size:16.23px;color:#f4f4f4"><span class="sx" style="transform:scaleX(0.700)">1.98</span></div>
<div class="t" style="left:181.2px;top:203.1px;font-size:16.23px;color:#f4f4f4"><span class="sx" style="transform:scaleX(0.700)">1.89</span></div>
<div class="t" style="left:224.8px;top:203.1px;font-size:16.23px;color:#f4f4f4"><span class="sx" style="transform:scaleX(0.700)">1.82</span></div>
<div class="t" style="left:268.6px;top:203.1px;font-size:16.23px;color:#f4f4f4"><span class="sx" style="transform:scaleX(0.700)">1.81</span></div>
<div class="t" style="left:312.4px;top:203.1px;font-size:16.23px;color:#f4f4f4"><span class="sx" style="transform:scaleX(0.700)">72.77</span></div>
<div class="t" style="left:348.3px;top:203.1px;font-size:16.23px;color:#f4f4f4"><span class="sx" style="transform:scaleX(0.700)">2.81</span></div>
<div class="t" style="left:400.6px;top:203.1px;font-size:16.23px;color:#f4f4f4"><span class="sx" style="transform:scaleX(0.700)">1.38</span></div>
<div class="t" style="left:453.2px;top:203.1px;font-size:16.23px;color:#f4f4f4"><span class="sx" style="transform:scaleX(0.700)">3.00</span></div>
<div class="t" style="left:500.5px;top:203.1px;font-size:16.23px;color:#f4f4f4"><span class="sx" style="transform:scaleX(0.700)">2.47</span></div>
<div class="t" style="left:541.5px;top:203.1px;font-size:16.23px;color:#f4f4f4"><span class="sx" style="transform:scaleX(0.700)">2.67</span></div>
<div class="t" style="left:605.2px;top:203.1px;font-size:16.23px;color:#f4f4f4"><span class="sx" style="transform:scaleX(0.700)">1.95</span></div>
<div class="t" style="left:673.8px;top:203.1px;font-size:16.23px;color:#f4f4f4"><span class="sx" style="transform:scaleX(0.700)">4.62</span></div>
<div class="t" style="left:716.3px;top:203.1px;font-size:16.23px;color:#f4f4f4"><span class="sx" style="transform:scaleX(0.700)">5.20</span></div>
<div class="t" style="left:787.2px;top:203.1px;font-size:16.23px;color:#f4f4f4"><span class="sx" style="transform:scaleX(0.700)">3.10</span></div>
<div class="t" style="left:863.4px;top:203.1px;font-size:16.23px;color:#f4f4f4"><span class="sx" style="transform:scaleX(0.700)">17.31</span></div>
<div class="t" style="left:901.4px;top:203.1px;font-size:16.23px;color:#f4f4f4"><span class="sx" style="transform:scaleX(0.700)">1.78</span></div>
<div class="t" style="left:971.8px;top:203.1px;font-size:16.23px;color:#f4f4f4"><span class="sx" style="transform:scaleX(0.700)">3.43</span></div>
<div class="t" style="left:1048.1px;top:203.1px;font-size:16.23px;color:#f4f4f4"><span class="sx" style="transform:scaleX(0.700)">9.17</span></div>
<div class="t" style="left:1084.3px;top:203.1px;font-size:16.23px;color:#f4f4f4"><span class="sx" style="transform:scaleX(0.700)">1.94</span></div>
<div class="t" style="left:1120.1px;top:203.1px;font-size:16.23px;color:#f4f4f4"><span class="sx" style="transform:scaleX(0.700)">7.98</span></div>
<div class="t" style="left:1156.2px;top:203.1px;font-size:16.23px;color:#f4f4f4"><span class="sx" style="transform:scaleX(0.700)">2.95</span></div>
<div class="t" style="left:1198.5px;top:203.1px;font-size:16.23px;color:#f4f4f4"><span class="sx" style="transform:scaleX(0.700)">3.07</span></div>
<div class="t" style="left:1248.4px;top:203.1px;font-size:16.23px;color:#f4f4f4"><span class="sx" style="transform:scaleX(0.700)">2.81</span></div>
<div class="t" style="left:1284.0px;top:203.1px;font-size:16.23px;color:#f4f4f4"><span class="sx" style="transform:scaleX(0.700)">9.45</span></div>
<div class="t" style="left:1338.8px;top:203.1px;font-size:16.23px;color:#f4f4f4"><span class="sx" style="transform:scaleX(0.700)">2.32</span></div>
<div class="t" style="left:1405.5px;top:203.1px;font-size:16.23px;color:#f4f4f4"><span class="sx" style="transform:scaleX(0.700)">15.60</span></div>
</div>
<div class="a" style="left:150px;top:1047px;width:1528px;height:11px;background:#2c2c2c"></div>
<div class="a" style="left:150px;top:1049px;width:1528px;height:9px;background:#4a4a4a"></div>
<div class="a" style="left:152px;top:1050px;width:1262px;height:8px;background:#3a3a3a;border-radius:4px"></div>
<div class="a" style="left:150px;top:1011px;width:1528px;height:37px;overflow:hidden">
<div class="a" style="left:1.2px;top:0.5px;width:36.5px;height:36px;border-radius:3px 3px 0 0;background:linear-gradient(#8e8e8e,#7a7a7a 40%,#6a6a6a 80%,#5e5e5e);box-shadow:1px 0 0 #3a3a3a"></div><div class="a" style="left:5.2px;top:4.5px;width:29px;height:17.5px;border-radius:2.5px;background:#ffffff;box-shadow:inset 0 0 1px rgba(0,0,0,.4)"></div>
<div class="a" style="left:40.2px;top:0.5px;width:36.5px;height:36px;border-radius:3px 3px 0 0;background:linear-gradient(#8e8e8e,#7a7a7a 40%,#6a6a6a 80%,#5e5e5e);box-shadow:1px 0 0 #3a3a3a"></div><div class="a" style="left:44.2px;top:4.5px;width:29px;height:17.5px;border-radius:2.5px;background:#e6e6e6;box-shadow:inset 0 0 1px rgba(0,0,0,.4)"></div>
<div class="a" style="left:79.2px;top:0.5px;width:36.5px;height:36px;border-radius:3px 3px 0 0;background:linear-gradient(#8e8e8e,#7a7a7a 40%,#6a6a6a 80%,#5e5e5e);box-shadow:1px 0 0 #3a3a3a"></div><div class="a" style="left:83.2px;top:4.5px;width:29px;height:17.5px;border-radius:2.5px;background:#d0d0d0;box-shadow:inset 0 0 1px rgba(0,0,0,.4)"></div>
<div class="a" style="left:118.2px;top:0.5px;width:36.5px;height:36px;border-radius:3px 3px 0 0;background:linear-gradient(#8e8e8e,#7a7a7a 40%,#6a6a6a 80%,#5e5e5e);box-shadow:1px 0 0 #3a3a3a"></div><div class="a" style="left:122.2px;top:4.5px;width:29px;height:17.5px;border-radius:2.5px;background:#b8b8b8;box-shadow:inset 0 0 1px rgba(0,0,0,.4)"></div>
<div class="a" style="left:157.1px;top:0.5px;width:36.5px;height:36px;border-radius:3px 3px 0 0;background:linear-gradient(#8e8e8e,#7a7a7a 40%,#6a6a6a 80%,#5e5e5e);box-shadow:1px 0 0 #3a3a3a"></div><div class="a" style="left:161.1px;top:4.5px;width:29px;height:17.5px;border-radius:2.5px;background:#a0a0a0;box-shadow:inset 0 0 1px rgba(0,0,0,.4)"></div>
<div class="a" style="left:196.1px;top:0.5px;width:36.5px;height:36px;border-radius:3px 3px 0 0;background:linear-gradient(#8e8e8e,#7a7a7a 40%,#6a6a6a 80%,#5e5e5e);box-shadow:1px 0 0 #3a3a3a"></div><div class="a" style="left:200.1px;top:4.5px;width:29px;height:17.5px;border-radius:2.5px;background:#000000;box-shadow:inset 0 0 1px rgba(0,0,0,.4)"></div>
<div class="a" style="left:235.1px;top:0.5px;width:36.5px;height:36px;border-radius:3px 3px 0 0;background:linear-gradient(#8e8e8e,#7a7a7a 40%,#6a6a6a 80%,#5e5e5e);box-shadow:1px 0 0 #3a3a3a"></div><div class="a" style="left:239.1px;top:4.5px;width:29px;height:17.5px;border-radius:2.5px;background:#735244;box-shadow:inset 0 0 1px rgba(0,0,0,.4)"></div>
<div class="a" style="left:274.0px;top:0.5px;width:36.5px;height:36px;border-radius:3px 3px 0 0;background:linear-gradient(#8e8e8e,#7a7a7a 40%,#6a6a6a 80%,#5e5e5e);box-shadow:1px 0 0 #3a3a3a"></div><div class="a" style="left:278.0px;top:4.5px;width:29px;height:17.5px;border-radius:2.5px;background:#c29682;box-shadow:inset 0 0 1px rgba(0,0,0,.4)"></div>
<div class="a" style="left:313.0px;top:0.5px;width:36.5px;height:36px;border-radius:3px 3px 0 0;background:linear-gradient(#8e8e8e,#7a7a7a 40%,#6a6a6a 80%,#5e5e5e);box-shadow:1px 0 0 #3a3a3a"></div><div class="a" style="left:317.0px;top:4.5px;width:29px;height:17.5px;border-radius:2.5px;background:#627a9d;box-shadow:inset 0 0 1px rgba(0,0,0,.4)"></div>
<div class="a" style="left:352.0px;top:0.5px;width:36.5px;height:36px;border-radius:3px 3px 0 0;background:linear-gradient(#8e8e8e,#7a7a7a 40%,#6a6a6a 80%,#5e5e5e);box-shadow:1px 0 0 #3a3a3a"></div><div class="a" style="left:356.0px;top:4.5px;width:29px;height:17.5px;border-radius:2.5px;background:#576c43;box-shadow:inset 0 0 1px rgba(0,0,0,.4)"></div>
<div class="a" style="left:390.9px;top:0.5px;width:36.5px;height:36px;border-radius:3px 3px 0 0;background:linear-gradient(#8e8e8e,#7a7a7a 40%,#6a6a6a 80%,#5e5e5e);box-shadow:1px 0 0 #3a3a3a"></div><div class="a" style="left:394.9px;top:4px;width:29px;height:8.5px;border-radius:2px;background:#8580b1;box-shadow:inset 0 0 1px rgba(0,0,0,.4)"></div>
<div class="a" style="left:429.9px;top:0.5px;width:36.5px;height:36px;border-radius:3px 3px 0 0;background:linear-gradient(#8e8e8e,#7a7a7a 40%,#6a6a6a 80%,#5e5e5e);box-shadow:1px 0 0 #3a3a3a"></div><div class="a" style="left:433.9px;top:4px;width:29px;height:8.5px;border-radius:2px;background:#67bdaa;box-shadow:inset 0 0 1px rgba(0,0,0,.4)"></div>
<div class="a" style="left:468.9px;top:0.5px;width:36.5px;height:36px;border-radius:3px 3px 0 0;background:linear-gradient(#8e8e8e,#7a7a7a 40%,#6a6a6a 80%,#5e5e5e);box-shadow:1px 0 0 #3a3a3a"></div><div class="a" style="left:472.9px;top:4.5px;width:29px;height:17.5px;border-radius:2.5px;background:#d67e2c;box-shadow:inset 0 0 1px rgba(0,0,0,.4)"></div>
<div class="a" style="left:507.9px;top:0.5px;width:36.5px;height:36px;border-radius:3px 3px 0 0;background:linear-gradient(#8e8e8e,#7a7a7a 40%,#6a6a6a 80%,#5e5e5e);box-shadow:1px 0 0 #3a3a3a"></div><div class="a" style="left:511.9px;top:4px;width:29px;height:8.5px;border-radius:2px;background:#505ba6;box-shadow:inset 0 0 1px rgba(0,0,0,.4)"></div>
<div class="a" style="left:546.8px;top:0.5px;width:36.5px;height:36px;border-radius:3px 3px 0 0;background:linear-gradient(#8e8e8e,#7a7a7a 40%,#6a6a6a 80%,#5e5e5e);box-shadow:1px 0 0 #3a3a3a"></div><div class="a" style="left:550.8px;top:4px;width:29px;height:8.5px;border-radius:2px;background:#c15a63;box-shadow:inset 0 0 1px rgba(0,0,0,.4)"></div>
<div class="a" style="left:585.8px;top:0.5px;width:36.5px;height:36px;border-radius:3px 3px 0 0;background:linear-gradient(#8e8e8e,#7a7a7a 40%,#6a6a6a 80%,#5e5e5e);box-shadow:1px 0 0 #3a3a3a"></div><div class="a" style="left:589.8px;top:4.5px;width:29px;height:17.5px;border-radius:2.5px;background:#5e3c6c;box-shadow:inset 0 0 1px rgba(0,0,0,.4)"></div>
<div class="a" style="left:624.8px;top:0.5px;width:36.5px;height:36px;border-radius:3px 3px 0 0;background:linear-gradient(#8e8e8e,#7a7a7a 40%,#6a6a6a 80%,#5e5e5e);box-shadow:1px 0 0 #3a3a3a"></div><div class="a" style="left:628.8px;top:4px;width:29px;height:8.5px;border-radius:2px;background:#9dbc40;box-shadow:inset 0 0 1px rgba(0,0,0,.4)"></div>
<div class="a" style="left:663.7px;top:0.5px;width:36.5px;height:36px;border-radius:3px 3px 0 0;background:linear-gradient(#8e8e8e,#7a7a7a 40%,#6a6a6a 80%,#5e5e5e);box-shadow:1px 0 0 #3a3a3a"></div><div class="a" style="left:667.7px;top:4px;width:29px;height:8.5px;border-radius:2px;background:#e0a32e;box-shadow:inset 0 0 1px rgba(0,0,0,.4)"></div>
<div class="a" style="left:702.7px;top:0.5px;width:36.5px;height:36px;border-radius:3px 3px 0 0;background:linear-gradient(#8e8e8e,#7a7a7a 40%,#6a6a6a 80%,#5e5e5e);box-shadow:1px 0 0 #3a3a3a"></div><div class="a" style="left:706.7px;top:4.5px;width:29px;height:17.5px;border-radius:2.5px;background:#383d96;box-shadow:inset 0 0 1px rgba(0,0,0,.4)"></div>
<div class="a" style="left:741.7px;top:0.5px;width:36.5px;height:36px;border-radius:3px 3px 0 0;background:linear-gradient(#8e8e8e,#7a7a7a 40%,#6a6a6a 80%,#5e5e5e);box-shadow:1px 0 0 #3a3a3a"></div><div class="a" style="left:745.7px;top:4.5px;width:29px;height:17.5px;border-radius:2.5px;background:#469449;box-shadow:inset 0 0 1px rgba(0,0,0,.4)"></div>
<div class="a" style="left:780.6px;top:0.5px;width:36.5px;height:36px;border-radius:3px 3px 0 0;background:linear-gradient(#8e8e8e,#7a7a7a 40%,#6a6a6a 80%,#5e5e5e);box-shadow:1px 0 0 #3a3a3a"></div><div class="a" style="left:784.6px;top:4.5px;width:29px;height:17.5px;border-radius:2.5px;background:#af363c;box-shadow:inset 0 0 1px rgba(0,0,0,.4)"></div>
<div class="a" style="left:819.6px;top:0.5px;width:36.5px;height:36px;border-radius:3px 3px 0 0;background:linear-gradient(#8e8e8e,#7a7a7a 40%,#6a6a6a 80%,#5e5e5e);box-shadow:1px 0 0 #3a3a3a"></div><div class="a" style="left:823.6px;top:4.5px;width:29px;height:17.5px;border-radius:2.5px;background:#e7c71f;box-shadow:inset 0 0 1px rgba(0,0,0,.4)"></div>
<div class="a" style="left:858.6px;top:0.5px;width:36.5px;height:36px;border-radius:3px 3px 0 0;background:linear-gradient(#8e8e8e,#7a7a7a 40%,#6a6a6a 80%,#5e5e5e);box-shadow:1px 0 0 #3a3a3a"></div><div class="a" style="left:862.6px;top:4.5px;width:29px;height:17.5px;border-radius:2.5px;background:#bb5695;box-shadow:inset 0 0 1px rgba(0,0,0,.4)"></div>
<div class="a" style="left:897.6px;top:0.5px;width:36.5px;height:36px;border-radius:3px 3px 0 0;background:linear-gradient(#8e8e8e,#7a7a7a 40%,#6a6a6a 80%,#5e5e5e);box-shadow:1px 0 0 #3a3a3a"></div><div class="a" style="left:901.6px;top:4.5px;width:29px;height:17.5px;border-radius:2.5px;background:#0885a1;box-shadow:inset 0 0 1px rgba(0,0,0,.4)"></div>
<div class="a" style="left:936.5px;top:0.5px;width:36.5px;height:36px;border-radius:3px 3px 0 0;background:linear-gradient(#8e8e8e,#7a7a7a 40%,#6a6a6a 80%,#5e5e5e);box-shadow:1px 0 0 #3a3a3a"></div><div class="a" style="left:940.5px;top:4.5px;width:29px;height:17.5px;border-radius:2.5px;background:#ff0000;box-shadow:inset 0 0 1px rgba(0,0,0,.4)"></div>
<div class="a" style="left:975.5px;top:0.5px;width:36.5px;height:36px;border-radius:3px 3px 0 0;background:linear-gradient(#8e8e8e,#7a7a7a 40%,#6a6a6a 80%,#5e5e5e);box-shadow:1px 0 0 #3a3a3a"></div><div class="a" style="left:979.5px;top:4px;width:29px;height:8.5px;border-radius:2px;background:#00ff00;box-shadow:inset 0 0 1px rgba(0,0,0,.4)"></div>
<div class="a" style="left:1014.5px;top:0.5px;width:36.5px;height:36px;border-radius:3px 3px 0 0;background:linear-gradient(#8e8e8e,#7a7a7a 40%,#6a6a6a 80%,#5e5e5e);box-shadow:1px 0 0 #3a3a3a"></div><div class="a" style="left:1018.5px;top:4px;width:29px;height:8.5px;border-radius:2px;background:#0000ff;box-shadow:inset 0 0 1px rgba(0,0,0,.4)"></div>
<div class="a" style="left:1053.4px;top:0.5px;width:36.5px;height:36px;border-radius:3px 3px 0 0;background:linear-gradient(#8e8e8e,#7a7a7a 40%,#6a6a6a 80%,#5e5e5e);box-shadow:1px 0 0 #3a3a3a"></div><div class="a" style="left:1057.4px;top:4px;width:29px;height:8.5px;border-radius:2px;background:#00ffff;box-shadow:inset 0 0 1px rgba(0,0,0,.4)"></div>
<div class="a" style="left:1092.4px;top:0.5px;width:36.5px;height:36px;border-radius:3px 3px 0 0;background:linear-gradient(#8e8e8e,#7a7a7a 40%,#6a6a6a 80%,#5e5e5e);box-shadow:1px 0 0 #3a3a3a"></div><div class="a" style="left:1096.4px;top:4px;width:29px;height:8.5px;border-radius:2px;background:#ff00ff;box-shadow:inset 0 0 1px rgba(0,0,0,.4)"></div>
<div class="a" style="left:1131.4px;top:0.5px;width:36.5px;height:36px;border-radius:3px 3px 0 0;background:linear-gradient(#8e8e8e,#7a7a7a 40%,#6a6a6a 80%,#5e5e5e);box-shadow:1px 0 0 #3a3a3a"></div><div class="a" style="left:1135.4px;top:4px;width:29px;height:8.5px;border-radius:2px;background:#ffff00;box-shadow:inset 0 0 1px rgba(0,0,0,.4)"></div>
<div class="a" style="left:1170.3px;top:0.5px;width:36.5px;height:36px;border-radius:3px 3px 0 0;background:linear-gradient(#8e8e8e,#7a7a7a 40%,#6a6a6a 80%,#5e5e5e);box-shadow:1px 0 0 #3a3a3a"></div><div class="a" style="left:1174.3px;top:4.5px;width:29px;height:17.5px;border-radius:2.5px;background:#7a4a2c;box-shadow:inset 0 0 1px rgba(0,0,0,.4)"></div>
<div class="a" style="left:1209.3px;top:0.5px;width:36.5px;height:36px;border-radius:3px 3px 0 0;background:linear-gradient(#8e8e8e,#7a7a7a 40%,#6a6a6a 80%,#5e5e5e);box-shadow:1px 0 0 #3a3a3a"></div><div class="a" style="left:1213.3px;top:4.5px;width:29px;height:17.5px;border-radius:2.5px;background:#d28a62;box-shadow:inset 0 0 1px rgba(0,0,0,.4)"></div>
<div class="a" style="left:1248.3px;top:0.5px;width:36.5px;height:36px;border-radius:3px 3px 0 0;background:linear-gradient(#8e8e8e,#7a7a7a 40%,#6a6a6a 80%,#5e5e5e);box-shadow:1px 0 0 #3a3a3a"></div><div class="a" style="left:1252.3px;top:4.5px;width:29px;height:17.5px;border-radius:2.5px;background:#ffc898;box-shadow:inset 0 0 1px rgba(0,0,0,.4)"></div>
<div class="a" style="left:1287.3px;top:0.5px;width:36.5px;height:36px;border-radius:3px 3px 0 0;background:linear-gradient(#8e8e8e,#7a7a7a 40%,#6a6a6a 80%,#5e5e5e);box-shadow:1px 0 0 #3a3a3a"></div><div class="a" style="left:1291.3px;top:4.5px;width:29px;height:17.5px;border-radius:2.5px;background:#ffcaa8;box-shadow:inset 0 0 1px rgba(0,0,0,.4)"></div>
<div class="a" style="left:1326.2px;top:0.5px;width:36.5px;height:36px;border-radius:3px 3px 0 0;background:linear-gradient(#8e8e8e,#7a7a7a 40%,#6a6a6a 80%,#5e5e5e);box-shadow:1px 0 0 #3a3a3a"></div><div class="a" style="left:1330.2px;top:4.5px;width:29px;height:17.5px;border-radius:2.5px;background:#f4a272;box-shadow:inset 0 0 1px rgba(0,0,0,.4)"></div>
<div class="a" style="left:1365.2px;top:0.5px;width:36.5px;height:36px;border-radius:3px 3px 0 0;background:linear-gradient(#8e8e8e,#7a7a7a 40%,#6a6a6a 80%,#5e5e5e);box-shadow:1px 0 0 #3a3a3a"></div><div class="a" style="left:1369.2px;top:4.5px;width:29px;height:17.5px;border-radius:2.5px;background:#d8985c;box-shadow:inset 0 0 1px rgba(0,0,0,.4)"></div>
<div class="a" style="left:1404.2px;top:0.5px;width:36.5px;height:36px;border-radius:3px 3px 0 0;background:linear-gradient(#8e8e8e,#7a7a7a 40%,#6a6a6a 80%,#5e5e5e);box-shadow:1px 0 0 #3a3a3a"></div><div class="a" style="left:1408.2px;top:4.5px;width:29px;height:17.5px;border-radius:2.5px;background:#9a5c32;box-shadow:inset 0 0 1px rgba(0,0,0,.4)"></div>
<div class="a" style="left:1443.1px;top:0.5px;width:36.5px;height:36px;border-radius:3px 3px 0 0;background:linear-gradient(#8e8e8e,#7a7a7a 40%,#6a6a6a 80%,#5e5e5e);box-shadow:1px 0 0 #3a3a3a"></div><div class="a" style="left:1447.1px;top:4.5px;width:29px;height:17.5px;border-radius:2.5px;background:#dca07a;box-shadow:inset 0 0 1px rgba(0,0,0,.4)"></div>
<div class="a" style="left:1482.1px;top:0.5px;width:36.5px;height:36px;border-radius:3px 3px 0 0;background:linear-gradient(#8e8e8e,#7a7a7a 40%,#6a6a6a 80%,#5e5e5e);box-shadow:1px 0 0 #3a3a3a"></div><div class="a" style="left:1486.1px;top:4.5px;width:29px;height:17.5px;border-radius:2.5px;background:#c87434;box-shadow:inset 0 0 1px rgba(0,0,0,.4)"></div>
</div>
<div class="t" style="left:159.6px;top:1037.0px;font-size:9.13px;color:#141414;text-shadow:0.25px 0 0 #141414"><span class="sx" style="transform:scaleX(0.850)">White</span></div>
<div class="t" style="left:194.7px;top:1037.0px;font-size:9.13px;color:#141414;text-shadow:0.25px 0 0 #141414"><span class="sx" style="transform:scaleX(0.850)">Gray 80</span></div>
<div class="t" style="left:233.6px;top:1037.0px;font-size:9.13px;color:#141414;text-shadow:0.25px 0 0 #141414"><span class="sx" style="transform:scaleX(0.850)">Gray 65</span></div>
<div class="t" style="left:272.6px;top:1037.0px;font-size:9.13px;color:#141414;text-shadow:0.25px 0 0 #141414"><span class="sx" style="transform:scaleX(0.850)">Gray 50</span></div>
<div class="t" style="left:311.6px;top:1037.0px;font-size:9.13px;color:#141414;text-shadow:0.25px 0 0 #141414"><span class="sx" style="transform:scaleX(0.850)">Gray 35</span></div>
<div class="t" style="left:354.9px;top:1037.0px;font-size:9.13px;color:#141414;text-shadow:0.25px 0 0 #141414"><span class="sx" style="transform:scaleX(0.850)">Black</span></div>
<div class="t" style="left:386.5px;top:1037.0px;font-size:9.13px;color:#141414;text-shadow:0.25px 0 0 #141414"><span class="sx" style="transform:scaleX(0.850)">Dark Skin</span></div>
<div class="t" style="left:425.2px;top:1037.0px;font-size:9.13px;color:#141414;text-shadow:0.25px 0 0 #141414"><span class="sx" style="transform:scaleX(0.850)">Light Skin</span></div>
<div class="t" style="left:465.9px;top:1037.0px;font-size:9.13px;color:#141414;text-shadow:0.25px 0 0 #141414"><span class="sx" style="transform:scaleX(0.850)">Blue Sky</span></div>
<div class="t" style="left:507.5px;top:1037.0px;font-size:9.13px;color:#141414;text-shadow:0.25px 0 0 #141414"><span class="sx" style="transform:scaleX(0.850)">Foliage</span></div>
<div class="t" style="left:551.4px;top:1027.5px;font-size:9.13px;color:#141414;text-shadow:0.25px 0 0 #141414"><span class="sx" style="transform:scaleX(0.850)">Blue</span></div>
<div class="t" style="left:547.6px;top:1036.8px;font-size:9.13px;color:#141414;text-shadow:0.25px 0 0 #141414"><span class="sx" style="transform:scaleX(0.850)">Flower</span></div>
<div class="t" style="left:587.6px;top:1027.5px;font-size:9.13px;color:#141414;text-shadow:0.25px 0 0 #141414"><span class="sx" style="transform:scaleX(0.850)">Bluish</span></div>
<div class="t" style="left:587.4px;top:1036.8px;font-size:9.13px;color:#141414;text-shadow:0.25px 0 0 #141414"><span class="sx" style="transform:scaleX(0.850)">Green</span></div>
<div class="t" style="left:624.2px;top:1037.0px;font-size:9.13px;color:#141414;text-shadow:0.25px 0 0 #141414"><span class="sx" style="transform:scaleX(0.850)">Orange</span></div>
<div class="t" style="left:659.4px;top:1027.5px;font-size:9.13px;color:#141414;text-shadow:0.25px 0 0 #141414"><span class="sx" style="transform:scaleX(0.850)">Purplish</span></div>
<div class="t" style="left:659.4px;top:1036.8px;font-size:9.13px;color:#141414;text-shadow:0.25px 0 0 #141414"><span class="sx" style="transform:scaleX(0.850)">Blue</span></div>
<div class="t" style="left:698.3px;top:1027.5px;font-size:9.13px;color:#141414;text-shadow:0.25px 0 0 #141414"><span class="sx" style="transform:scaleX(0.850)">Moderate</span></div>
<div class="t" style="left:698.3px;top:1036.8px;font-size:9.13px;color:#141414;text-shadow:0.25px 0 0 #141414"><span class="sx" style="transform:scaleX(0.850)">Red</span></div>
<div class="t" style="left:742.8px;top:1037.0px;font-size:9.13px;color:#141414;text-shadow:0.25px 0 0 #141414"><span class="sx" style="transform:scaleX(0.850)">Purple</span></div>
<div class="t" style="left:781.9px;top:1027.5px;font-size:9.13px;color:#141414;text-shadow:0.25px 0 0 #141414"><span class="sx" style="transform:scaleX(0.850)">Yellow</span></div>
<div class="t" style="left:782.2px;top:1036.8px;font-size:9.13px;color:#141414;text-shadow:0.25px 0 0 #141414"><span class="sx" style="transform:scaleX(0.850)">Green</span></div>
<div class="t" style="left:819.0px;top:1027.5px;font-size:9.13px;color:#141414;text-shadow:0.25px 0 0 #141414"><span class="sx" style="transform:scaleX(0.850)">Orange</span></div>
<div class="t" style="left:820.9px;top:1036.8px;font-size:9.13px;color:#141414;text-shadow:0.25px 0 0 #141414"><span class="sx" style="transform:scaleX(0.850)">Yellow</span></div>
<div class="t" style="left:863.2px;top:1037.0px;font-size:9.13px;color:#141414;text-shadow:0.25px 0 0 #141414"><span class="sx" style="transform:scaleX(0.850)">Blue</span></div>
<div class="t" style="left:899.1px;top:1037.0px;font-size:9.13px;color:#141414;text-shadow:0.25px 0 0 #141414"><span class="sx" style="transform:scaleX(0.850)">Green</span></div>
<div class="t" style="left:941.8px;top:1037.0px;font-size:9.13px;color:#141414;text-shadow:0.25px 0 0 #141414"><span class="sx" style="transform:scaleX(0.850)">Red</span></div>
<div class="t" style="left:976.8px;top:1037.0px;font-size:9.13px;color:#141414;text-shadow:0.25px 0 0 #141414"><span class="sx" style="transform:scaleX(0.850)">Yellow</span></div>
<div class="t" style="left:1011.7px;top:1037.0px;font-size:9.13px;color:#141414;text-shadow:0.25px 0 0 #141414"><span class="sx" style="transform:scaleX(0.850)">Magenta</span></div>
<div class="t" style="left:1056.8px;top:1037.0px;font-size:9.13px;color:#141414;text-shadow:0.25px 0 0 #141414"><span class="sx" style="transform:scaleX(0.850)">Cyan</span></div>
<div class="t" style="left:1086.7px;top:1037.0px;font-size:9.13px;color:#141414;text-shadow:0.25px 0 0 #141414"><span class="sx" style="transform:scaleX(0.850)">100% Red</span></div>
<div class="t" style="left:1133.8px;top:1027.5px;font-size:9.13px;color:#141414;text-shadow:0.25px 0 0 #141414"><span class="sx" style="transform:scaleX(0.850)">100%</span></div>
<div class="t" style="left:1133.0px;top:1036.8px;font-size:9.13px;color:#141414;text-shadow:0.25px 0 0 #141414"><span class="sx" style="transform:scaleX(0.850)">Green</span></div>
<div class="t" style="left:1172.8px;top:1027.5px;font-size:9.13px;color:#141414;text-shadow:0.25px 0 0 #141414"><span class="sx" style="transform:scaleX(0.850)">100%</span></div>
<div class="t" style="left:1175.0px;top:1036.8px;font-size:9.13px;color:#141414;text-shadow:0.25px 0 0 #141414"><span class="sx" style="transform:scaleX(0.850)">Blue</span></div>
<div class="t" style="left:1211.8px;top:1027.5px;font-size:9.13px;color:#141414;text-shadow:0.25px 0 0 #141414"><span class="sx" style="transform:scaleX(0.850)">100%</span></div>
<div class="t" style="left:1212.6px;top:1036.8px;font-size:9.13px;color:#141414;text-shadow:0.25px 0 0 #141414"><span class="sx" style="transform:scaleX(0.850)">Cyan</span></div>
<div class="t" style="left:1250.7px;top:1027.5px;font-size:9.13px;color:#141414;text-shadow:0.25px 0 0 #141414"><span class="sx" style="transform:scaleX(0.850)">100%</span></div>
<div class="t" style="left:1245.6px;top:1036.8px;font-size:9.13px;color:#141414;text-shadow:0.25px 0 0 #141414"><span class="sx" style="transform:scaleX(0.850)">Magenta</span></div>
<div class="t" style="left:1289.7px;top:1027.5px;font-size:9.13px;color:#141414;text-shadow:0.25px 0 0 #141414"><span class="sx" style="transform:scaleX(0.850)">100%</span></div>
<div class="t" style="left:1288.6px;top:1036.8px;font-size:9.13px;color:#141414;text-shadow:0.25px 0 0 #141414"><span class="sx" style="transform:scaleX(0.850)">Yellow</span></div>
<div class="t" style="left:1333.9px;top:1037.0px;font-size:9.13px;color:#141414;text-shadow:0.25px 0 0 #141414"><span class="sx" style="transform:scaleX(0.850)">2E</span></div>
<div class="t" style="left:1373.0px;top:1037.0px;font-size:9.13px;color:#141414;text-shadow:0.25px 0 0 #141414"><span class="sx" style="transform:scaleX(0.850)">2F</span></div>
<div class="t" style="left:1411.8px;top:1037.0px;font-size:9.13px;color:#141414;text-shadow:0.25px 0 0 #141414"><span class="sx" style="transform:scaleX(0.850)">2K</span></div>
<div class="t" style="left:1450.5px;top:1037.0px;font-size:9.13px;color:#141414;text-shadow:0.25px 0 0 #141414"><span class="sx" style="transform:scaleX(0.850)">5D</span></div>
<div class="t" style="left:1489.7px;top:1037.0px;font-size:9.13px;color:#141414;text-shadow:0.25px 0 0 #141414"><span class="sx" style="transform:scaleX(0.850)">7E</span></div>
<div class="t" style="left:1528.9px;top:1037.0px;font-size:9.13px;color:#141414;text-shadow:0.25px 0 0 #141414"><span class="sx" style="transform:scaleX(0.850)">7F</span></div>
<div class="t" style="left:1567.2px;top:1037.0px;font-size:9.13px;color:#141414;text-shadow:0.25px 0 0 #141414"><span class="sx" style="transform:scaleX(0.850)">7G</span></div>
<div class="t" style="left:1606.4px;top:1037.0px;font-size:9.13px;color:#141414;text-shadow:0.25px 0 0 #141414"><span class="sx" style="transform:scaleX(0.850)">7H</span></div>
<div class="t" style="left:1646.3px;top:1037.0px;font-size:9.13px;color:#141414;text-shadow:0.25px 0 0 #141414"><span class="sx" style="transform:scaleX(0.850)">7J</span></div>
<div class="a" style="left:1669px;top:1049px;width:9px;height:9px;background:#777;border-radius:2px"></div>
<svg class="a" style="left:1671px;top:1050px" width="6" height="8"><path d="M1 0.5L1 7.5L5 4Z" fill="#333"/></svg>
<div class="a" style="left:1678px;top:1011px;width:242px;height:47px;background:#333"></div>
<div class="a" style="left:1678px;top:1026px;width:36px;height:32px;background:linear-gradient(#5a5a5a,#484848)"></div>
<div class="a" style="left:1684px;top:1030px;width:23px;height:23px;border:2px solid #222;border-radius:4px;background:linear-gradient(#9a9a9a,#7a7a7a)"></div>
<div class="a" style="left:1691px;top:1036px;width:10px;height:11px;background:#000"></div>
<div class="a" style="left:1715.0px;top:1011.5px;width:33.2px;height:22px;background:linear-gradient(#8a8a8a,#6e6e6e);border-radius:3px 3px 0 0"></div>
<div class="a" style="left:1725.0px;top:1016px;width:13px;height:13px;border-radius:50%;background:rgba(0,0,0,.18)"></div>
<div class="a" style="left:1749.2px;top:1011.5px;width:33.2px;height:22px;background:linear-gradient(#8a8a8a,#6e6e6e);border-radius:3px 3px 0 0"></div>
<div class="a" style="left:1759.2px;top:1016px;width:13px;height:13px;border-radius:50%;background:rgba(0,0,0,.18)"></div>
<div class="a" style="left:1783.4px;top:1011.5px;width:33.2px;height:22px;background:linear-gradient(#8a8a8a,#6e6e6e);border-radius:3px 3px 0 0"></div>
<div class="a" style="left:1793.4px;top:1016px;width:13px;height:13px;border-radius:50%;background:rgba(0,0,0,.18)"></div>
<div class="a" style="left:1817.6px;top:1011.5px;width:33.2px;height:22px;background:linear-gradient(#8a8a8a,#6e6e6e);border-radius:3px 3px 0 0"></div>
<div class="a" style="left:1827.6px;top:1016px;width:13px;height:13px;border-radius:50%;background:rgba(0,0,0,.18)"></div>
<div class="a" style="left:1851.8px;top:1011.5px;width:33.2px;height:22px;background:linear-gradient(#444,#3a3a3a);border-radius:3px 3px 0 0"></div>
<div class="a" style="left:1861.8px;top:1016px;width:13px;height:13px;border-radius:50%;background:rgba(0,0,0,.18)"></div>
<div class="a" style="left:1886.0px;top:1011.5px;width:33.2px;height:22px;background:linear-gradient(#444,#3a3a3a);border-radius:3px 3px 0 0"></div>
<div class="a" style="left:1896.0px;top:1016px;width:13px;height:13px;border-radius:50%;background:rgba(0,0,0,.18)"></div>
<div class="a" style="left:1715px;top:1034.7px;width:101.5px;height:23.3px;background:linear-gradient(#b4b4b4,#9a9a9a 50%,#8a8a8a);border-radius:3px 0 0 0;border-right:1px solid #666"></div>
<div class="a" style="left:1817px;top:1034.7px;width:103px;height:23.3px;background:linear-gradient(#b4b4b4,#9a9a9a 50%,#8a8a8a)"></div>
<div class="a" style="left:1730.5px;top:1038.8px;width:14px;height:14px;border-radius:50%;background:radial-gradient(circle at 50% 40%,#a8a8a8 30%,#7c7c7c 100%);box-shadow:0 0 0 1px rgba(0,0,0,.08)"></div>
<div class="a" style="left:1890.5px;top:1038.8px;width:14px;height:14px;border-radius:50%;background:radial-gradient(circle at 50% 40%,#a8a8a8 30%,#7c7c7c 100%);box-shadow:0 0 0 1px rgba(0,0,0,.08)"></div>
<svg class="a" style="left:1733px;top:1041px" width="9" height="9"><path d="M4 1L1 4.5L4 8M8 1L5 4.5L8 8" fill="none" stroke="#333" stroke-width="1.2"/></svg>
<svg class="a" style="left:1893px;top:1041px" width="9" height="9"><path d="M1 1L4 4.5L1 8M5 1L8 4.5L5 8" fill="none" stroke="#333" stroke-width="1.2"/></svg>
<div class="t" style="left:1757.5px;top:1037.8px;font-size:16.67px;color:#262626"><span class="sx" style="transform:scaleX(1.012)">Back</span></div>
<div class="t" style="left:1837.5px;top:1037.8px;font-size:16.67px;color:#262626"><span class="sx" style="transform:scaleX(1.118)">Next</span></div>
<svg class="a" style="left:1620px;top:985px" width="300" height="73" viewBox="0 0 300 73"><polyline points="50.7,40.7 49.7,19.3 11,11.7 12.1,47.6 34.5,60 76.6,46.9 20,44.2" fill="none" stroke="rgba(235,235,235,.75)" stroke-width="5.5" stroke-linejoin="round" stroke-linecap="round"/><polyline points="50.7,40.7 49.7,19.3 11,11.7 12.1,47.6 34.5,60 76.6,46.9 20,44.2" fill="none" stroke="rgba(150,35,50,.85)" stroke-width="3.2" stroke-linejoin="round" stroke-linecap="round"/><path d="M21.4,24.2 L33.8,39.3 L54.5,11" fill="none" stroke="rgba(235,235,235,.8)" stroke-width="5" stroke-linejoin="round" stroke-linecap="round"/><path d="M21.4,24.2 L33.8,39.3 L54.5,11" fill="none" stroke="rgba(45,45,45,.9)" stroke-width="2.8" stroke-linejoin="round" stroke-linecap="round"/><g transform="translate(55,40) scale(.91,1)"><text x="0" y="0" font-family="Liberation Sans" font-weight="bold" font-size="28" letter-spacing="0" style="paint-order:stroke" stroke="rgba(235,235,235,.7)" stroke-width="2.2"><tspan fill="rgba(150,35,50,.72)">NOTEBOOK</tspan><tspan fill="rgba(25,25,25,.55)">CHECK</tspan></text></g></svg>
<div class="a" style="left:7px;top:1043.7px;width:158.3px;height:14.3px;background:#fff;border:1px solid #bbb"></div>
<div class="t" style="left:11.0px;top:1045.4px;font-size:10.14px;color:#3a3a3a"><span class="sx" style="transform:scaleX(0.867)">#user-noods | Lewdie Pones - Discord</span></div>

</body></html>
